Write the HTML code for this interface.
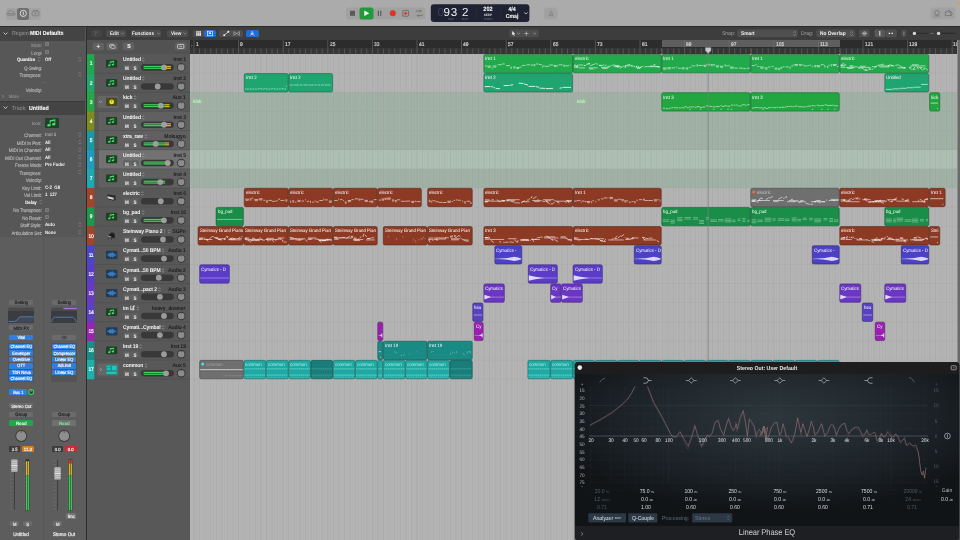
<!DOCTYPE html>
<html><head><meta charset="utf-8"><title>Logic Pro</title>
<style>
html,body{margin:0;padding:0}
body{width:960px;height:540px;overflow:hidden;position:relative;background:#595959;font-family:"Liberation Sans","Noto Sans CJK JP",sans-serif;}
div{position:absolute;box-sizing:border-box}
.t{white-space:nowrap;letter-spacing:0;text-rendering:geometricPrecision}
svg{position:absolute;left:0;top:0;overflow:visible}
svg text{font-family:"Liberation Sans","Noto Sans CJK JP",sans-serif;}
</style></head><body>
<div id="app" style="left:0;top:0;width:960px;height:540px;will-change:transform;overflow:hidden">
<div style="left:0.00px;top:0.00px;width:960.00px;height:26.30px;background:#ababab;"></div>
<div style="left:0.00px;top:26.00px;width:960.00px;height:0.80px;background:#2a2a2a;"></div>
<div style="left:5.50px;top:7.50px;width:35.50px;height:12.00px;background:#a1a1a1;border-radius:3px"></div>
<div style="left:17.30px;top:7.50px;width:12.00px;height:12.00px;background:#6f6f6f;border-radius:2.5px"></div>
<svg width="960" height="27" viewBox="0 0 960 27">
<g fill="none" stroke="#7b7b7b" stroke-width="0.8">
<path d="M7.6 15.2 h6.6 a1 1 0 0 0 .6 -1.6 a2 2 0 0 0 -2.2 -2 a2.4 2.4 0 0 0 -4.4 .8 a1.5 1.5 0 0 0 -.6 2.8 z"/>
<path d="M7.4 13.6 h7.4"/>
<rect x="32.2" y="11.2" width="6.6" height="4.6" rx="0.8"/>
<path d="M33.4 11.2 v-0.6 h4.2 v0.6"/>
<path d="M35.5 12.4 v2.2 M34.4 13.5 h2.2"/>
</g>
<circle cx="23.3" cy="13.4" r="3.1" fill="none" stroke="#f2f2f2" stroke-width="0.8"/>
<path d="M23.3 11.7 v3.4" stroke="#f2f2f2" stroke-width="0.8"/>
<!-- transport -->
<rect x="346.0" y="7.5" width="79.5" height="12" rx="3" fill="#a1a1a1"/>
<rect x="350" y="10.8" width="5" height="5" fill="#5a5a5a"/>
<rect x="359.5" y="7.5" width="14" height="12" rx="2.5" fill="#22993c"/>
<path d="M364.3 10.6 v5.4 l4.9 -2.7 z" fill="#fff"/>
<rect x="377.8" y="10.7" width="1.2" height="5.2" fill="#5a5a5a"/><rect x="380.2" y="10.7" width="1.2" height="5.2" fill="#5a5a5a"/>
<circle cx="392.8" cy="13.3" r="3" fill="#dc3228"/>
<rect x="402.8" y="10.4" width="5.8" height="5.8" rx="0.8" fill="none" stroke="#5a5a5a" stroke-width="0.7"/>
<circle cx="405.7" cy="13.3" r="1.4" fill="#dc3228"/>
<g fill="none" stroke="#666" stroke-width="0.8">
<path d="M416 12.2 a1.2 1.2 0 0 1 1.2 -1.2 h4 M420.2 9.8 l1.2 1.2 l-1.2 1.2"/>
<path d="M422.6 14.4 a1.2 1.2 0 0 1 -1.2 1.2 h-4 M418.4 16.8 l-1.2 -1.2 l1.2 -1.2"/>
</g>
<!-- LCD -->
<rect x="430.8" y="4.2" width="98.6" height="17.8" rx="3" fill="#1f2233"/>
<path d="M476.5 7 v12 M500.3 7 v12" stroke="#2c3044" stroke-width="0.5"/>
<path d="M524.3 12.4 l1.6 1.6 l1.6 -1.6" fill="none" stroke="#e8e8e8" stroke-width="0.8"/>
<!-- metronome btn -->
<rect x="544.2" y="7.5" width="13.3" height="12" rx="3" fill="#a1a1a1"/>
<path d="M549 15.8 l1.6 -4.6 h.9 l1.6 4.6 z M549.6 14.3 h3.2" fill="none" stroke="#7f7f7f" stroke-width="0.7"/>
<!-- right icons -->
<rect x="930.5" y="7.5" width="25" height="12" rx="3" fill="#a1a1a1"/>
<g fill="none" stroke="#6c6c6c" stroke-width="0.7">
<circle cx="937" cy="12.8" r="2.3"/><path d="M934.4 16 h5.2"/>
<path d="M945.4 12 h1.6 l.5 -1.3 h2.2 l.5 1.3 h.6 v3.6 h-5.4 z M948.6 12.8 l1.6 -1.8 l2.2 2.4 l-1.4 2.6"/>
</g>
<circle cx="957.3" cy="3.2" r="1.1" fill="#f39a1e"/>
</svg>
<div class="t" style="left:437.60px;transform-origin:0 50%;top:7px;font-size:11.6px;line-height:12px;color:#3d4256;font-weight:normal;transform:scaleX(1);">0</div>
<div class="t" style="left:443.40px;transform-origin:0 50%;top:7px;font-size:11.6px;line-height:12px;color:#f4f4f4;font-weight:normal;transform:scaleX(1);letter-spacing:0.9px">93</div>
<div class="t" style="left:462.00px;transform-origin:0 50%;top:7px;font-size:11.6px;line-height:12px;color:#f4f4f4;font-weight:normal;transform:scaleX(1);">2</div>
<div class="t" style="left:440.60px;width:20px;text-align:center;transform-origin:50% 50%;top:17px;font-size:2.89px;line-height:4px;color:#6f748a;font-weight:normal;transform:scaleX(0.9);">BAR</div>
<div class="t" style="left:455.40px;width:20px;text-align:center;transform-origin:50% 50%;top:17px;font-size:2.89px;line-height:4px;color:#6f748a;font-weight:normal;transform:scaleX(0.9);">BEAT</div>
<div class="t" style="left:473.20px;width:30px;text-align:center;transform-origin:50% 50%;top:6px;font-size:6.22px;line-height:7px;color:#f0f0f0;font-weight:bold;transform:scaleX(0.9);-webkit-text-stroke:0.12px #f0f0f0;">202</div>
<div class="t" style="left:473.20px;width:30px;text-align:center;transform-origin:50% 50%;top:13px;font-size:3.33px;line-height:4px;color:#c8cad4;font-weight:bold;transform:scaleX(0.9);-webkit-text-stroke:0.07px #c8cad4;">KEEP</div>
<div class="t" style="left:473.20px;width:30px;text-align:center;transform-origin:50% 50%;top:17px;font-size:2.89px;line-height:4px;color:#6f748a;font-weight:normal;transform:scaleX(0.9);">TEMPO</div>
<div class="t" style="left:496.60px;width:30px;text-align:center;transform-origin:50% 50%;top:7px;font-size:5.78px;line-height:6px;color:#f0f0f0;font-weight:bold;transform:scaleX(0.9);-webkit-text-stroke:0.12px #f0f0f0;">4/4</div>
<div class="t" style="left:496.60px;width:30px;text-align:center;transform-origin:50% 50%;top:14px;font-size:5.78px;line-height:6px;color:#f0f0f0;font-weight:bold;transform:scaleX(0.9);-webkit-text-stroke:0.12px #f0f0f0;">Cmaj</div>
<div style="left:0.00px;top:26.80px;width:85.60px;height:210.00px;background:#575757;"></div>
<div style="left:0.00px;top:236.50px;width:85.60px;height:304.00px;background:#5d5d5d;"></div>
<div style="left:85.50px;top:26.80px;width:1.30px;height:514.00px;background:#2c2c2c;"></div>
<div style="left:0.00px;top:26.80px;width:85.40px;height:13.90px;background:#444444;"></div>
<div class="t" style="left:11.60px;transform-origin:0 50%;top:31px;font-size:5.89px;line-height:6px;color:#9a9a9a;font-weight:normal;transform:scaleX(0.9);">Region:</div>
<div class="t" style="left:30.40px;transform-origin:0 50%;top:31px;font-size:5.89px;line-height:6px;color:#f2f2f2;font-weight:bold;transform:scaleX(0.9);-webkit-text-stroke:0.12px #f2f2f2;">MIDI Defaults</div>
<div class="t" style="right:918.20px;transform-origin:100% 50%;top:43px;font-size:5.0px;line-height:6px;color:#8a8a8a;font-weight:normal;transform:scaleX(0.9);-webkit-text-stroke:0.18px #8a8a8a;letter-spacing:-0.05px">Mute:</div>
<div style="left:44.60px;top:42.30px;width:4.00px;height:4.00px;background:#6a6a6a;border-radius:0.8px;border:0.4px solid #7c7c7c"></div>
<div class="t" style="right:918.20px;transform-origin:100% 50%;top:51px;font-size:5.0px;line-height:6px;color:#a8a8a8;font-weight:normal;transform:scaleX(0.9);-webkit-text-stroke:0.18px #a8a8a8;letter-spacing:-0.05px">Loop:</div>
<div style="left:44.60px;top:49.80px;width:4.00px;height:4.00px;background:#6a6a6a;border-radius:0.8px;border:0.4px solid #7c7c7c"></div>
<div class="t" style="right:924.80px;transform-origin:100% 50%;top:58px;font-size:4.78px;line-height:5px;color:#f0f0f0;font-weight:bold;transform:scaleX(0.9);-webkit-text-stroke:0.10px #f0f0f0;">Quantize</div>
<svg width="90" height="540"><path d="M37.8 58.699999999999996 l1.2 -1.3 l1.2 1.3 M37.8 60.1 l1.2 1.3 l1.2 -1.3" fill="none" stroke="#9c9c9c" stroke-width="0.55"/></svg>
<div class="t" style="right:918.20px;transform-origin:100% 50%;top:58px;font-size:5.0px;line-height:6px;color:#b4b4b4;font-weight:normal;transform:scaleX(0.9);-webkit-text-stroke:0.18px #b4b4b4;letter-spacing:-0.05px"></div>
<div class="t" style="left:44.80px;transform-origin:0 50%;top:58px;font-size:4.89px;line-height:5px;color:#f0f0f0;font-weight:bold;transform:scaleX(0.9);letter-spacing:-0.05px">Off</div>
<svg width="90" height="540"><path d="M78.6 58.699999999999996 l1.2 -1.3 l1.2 1.3 M78.6 60.1 l1.2 1.3 l1.2 -1.3" fill="none" stroke="#9c9c9c" stroke-width="0.55"/></svg>
<div class="t" style="right:918.20px;transform-origin:100% 50%;top:66px;font-size:5.0px;line-height:6px;color:#b4b4b4;font-weight:normal;transform:scaleX(0.9);-webkit-text-stroke:0.18px #b4b4b4;letter-spacing:-0.05px">Q-Swing:</div>
<div class="t" style="right:918.20px;transform-origin:100% 50%;top:73px;font-size:5.0px;line-height:6px;color:#b4b4b4;font-weight:normal;transform:scaleX(0.9);-webkit-text-stroke:0.18px #b4b4b4;letter-spacing:-0.05px">Transpose:</div>
<svg width="90" height="540"><path d="M78.6 73.7 l1.2 -1.3 l1.2 1.3 M78.6 75.10000000000001 l1.2 1.3 l1.2 -1.3" fill="none" stroke="#9c9c9c" stroke-width="0.55"/></svg>
<div class="t" style="left:33.60px;width:20px;text-align:center;transform-origin:50% 50%;top:80px;font-size:4.67px;line-height:5px;color:#8a8a8a;font-weight:normal;transform:scaleX(0.9);">-  -</div>
<div class="t" style="right:918.20px;transform-origin:100% 50%;top:88px;font-size:5.0px;line-height:6px;color:#b4b4b4;font-weight:normal;transform:scaleX(0.9);-webkit-text-stroke:0.18px #b4b4b4;letter-spacing:-0.05px">Velocity:</div>
<div class="t" style="left:8.60px;transform-origin:0 50%;top:95px;font-size:4.78px;line-height:5px;color:#a3a3a3;font-weight:normal;transform:scaleX(0.9);">More</div>
<div style="left:0.00px;top:101.00px;width:85.40px;height:0.60px;background:#3a3a3a;"></div>
<div style="left:0.00px;top:101.60px;width:85.40px;height:13.40px;background:#444444;"></div>
<svg width="90" height="120"><path d="M3.6 32.6 l1.9 1.9 l1.9 -1.9" fill="none" stroke="#e6e6e6" stroke-width="0.8"/><path d="M3.6 106.6 l1.9 1.9 l1.9 -1.9" fill="none" stroke="#e6e6e6" stroke-width="0.8"/><path d="M2.4 95 l1.3 1.4 l-1.3 1.4" fill="none" stroke="#b0b0b0" stroke-width="0.6"/></svg>
<div class="t" style="left:11.60px;transform-origin:0 50%;top:106px;font-size:5.89px;line-height:6px;color:#9a9a9a;font-weight:normal;transform:scaleX(0.9);">Track:</div>
<div class="t" style="left:28.60px;transform-origin:0 50%;top:106px;font-size:5.89px;line-height:6px;color:#f2f2f2;font-weight:bold;transform:scaleX(0.9);-webkit-text-stroke:0.12px #f2f2f2;">Untitled</div>
<div class="t" style="right:918.20px;transform-origin:100% 50%;top:122px;font-size:4.78px;line-height:5px;color:#b4b4b4;font-weight:normal;transform:scaleX(0.9);">Icon:</div>
<div style="left:45.00px;top:117.60px;width:13.60px;height:10.60px;background:#22412c;border-radius:1px"></div>
<svg width="90" height="140"><path d="M49.77 120.17 L55.19 119.23 L55.19 120.76 L49.77 121.70z" fill="#48e264"/><path d="M50.12 120.52 V125.13 M54.84 119.58 V124.18" stroke="#48e264" stroke-width="0.73"/><ellipse cx="48.94" cy="125.24" rx="1.59" ry="1.18" fill="#48e264"/><ellipse cx="53.66" cy="124.30" rx="1.59" ry="1.18" fill="#48e264"/></svg>
<div class="t" style="right:918.20px;transform-origin:100% 50%;top:133px;font-size:5.0px;line-height:6px;color:#b4b4b4;font-weight:normal;transform:scaleX(0.9);-webkit-text-stroke:0.18px #b4b4b4;letter-spacing:-0.05px">Channel:</div>
<div class="t" style="left:44.80px;transform-origin:0 50%;top:133px;font-size:4.89px;line-height:5px;color:#a8a8a8;font-weight:bold;transform:scaleX(0.9);letter-spacing:-0.05px">Inst 5</div>
<svg width="90" height="540"><path d="M78.6 133.9 l1.2 -1.3 l1.2 1.3 M78.6 135.29999999999998 l1.2 1.3 l1.2 -1.3" fill="none" stroke="#9c9c9c" stroke-width="0.55"/></svg>
<div class="t" style="right:918.20px;transform-origin:100% 50%;top:141px;font-size:5.0px;line-height:6px;color:#b4b4b4;font-weight:normal;transform:scaleX(0.9);-webkit-text-stroke:0.18px #b4b4b4;letter-spacing:-0.05px">MIDI In Port:</div>
<div class="t" style="left:44.80px;transform-origin:0 50%;top:141px;font-size:4.89px;line-height:5px;color:#f0f0f0;font-weight:bold;transform:scaleX(0.9);letter-spacing:-0.05px">All</div>
<svg width="90" height="540"><path d="M78.6 141.4 l1.2 -1.3 l1.2 1.3 M78.6 142.79999999999998 l1.2 1.3 l1.2 -1.3" fill="none" stroke="#9c9c9c" stroke-width="0.55"/></svg>
<div class="t" style="right:918.20px;transform-origin:100% 50%;top:148px;font-size:5.0px;line-height:6px;color:#b4b4b4;font-weight:normal;transform:scaleX(0.9);-webkit-text-stroke:0.18px #b4b4b4;letter-spacing:-0.05px">MIDI In Channel:</div>
<div class="t" style="left:44.80px;transform-origin:0 50%;top:148px;font-size:4.89px;line-height:5px;color:#f0f0f0;font-weight:bold;transform:scaleX(0.9);letter-spacing:-0.05px">All</div>
<svg width="90" height="540"><path d="M78.6 148.9 l1.2 -1.3 l1.2 1.3 M78.6 150.29999999999998 l1.2 1.3 l1.2 -1.3" fill="none" stroke="#9c9c9c" stroke-width="0.55"/></svg>
<div class="t" style="right:918.20px;transform-origin:100% 50%;top:156px;font-size:5.0px;line-height:6px;color:#b4b4b4;font-weight:normal;transform:scaleX(0.9);-webkit-text-stroke:0.18px #b4b4b4;letter-spacing:-0.05px">MIDI Out Channel:</div>
<div class="t" style="left:44.80px;transform-origin:0 50%;top:156px;font-size:4.89px;line-height:5px;color:#f0f0f0;font-weight:bold;transform:scaleX(0.9);letter-spacing:-0.05px">All</div>
<svg width="90" height="540"><path d="M78.6 156.4 l1.2 -1.3 l1.2 1.3 M78.6 157.79999999999998 l1.2 1.3 l1.2 -1.3" fill="none" stroke="#9c9c9c" stroke-width="0.55"/></svg>
<div class="t" style="right:918.20px;transform-origin:100% 50%;top:163px;font-size:5.0px;line-height:6px;color:#b4b4b4;font-weight:normal;transform:scaleX(0.9);-webkit-text-stroke:0.18px #b4b4b4;letter-spacing:-0.05px">Freeze Mode:</div>
<div class="t" style="left:44.80px;transform-origin:0 50%;top:163px;font-size:4.89px;line-height:5px;color:#f0f0f0;font-weight:bold;transform:scaleX(0.9);letter-spacing:-0.05px">Pre Fader</div>
<svg width="90" height="540"><path d="M78.6 163.9 l1.2 -1.3 l1.2 1.3 M78.6 165.29999999999998 l1.2 1.3 l1.2 -1.3" fill="none" stroke="#9c9c9c" stroke-width="0.55"/></svg>
<div class="t" style="right:918.20px;transform-origin:100% 50%;top:171px;font-size:5.0px;line-height:6px;color:#b4b4b4;font-weight:normal;transform:scaleX(0.9);-webkit-text-stroke:0.18px #b4b4b4;letter-spacing:-0.05px">Transpose:</div>
<svg width="90" height="540"><path d="M78.6 171.4 l1.2 -1.3 l1.2 1.3 M78.6 172.79999999999998 l1.2 1.3 l1.2 -1.3" fill="none" stroke="#9c9c9c" stroke-width="0.55"/></svg>
<div class="t" style="right:918.20px;transform-origin:100% 50%;top:178px;font-size:5.0px;line-height:6px;color:#b4b4b4;font-weight:normal;transform:scaleX(0.9);-webkit-text-stroke:0.18px #b4b4b4;letter-spacing:-0.05px">Velocity:</div>
<div class="t" style="right:918.20px;transform-origin:100% 50%;top:186px;font-size:5.0px;line-height:6px;color:#b4b4b4;font-weight:normal;transform:scaleX(0.9);-webkit-text-stroke:0.18px #b4b4b4;letter-spacing:-0.05px">Key Limit:</div>
<div class="t" style="left:44.80px;transform-origin:0 50%;top:186px;font-size:4.89px;line-height:5px;color:#f0f0f0;font-weight:bold;transform:scaleX(0.9);letter-spacing:-0.05px">C-2&nbsp;&nbsp;G8</div>
<div class="t" style="right:918.20px;transform-origin:100% 50%;top:193px;font-size:5.0px;line-height:6px;color:#b4b4b4;font-weight:normal;transform:scaleX(0.9);-webkit-text-stroke:0.18px #b4b4b4;letter-spacing:-0.05px">Vel Limit:</div>
<div class="t" style="left:44.80px;transform-origin:0 50%;top:193px;font-size:4.89px;line-height:5px;color:#f0f0f0;font-weight:bold;transform:scaleX(0.9);letter-spacing:-0.05px">1&nbsp;&nbsp;127</div>
<div class="t" style="right:923.40px;transform-origin:100% 50%;top:201px;font-size:4.78px;line-height:5px;color:#f0f0f0;font-weight:bold;transform:scaleX(0.9);-webkit-text-stroke:0.10px #f0f0f0;">Delay</div>
<svg width="90" height="540"><path d="M39.4 201.4 l1.2 -1.3 l1.2 1.3 M39.4 202.79999999999998 l1.2 1.3 l1.2 -1.3" fill="none" stroke="#9c9c9c" stroke-width="0.55"/></svg>
<div class="t" style="right:918.20px;transform-origin:100% 50%;top:208px;font-size:5.0px;line-height:6px;color:#b4b4b4;font-weight:normal;transform:scaleX(0.9);-webkit-text-stroke:0.18px #b4b4b4;letter-spacing:-0.05px">No Transpose:</div>
<div style="left:44.60px;top:207.50px;width:4.00px;height:4.00px;background:#6a6a6a;border-radius:0.8px;border:0.4px solid #7c7c7c"></div>
<div class="t" style="right:918.20px;transform-origin:100% 50%;top:216px;font-size:5.0px;line-height:6px;color:#b4b4b4;font-weight:normal;transform:scaleX(0.9);-webkit-text-stroke:0.18px #b4b4b4;letter-spacing:-0.05px">No Reset:</div>
<div style="left:44.60px;top:215.00px;width:4.00px;height:4.00px;background:#6a6a6a;border-radius:0.8px;border:0.4px solid #7c7c7c"></div>
<div class="t" style="right:918.20px;transform-origin:100% 50%;top:223px;font-size:5.0px;line-height:6px;color:#b4b4b4;font-weight:normal;transform:scaleX(0.9);-webkit-text-stroke:0.18px #b4b4b4;letter-spacing:-0.05px">Staff Style:</div>
<div class="t" style="left:44.80px;transform-origin:0 50%;top:223px;font-size:4.89px;line-height:5px;color:#f0f0f0;font-weight:bold;transform:scaleX(0.9);letter-spacing:-0.05px">Auto</div>
<svg width="90" height="540"><path d="M78.6 223.9 l1.2 -1.3 l1.2 1.3 M78.6 225.29999999999998 l1.2 1.3 l1.2 -1.3" fill="none" stroke="#9c9c9c" stroke-width="0.55"/></svg>
<div class="t" style="right:918.20px;transform-origin:100% 50%;top:231px;font-size:5.0px;line-height:6px;color:#b4b4b4;font-weight:normal;transform:scaleX(0.9);-webkit-text-stroke:0.18px #b4b4b4;letter-spacing:-0.05px">Articulation Set:</div>
<div class="t" style="left:44.80px;transform-origin:0 50%;top:231px;font-size:4.89px;line-height:5px;color:#f0f0f0;font-weight:bold;transform:scaleX(0.9);letter-spacing:-0.05px">None</div>
<svg width="90" height="540"><path d="M78.6 231.4 l1.2 -1.3 l1.2 1.3 M78.6 232.79999999999998 l1.2 1.3 l1.2 -1.3" fill="none" stroke="#9c9c9c" stroke-width="0.55"/></svg>
<div style="left:42.80px;top:236.50px;width:0.60px;height:304.00px;background:#565656;"></div>
<div style="left:8.90px;top:299.50px;width:24.60px;height:5.40px;background:#6b6b6b;border-radius:1.2px"></div>
<div class="t" style="left:3.90px;width:34.6px;text-align:center;transform-origin:50% 50%;top:301px;font-size:4.78px;line-height:5px;color:#1c1c1c;font-weight:normal;transform:scaleX(0.9);-webkit-text-stroke:0.17px #1c1c1c;">Setting</div>
<div style="left:8.40px;top:311.00px;width:25.60px;height:11.60px;background:#3a3c40;"></div>
<div style="left:51.90px;top:299.50px;width:24.60px;height:5.40px;background:#6b6b6b;border-radius:1.2px"></div>
<div class="t" style="left:46.90px;width:34.6px;text-align:center;transform-origin:50% 50%;top:301px;font-size:4.78px;line-height:5px;color:#1c1c1c;font-weight:normal;transform:scaleX(0.9);-webkit-text-stroke:0.17px #1c1c1c;">Setting</div>
<div style="left:51.40px;top:311.00px;width:25.60px;height:11.60px;background:#3a3c40;"></div>
<svg width="90" height="540">
<rect x="8.4" y="307.6" width="25.6" height="3.4" fill="#4a4a4a"/>
<rect x="51.4" y="307.6" width="25.6" height="3.4" fill="#4a4a4a"/>
<rect x="63.4" y="307.9" width="13.4" height="1.3" fill="#b070e0"/>
<path d="M8.6 321.4 h6 c3 0 3 -4.6 6 -4.6 h13.2" fill="none" stroke="#5f86c0" stroke-width="0.8"/>
<path d="M8.6 321.4 h6 c3 0 3 -4.6 6 -4.6 h13.2 v5.6 h-25.2z" fill="#5f86c0" opacity="0.18"/>
<path d="M51.6 322 c1.2 -4.2 1.8 -4.8 4 -4.8 h16 c2.6 0 3.2 1.2 4.8 5" fill="none" stroke="#5f86c0" stroke-width="0.8"/>
</svg>
<div style="left:8.90px;top:325.10px;width:24.60px;height:5.00px;background:#6b6b6b;border-radius:1.2px"></div>
<div class="t" style="left:3.90px;width:34.6px;text-align:center;transform-origin:50% 50%;top:326px;font-size:4.67px;line-height:5px;color:#1c1c1c;font-weight:normal;transform:scaleX(0.9);-webkit-text-stroke:0.16px #1c1c1c;">MIDI FX</div>
<div style="left:8.90px;top:334.80px;width:24.60px;height:5.40px;background:#2f7fe0;border-radius:1.2px"></div>
<div class="t" style="left:3.90px;width:34.6px;text-align:center;transform-origin:50% 50%;top:335px;font-size:4.44px;line-height:5px;color:#fff;font-weight:normal;transform:scaleX(0.9);-webkit-text-stroke:0.16px #fff;">Vital</div>
<div style="left:51.90px;top:334.80px;width:24.60px;height:5.40px;background:#6b6b6b;border-radius:1.2px"></div>
<svg width="90" height="540"><circle cx="63.2" cy="337.5" r="1.4" fill="none" stroke="#2b2b2b" stroke-width="0.5"/><circle cx="65.2" cy="337.5" r="1.4" fill="none" stroke="#2b2b2b" stroke-width="0.5"/></svg>
<div style="left:8.40px;top:342.60px;width:25.60px;height:39.40px;background:#545454;border-radius:1px"></div>
<div style="left:51.40px;top:342.60px;width:25.60px;height:39.40px;background:#545454;border-radius:1px"></div>
<div style="left:8.90px;top:343.85px;width:24.60px;height:5.50px;background:#2f7fe0;border-radius:1.2px"></div>
<div class="t" style="left:3.90px;width:34.6px;text-align:center;transform-origin:50% 50%;top:344px;font-size:4.44px;line-height:5px;color:#fff;font-weight:normal;transform:scaleX(0.9);-webkit-text-stroke:0.16px #fff;">Channel EQ</div>
<div style="left:8.90px;top:350.27px;width:24.60px;height:5.50px;background:#2f7fe0;border-radius:1.2px"></div>
<div class="t" style="left:3.90px;width:34.6px;text-align:center;transform-origin:50% 50%;top:351px;font-size:4.44px;line-height:5px;color:#fff;font-weight:normal;transform:scaleX(0.9);-webkit-text-stroke:0.16px #fff;">Enveloper</div>
<div style="left:8.90px;top:356.69px;width:24.60px;height:5.50px;background:#2f7fe0;border-radius:1.2px"></div>
<div class="t" style="left:3.90px;width:34.6px;text-align:center;transform-origin:50% 50%;top:357px;font-size:4.44px;line-height:5px;color:#fff;font-weight:normal;transform:scaleX(0.9);-webkit-text-stroke:0.16px #fff;">Overdrive</div>
<div style="left:8.90px;top:363.11px;width:24.60px;height:5.50px;background:#2f7fe0;border-radius:1.2px"></div>
<div class="t" style="left:3.90px;width:34.6px;text-align:center;transform-origin:50% 50%;top:363px;font-size:4.44px;line-height:5px;color:#fff;font-weight:normal;transform:scaleX(0.9);-webkit-text-stroke:0.16px #fff;">OTT</div>
<div style="left:8.90px;top:369.53px;width:24.60px;height:5.50px;background:#2f7fe0;border-radius:1.2px"></div>
<div class="t" style="left:3.90px;width:34.6px;text-align:center;transform-origin:50% 50%;top:370px;font-size:4.44px;line-height:5px;color:#fff;font-weight:normal;transform:scaleX(0.9);-webkit-text-stroke:0.16px #fff;">TDR Nova</div>
<div style="left:8.90px;top:375.95px;width:24.60px;height:5.50px;background:#2f7fe0;border-radius:1.2px"></div>
<div class="t" style="left:3.90px;width:34.6px;text-align:center;transform-origin:50% 50%;top:376px;font-size:4.44px;line-height:5px;color:#fff;font-weight:normal;transform:scaleX(0.9);-webkit-text-stroke:0.16px #fff;">Channel EQ</div>
<div style="left:51.90px;top:343.85px;width:24.60px;height:5.50px;background:#2f7fe0;border-radius:1.2px"></div>
<div class="t" style="left:46.90px;width:34.6px;text-align:center;transform-origin:50% 50%;top:344px;font-size:4.44px;line-height:5px;color:#fff;font-weight:normal;transform:scaleX(0.9);-webkit-text-stroke:0.16px #fff;">Channel EQ</div>
<div style="left:51.90px;top:350.27px;width:24.60px;height:5.50px;background:#2f7fe0;border-radius:1.2px"></div>
<div class="t" style="left:46.90px;width:34.6px;text-align:center;transform-origin:50% 50%;top:351px;font-size:4.44px;line-height:5px;color:#fff;font-weight:normal;transform:scaleX(0.9);-webkit-text-stroke:0.16px #fff;">Compressor</div>
<div style="left:51.90px;top:356.69px;width:24.60px;height:5.50px;background:#2f7fe0;border-radius:1.2px"></div>
<div class="t" style="left:46.90px;width:34.6px;text-align:center;transform-origin:50% 50%;top:357px;font-size:4.44px;line-height:5px;color:#fff;font-weight:normal;transform:scaleX(0.9);-webkit-text-stroke:0.16px #fff;">Linear EQ</div>
<div style="left:51.90px;top:363.11px;width:24.60px;height:5.50px;background:#2f7fe0;border-radius:1.2px"></div>
<div class="t" style="left:46.90px;width:34.6px;text-align:center;transform-origin:50% 50%;top:363px;font-size:4.44px;line-height:5px;color:#fff;font-weight:normal;transform:scaleX(0.9);-webkit-text-stroke:0.16px #fff;">AdLimit</div>
<div style="left:51.90px;top:369.53px;width:24.60px;height:5.50px;background:#2f7fe0;border-radius:1.2px"></div>
<div class="t" style="left:46.90px;width:34.6px;text-align:center;transform-origin:50% 50%;top:370px;font-size:4.44px;line-height:5px;color:#fff;font-weight:normal;transform:scaleX(0.9);-webkit-text-stroke:0.16px #fff;">Linear EQ</div>
<div style="left:8.90px;top:389.20px;width:18.60px;height:5.60px;background:#2f7fe0;border-radius:1.2px"></div>
<div class="t" style="left:3.90px;width:28.6px;text-align:center;transform-origin:50% 50%;top:390px;font-size:4.44px;line-height:5px;color:#fff;font-weight:normal;transform:scaleX(0.9);-webkit-text-stroke:0.16px #fff;">Bus 1</div>
<svg width="90" height="540"><circle cx="31.2" cy="392.0" r="2.5" fill="#3a3a3a" stroke="#3fd070" stroke-width="1.1"/><path d="M31.2 392 v-2.2" stroke="#ddd" stroke-width="0.5"/></svg>
<div style="left:8.90px;top:402.70px;width:24.60px;height:5.40px;background:#6b6b6b;border-radius:1.2px"></div>
<div class="t" style="left:3.90px;width:34.6px;text-align:center;transform-origin:50% 50%;top:404px;font-size:4.67px;line-height:5px;color:#f0f0f0;font-weight:normal;transform:scaleX(0.9);-webkit-text-stroke:0.16px #f0f0f0;">Stereo Out</div>
<div style="left:8.90px;top:411.90px;width:24.60px;height:5.40px;background:#6b6b6b;border-radius:1.2px"></div>
<div class="t" style="left:3.90px;width:34.6px;text-align:center;transform-origin:50% 50%;top:413px;font-size:4.78px;line-height:5px;color:#1c1c1c;font-weight:normal;transform:scaleX(0.9);-webkit-text-stroke:0.17px #1c1c1c;">Group</div>
<div style="left:51.90px;top:411.90px;width:24.60px;height:5.40px;background:#6b6b6b;border-radius:1.2px"></div>
<div class="t" style="left:46.90px;width:34.6px;text-align:center;transform-origin:50% 50%;top:413px;font-size:4.78px;line-height:5px;color:#1c1c1c;font-weight:normal;transform:scaleX(0.9);-webkit-text-stroke:0.17px #1c1c1c;">Group</div>
<div style="left:8.90px;top:420.20px;width:24.60px;height:5.60px;background:#27a44a;border-radius:1.2px"></div>
<div class="t" style="left:3.90px;width:34.6px;text-align:center;transform-origin:50% 50%;top:422px;font-size:4.89px;line-height:5px;color:#f4fff4;font-weight:bold;transform:scaleX(0.9);">Read</div>
<div style="left:51.90px;top:420.20px;width:24.60px;height:5.60px;background:#707070;border-radius:1.2px"></div>
<div class="t" style="left:46.90px;width:34.6px;text-align:center;transform-origin:50% 50%;top:422px;font-size:4.89px;line-height:5px;color:#7ff09a;font-weight:bold;transform:scaleX(0.9);">Read</div>
<svg width="90" height="540">
<circle cx="21.2" cy="436.0" r="5.9" fill="#3a3a3a"/><circle cx="21.2" cy="436.0" r="5.0" fill="#8e8e8e"/><path d="M21.2 431.2 v1.6" stroke="#2a2a2a" stroke-width="0.6"/>
<circle cx="64.2" cy="436.0" r="5.9" fill="#3a3a3a"/><circle cx="64.2" cy="436.0" r="5.0" fill="#8e8e8e"/><path d="M64.2 431.2 v1.6" stroke="#2a2a2a" stroke-width="0.6"/>
</svg>
<div style="left:8.80px;top:445.60px;width:11.60px;height:6.00px;background:#3b3b3b;border-radius:1.2px"></div>
<div class="t" style="left:3.80px;width:21.6px;text-align:center;transform-origin:50% 50%;top:447px;font-size:4.67px;line-height:5px;color:#e8e8e8;font-weight:normal;transform:scaleX(0.9);-webkit-text-stroke:0.16px #e8e8e8;">3.5</div>
<div style="left:22.00px;top:445.60px;width:11.60px;height:6.00px;background:#d97a1e;border-radius:1.2px"></div>
<div class="t" style="left:17.00px;width:21.6px;text-align:center;transform-origin:50% 50%;top:447px;font-size:4.67px;line-height:5px;color:#fff;font-weight:normal;transform:scaleX(0.9);-webkit-text-stroke:0.16px #fff;">11.3</div>
<div style="left:51.80px;top:445.60px;width:11.60px;height:6.00px;background:#3b3b3b;border-radius:1.2px"></div>
<div class="t" style="left:46.80px;width:21.6px;text-align:center;transform-origin:50% 50%;top:447px;font-size:4.67px;line-height:5px;color:#e8e8e8;font-weight:normal;transform:scaleX(0.9);-webkit-text-stroke:0.16px #e8e8e8;">0.0</div>
<div style="left:65.00px;top:445.60px;width:11.60px;height:6.00px;background:#d0282e;border-radius:1.2px"></div>
<div class="t" style="left:60.00px;width:21.6px;text-align:center;transform-origin:50% 50%;top:447px;font-size:4.67px;line-height:5px;color:#fff;font-weight:normal;transform:scaleX(0.9);-webkit-text-stroke:0.16px #fff;">0.0</div>
<svg width="90" height="540"><rect x="13.9" y="460" width="1" height="50" fill="#3e3e3e"/><path d="M10.2 461.0 h2.2" stroke="#8a8a8a" stroke-width="0.35"/><path d="M24.2 460.0 h1.4" stroke="#8a8a8a" stroke-width="0.35"/><path d="M10.2 464.7 h2.2" stroke="#8a8a8a" stroke-width="0.35"/><path d="M24.2 463.7 h1.4" stroke="#8a8a8a" stroke-width="0.35"/><path d="M10.2 468.4 h2.2" stroke="#8a8a8a" stroke-width="0.35"/><path d="M24.2 467.4 h1.4" stroke="#8a8a8a" stroke-width="0.35"/><path d="M10.2 472.1 h2.2" stroke="#8a8a8a" stroke-width="0.35"/><path d="M24.2 471.1 h1.4" stroke="#8a8a8a" stroke-width="0.35"/><path d="M10.2 475.8 h2.2" stroke="#8a8a8a" stroke-width="0.35"/><path d="M24.2 474.8 h1.4" stroke="#8a8a8a" stroke-width="0.35"/><path d="M10.2 479.5 h2.2" stroke="#8a8a8a" stroke-width="0.35"/><path d="M24.2 478.5 h1.4" stroke="#8a8a8a" stroke-width="0.35"/><path d="M10.2 483.2 h2.2" stroke="#8a8a8a" stroke-width="0.35"/><path d="M24.2 482.2 h1.4" stroke="#8a8a8a" stroke-width="0.35"/><path d="M10.2 486.9 h2.2" stroke="#8a8a8a" stroke-width="0.35"/><path d="M24.2 485.9 h1.4" stroke="#8a8a8a" stroke-width="0.35"/><path d="M10.2 490.6 h2.2" stroke="#8a8a8a" stroke-width="0.35"/><path d="M24.2 489.6 h1.4" stroke="#8a8a8a" stroke-width="0.35"/><path d="M10.2 494.3 h2.2" stroke="#8a8a8a" stroke-width="0.35"/><path d="M24.2 493.3 h1.4" stroke="#8a8a8a" stroke-width="0.35"/><path d="M10.2 498.0 h2.2" stroke="#8a8a8a" stroke-width="0.35"/><path d="M24.2 497.0 h1.4" stroke="#8a8a8a" stroke-width="0.35"/><path d="M10.2 501.7 h2.2" stroke="#8a8a8a" stroke-width="0.35"/><path d="M24.2 500.7 h1.4" stroke="#8a8a8a" stroke-width="0.35"/><path d="M10.2 505.4 h2.2" stroke="#8a8a8a" stroke-width="0.35"/><path d="M24.2 504.4 h1.4" stroke="#8a8a8a" stroke-width="0.35"/><path d="M10.2 509.1 h2.2" stroke="#8a8a8a" stroke-width="0.35"/><path d="M24.2 508.1 h1.4" stroke="#8a8a8a" stroke-width="0.35"/><rect x="11.3" y="459.4" width="6.2" height="12.4" rx="0.8" fill="#c9c9c9"/><path d="M11.3 460.59999999999997 h6.2" stroke="#8d8d8d" stroke-width="0.5"/><path d="M11.3 462.59999999999997 h6.2" stroke="#8d8d8d" stroke-width="0.5"/><path d="M11.3 464.59999999999997 h6.2" stroke="#8d8d8d" stroke-width="0.5"/><path d="M11.3 466.59999999999997 h6.2" stroke="#8d8d8d" stroke-width="0.5"/><path d="M11.3 468.59999999999997 h6.2" stroke="#8d8d8d" stroke-width="0.5"/><path d="M11.3 470.59999999999997 h6.2" stroke="#8d8d8d" stroke-width="0.5"/><path d="M11.3 465.59999999999997 h6.2" stroke="#f4f4f4" stroke-width="0.7"/><rect x="25.5" y="459.4" width="3.8" height="51.4" fill="#2e2e2e"/><rect x="25.849999999999998" y="461.2" width="1.3" height="14.2" fill="#d9b92a"/><rect x="25.849999999999998" y="475.4" width="1.3" height="35" fill="#3fc95a"/><rect x="27.65" y="461.2" width="1.3" height="14.2" fill="#d9b92a"/><rect x="27.65" y="475.4" width="1.3" height="35" fill="#3fc95a"/></svg>
<svg width="90" height="540"><rect x="57.1" y="460" width="1" height="50" fill="#3e3e3e"/><path d="M53.4 461.0 h2.2" stroke="#8a8a8a" stroke-width="0.35"/><path d="M67.2 460.0 h1.4" stroke="#8a8a8a" stroke-width="0.35"/><path d="M53.4 464.7 h2.2" stroke="#8a8a8a" stroke-width="0.35"/><path d="M67.2 463.7 h1.4" stroke="#8a8a8a" stroke-width="0.35"/><path d="M53.4 468.4 h2.2" stroke="#8a8a8a" stroke-width="0.35"/><path d="M67.2 467.4 h1.4" stroke="#8a8a8a" stroke-width="0.35"/><path d="M53.4 472.1 h2.2" stroke="#8a8a8a" stroke-width="0.35"/><path d="M67.2 471.1 h1.4" stroke="#8a8a8a" stroke-width="0.35"/><path d="M53.4 475.8 h2.2" stroke="#8a8a8a" stroke-width="0.35"/><path d="M67.2 474.8 h1.4" stroke="#8a8a8a" stroke-width="0.35"/><path d="M53.4 479.5 h2.2" stroke="#8a8a8a" stroke-width="0.35"/><path d="M67.2 478.5 h1.4" stroke="#8a8a8a" stroke-width="0.35"/><path d="M53.4 483.2 h2.2" stroke="#8a8a8a" stroke-width="0.35"/><path d="M67.2 482.2 h1.4" stroke="#8a8a8a" stroke-width="0.35"/><path d="M53.4 486.9 h2.2" stroke="#8a8a8a" stroke-width="0.35"/><path d="M67.2 485.9 h1.4" stroke="#8a8a8a" stroke-width="0.35"/><path d="M53.4 490.6 h2.2" stroke="#8a8a8a" stroke-width="0.35"/><path d="M67.2 489.6 h1.4" stroke="#8a8a8a" stroke-width="0.35"/><path d="M53.4 494.3 h2.2" stroke="#8a8a8a" stroke-width="0.35"/><path d="M67.2 493.3 h1.4" stroke="#8a8a8a" stroke-width="0.35"/><path d="M53.4 498.0 h2.2" stroke="#8a8a8a" stroke-width="0.35"/><path d="M67.2 497.0 h1.4" stroke="#8a8a8a" stroke-width="0.35"/><path d="M53.4 501.7 h2.2" stroke="#8a8a8a" stroke-width="0.35"/><path d="M67.2 500.7 h1.4" stroke="#8a8a8a" stroke-width="0.35"/><path d="M53.4 505.4 h2.2" stroke="#8a8a8a" stroke-width="0.35"/><path d="M67.2 504.4 h1.4" stroke="#8a8a8a" stroke-width="0.35"/><path d="M53.4 509.1 h2.2" stroke="#8a8a8a" stroke-width="0.35"/><path d="M67.2 508.1 h1.4" stroke="#8a8a8a" stroke-width="0.35"/><rect x="54.5" y="467.2" width="6.2" height="12.4" rx="0.8" fill="#c9c9c9"/><path d="M54.5 468.4 h6.2" stroke="#8d8d8d" stroke-width="0.5"/><path d="M54.5 470.4 h6.2" stroke="#8d8d8d" stroke-width="0.5"/><path d="M54.5 472.4 h6.2" stroke="#8d8d8d" stroke-width="0.5"/><path d="M54.5 474.4 h6.2" stroke="#8d8d8d" stroke-width="0.5"/><path d="M54.5 476.4 h6.2" stroke="#8d8d8d" stroke-width="0.5"/><path d="M54.5 478.4 h6.2" stroke="#8d8d8d" stroke-width="0.5"/><path d="M54.5 473.4 h6.2" stroke="#f4f4f4" stroke-width="0.7"/><rect x="68.5" y="459.4" width="3.8" height="51.4" fill="#2e2e2e"/><rect x="68.85000000000001" y="459.8" width="1.3" height="3.4" fill="#e03a30"/><rect x="68.85000000000001" y="463.4" width="1.3" height="12" fill="#d9b92a"/><rect x="68.85000000000001" y="475.4" width="1.3" height="35" fill="#3fc95a"/><rect x="70.65" y="459.8" width="1.3" height="3.4" fill="#e03a30"/><rect x="70.65" y="463.4" width="1.3" height="12" fill="#d9b92a"/><rect x="70.65" y="475.4" width="1.3" height="35" fill="#3fc95a"/></svg>
<div style="left:65.80px;top:513.10px;width:10.40px;height:5.80px;background:#747474;border-radius:1.2px"></div>
<div class="t" style="left:60.80px;width:20.4px;text-align:center;transform-origin:50% 50%;top:514px;font-size:4.56px;line-height:5px;color:#f4f4f4;font-weight:normal;transform:scaleX(0.9);-webkit-text-stroke:0.16px #f4f4f4;">Bnc</div>
<div style="left:9.50px;top:521.00px;width:9.40px;height:5.20px;background:#6b6b6b;border-radius:1.2px"></div>
<div class="t" style="left:4.50px;width:19.4px;text-align:center;transform-origin:50% 50%;top:522px;font-size:4.67px;line-height:5px;color:#f0f0f0;font-weight:normal;transform:scaleX(0.9);-webkit-text-stroke:0.16px #f0f0f0;">M</div>
<div style="left:23.10px;top:521.00px;width:9.40px;height:5.20px;background:#6b6b6b;border-radius:1.2px"></div>
<div class="t" style="left:18.10px;width:19.4px;text-align:center;transform-origin:50% 50%;top:522px;font-size:4.67px;line-height:5px;color:#f0f0f0;font-weight:normal;transform:scaleX(0.9);-webkit-text-stroke:0.16px #f0f0f0;">S</div>
<div style="left:52.70px;top:521.00px;width:9.40px;height:5.20px;background:#6b6b6b;border-radius:1.2px"></div>
<div class="t" style="left:47.70px;width:19.4px;text-align:center;transform-origin:50% 50%;top:522px;font-size:4.67px;line-height:5px;color:#f0f0f0;font-weight:normal;transform:scaleX(0.9);-webkit-text-stroke:0.16px #f0f0f0;">M</div>
<div class="t" style="left:1.20px;width:40px;text-align:center;transform-origin:50% 50%;top:532px;font-size:5.11px;line-height:6px;color:#f0f0f0;font-weight:normal;transform:scaleX(0.9);-webkit-text-stroke:0.18px #f0f0f0;">Untitled</div>
<div class="t" style="left:44.20px;width:40px;text-align:center;transform-origin:50% 50%;top:532px;font-size:5.11px;line-height:6px;color:#f0f0f0;font-weight:normal;transform:scaleX(0.9);-webkit-text-stroke:0.18px #f0f0f0;">Stereo Out</div>
<div style="left:87.00px;top:26.80px;width:873.00px;height:13.40px;background:#3d3d3d;"></div>
<div style="left:87.00px;top:40.00px;width:103.40px;height:14.20px;background:#525252;"></div>
<div style="left:87.00px;top:54.00px;width:103.40px;height:486.00px;background:#585858;"></div>
<div style="left:91.40px;top:29.60px;width:11.00px;height:7.60px;background:#454545;border-radius:1.6px"></div>
<div style="left:106.40px;top:29.60px;width:19.20px;height:7.60px;background:#4d4d4d;border-radius:1.6px"></div>
<div style="left:131.20px;top:29.60px;width:30.20px;height:7.60px;background:#4d4d4d;border-radius:1.6px"></div>
<div style="left:167.00px;top:29.60px;width:21.20px;height:7.60px;background:#4d4d4d;border-radius:1.6px"></div>
<div style="left:193.00px;top:29.60px;width:11.00px;height:7.60px;background:#4d4d4d;border-radius:1.6px"></div>
<div style="left:204.20px;top:29.60px;width:11.40px;height:7.60px;background:#1f6fd2;border-radius:1.6px"></div>
<div style="left:219.40px;top:29.60px;width:23.20px;height:7.60px;background:#4d4d4d;border-radius:1.6px"></div>
<div style="left:245.60px;top:29.60px;width:13.20px;height:7.60px;background:#1f6fd2;border-radius:1.6px"></div>
<div class="t" style="left:109.60px;transform-origin:0 50%;top:31px;font-size:5.11px;line-height:6px;color:#f0f0f0;font-weight:bold;transform:scaleX(0.9);">Edit</div>
<div class="t" style="left:132.20px;transform-origin:0 50%;top:31px;font-size:5.11px;line-height:6px;color:#f0f0f0;font-weight:bold;transform:scaleX(0.9);">Functions</div>
<div class="t" style="left:170.80px;transform-origin:0 50%;top:31px;font-size:5.11px;line-height:6px;color:#f0f0f0;font-weight:bold;transform:scaleX(0.9);">View</div>
<svg width="960" height="60"><path d="M121.0 32.8 l1.4 1.4 l1.4 -1.4" fill="none" stroke="#a8a8a8" stroke-width="0.65"/><path d="M157.2 32.8 l1.4 1.4 l1.4 -1.4" fill="none" stroke="#a8a8a8" stroke-width="0.65"/><path d="M183.4 32.8 l1.4 1.4 l1.4 -1.4" fill="none" stroke="#a8a8a8" stroke-width="0.65"/><path d="M95.6 35.6 v-2.2 a1.4 1.4 0 0 1 1.4 -1.4 M95.6 31.4 l-1.3 1.3 M95.6 31.4 l1.3 1.3" fill="none" stroke="#6a6a6a" stroke-width="0.7"/><rect x="196.2" y="31.2" width="4.8" height="4.6" fill="#e8e8e8"/><path d="M197.8 31.2 v4.6 M199.4 31.2 v4.6 M196.2 32.7 h4.8" stroke="#4d4d4d" stroke-width="0.35"/><rect x="207.4" y="31.2" width="5" height="4.6" fill="none" stroke="#e8f0ff" stroke-width="0.7"/><rect x="208.8" y="32.4" width="2.2" height="1.6" fill="#e8f0ff"/><path d="M224.2 35.4 L228.4 31.6" stroke="#f0f0f0" stroke-width="0.7"/><circle cx="224.2" cy="35.3" r="1" fill="#f0f0f0"/><circle cx="228.4" cy="31.8" r="1" fill="#f0f0f0"/><path d="M233.8 31.6 v3.8 l5.6 -3.8 v3.8 z" fill="none" stroke="#bdbdbd" stroke-width="0.6"/><path d="M250.6 33.4 h3.2 M252.2 31 v2.4 M250.2 35.6 l1 -1.2 h2 l1 1.2" fill="none" stroke="#e8f0ff" stroke-width="0.7"/><rect x="509.4" y="29.6" width="29.4" height="7.6" rx="1.6" fill="#4d4d4d"/><path d="M512.2 31 v4.2 l1 -0.9 l0.8 1.6 l0.7 -0.3 l-0.8 -1.5 h1.3 z" fill="#f0f0f0"/><path d="M517.2 32.8 l1.4 1.4 l1.4 -1.4" fill="none" stroke="#a8a8a8" stroke-width="0.65"/><path d="M526.4 31.4 v4.2 M524.3 33.5 h4.2" stroke="#bdbdbd" stroke-width="0.7"/><path d="M533.2 32.8 l1.4 1.4 l1.4 -1.4" fill="none" stroke="#a8a8a8" stroke-width="0.65"/><rect x="737.2" y="29.6" width="60.6" height="7.6" rx="1.6" fill="#4f4f4f"/><rect x="816.4" y="29.6" width="38.8" height="7.6" rx="1.6" fill="#4f4f4f"/><path d="M793.5 32.7 l1.1 -1.2 l1.1 1.2 M793.5 34.3 l1.1 1.2 l1.1 -1.2" fill="none" stroke="#b5b5b5" stroke-width="0.55"/><path d="M850.5 32.7 l1.1 -1.2 l1.1 1.2 M850.5 34.3 l1.1 1.2 l1.1 -1.2" fill="none" stroke="#b5b5b5" stroke-width="0.55"/><rect x="859.2" y="29.6" width="10.6" height="7.6" rx="1.6" fill="#4f4f4f"/><path d="M861.8 33.4 h5.4 M863 32 v2.8 M864 31 v4.8 M865 31 v4.8 M866 32 v2.8" stroke="#c9c9c9" stroke-width="0.55"/><rect x="874.4" y="29.6" width="10.8" height="7.6" rx="1.6" fill="#585858"/><rect x="885.4" y="29.6" width="11.4" height="7.6" rx="1.6" fill="#4f4f4f"/><path d="M879.8 31 v4.8" stroke="#e0e0e0" stroke-width="1.1"/><path d="M888.6 33.4 h1.6 M891.4 33.4 h1.6" stroke="#e0e0e0" stroke-width="1.3"/><rect x="901.2" y="29.6" width="5.4" height="7.6" rx="1.6" fill="#4a4a4a"/><path d="M903.9 31.6 v3.8" stroke="#9a9a9a" stroke-width="0.8"/><path d="M910 33.4 h17" stroke="#2d2d2d" stroke-width="1.2" stroke-linecap="round"/><circle cx="914.4" cy="33.4" r="1.7" fill="#d9d9d9"/><path d="M930.6 33.4 h1.0 M932.4 33.4 h1.0" stroke="#9a9a9a" stroke-width="0.9"/><path d="M938 33.4 h17" stroke="#2d2d2d" stroke-width="1.2" stroke-linecap="round"/><circle cx="938.6" cy="33.4" r="1.7" fill="#d9d9d9"/><rect x="92.6" y="42.6" width="11.4" height="7.6" rx="1.6" fill="#616161"/><path d="M98.3 44.6 v3.6 M96.5 46.4 h3.6" stroke="#f0f0f0" stroke-width="0.7"/><rect x="106.4" y="42.6" width="11.4" height="7.6" rx="1.6" fill="#616161"/><rect x="109.6" y="44.4" width="4" height="3" rx="0.6" fill="none" stroke="#e8e8e8" stroke-width="0.6"/><rect x="111" y="45.4" width="4" height="3" rx="0.6" fill="#616161" stroke="#e8e8e8" stroke-width="0.6"/><rect x="122.8" y="42.6" width="11.4" height="7.6" rx="1.6" fill="#616161"/><rect x="175.0" y="42.6" width="11.4" height="7.6" rx="1.6" fill="#616161"/><rect x="177.6" y="44.4" width="6.2" height="4" rx="0.8" fill="none" stroke="#e8e8e8" stroke-width="0.7"/><path d="M179.4 46.4 h2.6" stroke="#e8e8e8" stroke-width="0.6"/></svg>
<div class="t" style="left:123.50px;width:10px;text-align:center;transform-origin:50% 50%;top:44px;font-size:5.78px;line-height:6px;color:#f4f4f4;font-weight:bold;transform:scaleX(0.9);-webkit-text-stroke:0.12px #f4f4f4;">S</div>
<div class="t" style="left:721.90px;transform-origin:0 50%;top:31px;font-size:5.56px;line-height:6px;color:#a4a4a4;font-weight:normal;transform:scaleX(0.9);">Snap:</div>
<div class="t" style="left:740.60px;transform-origin:0 50%;top:31px;font-size:5.33px;line-height:6px;color:#f0f0f0;font-weight:bold;transform:scaleX(0.9);">Smart</div>
<div class="t" style="left:801.40px;transform-origin:0 50%;top:31px;font-size:5.56px;line-height:6px;color:#a4a4a4;font-weight:normal;transform:scaleX(0.9);">Drag:</div>
<div class="t" style="left:819.80px;transform-origin:0 50%;top:31px;font-size:5.33px;line-height:6px;color:#f0f0f0;font-weight:bold;transform:scaleX(0.9);">No Overlap</div>
<div style="left:98.60px;top:111.46px;width:91.80px;height:76.48px;background:#606060;"></div>
<div style="left:98.60px;top:149.70px;width:91.80px;height:19.12px;background:#727272;"></div>
<svg width="200" height="540"><rect x="87" y="54.10" width="7.3" height="19.22" fill="#1fa84c"/><path d="M94.3 73.22 H190.4" stroke="#4a4a4a" stroke-width="0.5"/><rect x="106.0" y="59.76" width="11.2" height="7.8" rx="0.8" fill="#1f3f28"/><path d="M109.88 61.56 L114.02 60.84 L114.02 62.01 L109.88 62.73z" fill="#48e264"/><path d="M110.15 61.83 V65.34 M113.75 61.11 V64.62" stroke="#48e264" stroke-width="0.56"/><ellipse cx="109.25" cy="65.43" rx="1.22" ry="0.90" fill="#48e264"/><ellipse cx="112.85" cy="64.71" rx="1.22" ry="0.90" fill="#48e264"/><rect x="123.3" y="64.70" width="7.3" height="5.6" rx="1" fill="#616161"/><rect x="131.1" y="64.70" width="7.3" height="5.6" rx="1" fill="#616161"/><rect x="141.0" y="64.10" width="32.8" height="6.6" rx="3.3" fill="#383838"/><rect x="143.6" y="65.90" width="21.40" height="1.2" fill="#3ed05a"/><rect x="165.00" y="65.90" width="5.92" height="1.2" fill="#e0b624"/><rect x="143.6" y="67.70" width="21.40" height="1.2" fill="#3ed05a"/><rect x="165.00" y="67.70" width="5.92" height="1.2" fill="#e0b624"/><circle cx="163.98" cy="67.40" r="2.9" fill="#a2a2a2" opacity="0.93"/><circle cx="181.2" cy="67.40" r="4.2" fill="#333"/><circle cx="181.2" cy="67.40" r="3.3" fill="#8c8c8c"/><path d="M181.2 64.10 v1.2" stroke="#2a2a2a" stroke-width="0.5"/><rect x="87" y="73.22" width="7.3" height="19.22" fill="#1fa86c"/><path d="M94.3 92.34 H190.4" stroke="#4a4a4a" stroke-width="0.5"/><rect x="106.0" y="78.88" width="11.2" height="7.8" rx="0.8" fill="#1f3f28"/><path d="M109.88 80.68 L114.02 79.96 L114.02 81.13 L109.88 81.85z" fill="#48e264"/><path d="M110.15 80.95 V84.46 M113.75 80.23 V83.74" stroke="#48e264" stroke-width="0.56"/><ellipse cx="109.25" cy="84.55" rx="1.22" ry="0.90" fill="#48e264"/><ellipse cx="112.85" cy="83.83" rx="1.22" ry="0.90" fill="#48e264"/><rect x="123.3" y="83.82" width="7.3" height="5.6" rx="1" fill="#616161"/><rect x="131.1" y="83.82" width="7.3" height="5.6" rx="1" fill="#616161"/><rect x="141.0" y="83.22" width="32.8" height="6.6" rx="3.3" fill="#383838"/><circle cx="157.68" cy="86.52" r="2.9" fill="#a2a2a2" opacity="0.93"/><circle cx="181.2" cy="86.52" r="4.2" fill="#333"/><circle cx="181.2" cy="86.52" r="3.3" fill="#8c8c8c"/><path d="M181.2 83.22 v1.2" stroke="#2a2a2a" stroke-width="0.5"/><rect x="87" y="92.34" width="7.3" height="19.22" fill="#23a843"/><path d="M94.3 111.46 H190.4" stroke="#4a4a4a" stroke-width="0.5"/><rect x="97.4" y="95.90" width="21.2" height="12" rx="1.6" fill="#666666"/><rect x="106.0" y="97.70" width="11.4" height="8.4" rx="0.8" fill="#4a4a1e"/><circle cx="111.7" cy="101.90" r="2.4" fill="#f2e21c"/><path d="M111.7 101.90 v-1.6" stroke="#222" stroke-width="0.5"/><path d="M99.39999999999999 101.30000000000001 l1.2 1.2 l1.2 -1.2" fill="none" stroke="#d0d0d0" stroke-width="0.6"/><rect x="123.3" y="102.94" width="7.3" height="5.6" rx="1" fill="#616161"/><rect x="131.1" y="102.94" width="7.3" height="5.6" rx="1" fill="#616161"/><rect x="141.0" y="102.34" width="32.8" height="6.6" rx="3.3" fill="#383838"/><rect x="143.6" y="104.14" width="21.40" height="1.2" fill="#3ed05a"/><rect x="165.00" y="104.14" width="4.54" height="1.2" fill="#e0b624"/><rect x="143.6" y="105.94" width="21.40" height="1.2" fill="#3ed05a"/><rect x="165.00" y="105.94" width="4.54" height="1.2" fill="#e0b624"/><circle cx="160.76" cy="105.64" r="2.9" fill="#a2a2a2" opacity="0.93"/><circle cx="181.2" cy="105.64" r="4.2" fill="#333"/><circle cx="181.2" cy="105.64" r="3.3" fill="#8c8c8c"/><path d="M181.2 102.34 v1.2" stroke="#2a2a2a" stroke-width="0.5"/><rect x="87" y="111.46" width="7.3" height="19.22" fill="#7f8c1f"/><path d="M94.3 130.58 H190.4" stroke="#4a4a4a" stroke-width="0.5"/><rect x="106.0" y="117.12" width="11.2" height="7.8" rx="0.8" fill="#1f3f28"/><path d="M109.88 118.92 L114.02 118.20 L114.02 119.37 L109.88 120.09z" fill="#48e264"/><path d="M110.15 119.19 V122.70 M113.75 118.47 V121.98" stroke="#48e264" stroke-width="0.56"/><ellipse cx="109.25" cy="122.79" rx="1.22" ry="0.90" fill="#48e264"/><ellipse cx="112.85" cy="122.07" rx="1.22" ry="0.90" fill="#48e264"/><rect x="123.3" y="122.06" width="7.3" height="5.6" rx="1" fill="#616161"/><rect x="131.1" y="122.06" width="7.3" height="5.6" rx="1" fill="#616161"/><rect x="141.0" y="121.46" width="32.8" height="6.6" rx="3.3" fill="#383838"/><rect x="143.6" y="123.26" width="21.40" height="1.2" fill="#3ed05a"/><rect x="165.00" y="123.26" width="5.92" height="1.2" fill="#e0b624"/><rect x="143.6" y="125.06" width="21.40" height="1.2" fill="#3ed05a"/><rect x="165.00" y="125.06" width="5.92" height="1.2" fill="#e0b624"/><circle cx="163.98" cy="124.76" r="2.9" fill="#a2a2a2" opacity="0.93"/><circle cx="181.2" cy="124.76" r="4.2" fill="#333"/><circle cx="181.2" cy="124.76" r="3.3" fill="#8c8c8c"/><path d="M181.2 121.46 v1.2" stroke="#2a2a2a" stroke-width="0.5"/><rect x="87" y="130.58" width="7.3" height="19.22" fill="#1c98a2"/><path d="M94.3 149.70 H190.4" stroke="#4a4a4a" stroke-width="0.5"/><rect x="106.0" y="136.24" width="11.2" height="7.8" rx="0.8" fill="#1f3f28"/><path d="M109.88 138.04 L114.02 137.32 L114.02 138.49 L109.88 139.21z" fill="#48e264"/><path d="M110.15 138.31 V141.82 M113.75 137.59 V141.10" stroke="#48e264" stroke-width="0.56"/><ellipse cx="109.25" cy="141.91" rx="1.22" ry="0.90" fill="#48e264"/><ellipse cx="112.85" cy="141.19" rx="1.22" ry="0.90" fill="#48e264"/><rect x="123.3" y="141.18" width="7.3" height="5.6" rx="1" fill="#616161"/><rect x="131.1" y="141.18" width="7.3" height="5.6" rx="1" fill="#616161"/><rect x="141.0" y="140.58" width="32.8" height="6.6" rx="3.3" fill="#383838"/><rect x="143.6" y="142.38" width="21.40" height="1.2" fill="#3ed05a"/><rect x="165.00" y="142.38" width="3.99" height="1.2" fill="#e0b624"/><rect x="143.6" y="144.18" width="21.40" height="1.2" fill="#3ed05a"/><rect x="165.00" y="144.18" width="3.99" height="1.2" fill="#e0b624"/><circle cx="155.72" cy="143.88" r="2.9" fill="#a2a2a2" opacity="0.93"/><circle cx="181.2" cy="143.88" r="4.2" fill="#333"/><circle cx="181.2" cy="143.88" r="3.3" fill="#8c8c8c"/><path d="M181.2 140.58 v1.2" stroke="#2a2a2a" stroke-width="0.5"/><rect x="87" y="149.70" width="7.3" height="19.22" fill="#1d9cc0"/><path d="M94.3 168.82 H190.4" stroke="#4a4a4a" stroke-width="0.5"/><rect x="106.0" y="155.36" width="11.2" height="7.8" rx="0.8" fill="#1f3f28"/><path d="M109.88 157.16 L114.02 156.44 L114.02 157.61 L109.88 158.33z" fill="#48e264"/><path d="M110.15 157.43 V160.94 M113.75 156.71 V160.22" stroke="#48e264" stroke-width="0.56"/><ellipse cx="109.25" cy="161.03" rx="1.22" ry="0.90" fill="#48e264"/><ellipse cx="112.85" cy="160.31" rx="1.22" ry="0.90" fill="#48e264"/><rect x="123.3" y="160.30" width="7.3" height="5.6" rx="1" fill="#616161"/><rect x="131.1" y="160.30" width="7.3" height="5.6" rx="1" fill="#616161"/><rect x="141.0" y="159.70" width="32.8" height="6.6" rx="3.3" fill="#383838"/><rect x="143.6" y="161.50" width="21.40" height="1.2" fill="#3ed05a"/><rect x="165.00" y="161.50" width="5.10" height="1.2" fill="#e0b624"/><rect x="143.6" y="163.30" width="21.40" height="1.2" fill="#3ed05a"/><rect x="165.00" y="163.30" width="5.10" height="1.2" fill="#e0b624"/><circle cx="167.76" cy="163.00" r="2.9" fill="#a2a2a2" opacity="0.93"/><circle cx="181.2" cy="163.00" r="4.2" fill="#333"/><circle cx="181.2" cy="163.00" r="3.3" fill="#8c8c8c"/><path d="M181.2 159.70 v1.2" stroke="#2a2a2a" stroke-width="0.5"/><rect x="87" y="168.82" width="7.3" height="19.22" fill="#1aaab2"/><path d="M94.3 187.94 H190.4" stroke="#4a4a4a" stroke-width="0.5"/><rect x="106.0" y="174.48" width="11.2" height="7.8" rx="0.8" fill="#1f3f28"/><path d="M109.88 176.28 L114.02 175.56 L114.02 176.73 L109.88 177.45z" fill="#48e264"/><path d="M110.15 176.55 V180.06 M113.75 175.83 V179.34" stroke="#48e264" stroke-width="0.56"/><ellipse cx="109.25" cy="180.15" rx="1.22" ry="0.90" fill="#48e264"/><ellipse cx="112.85" cy="179.43" rx="1.22" ry="0.90" fill="#48e264"/><rect x="123.3" y="179.42" width="7.3" height="5.6" rx="1" fill="#616161"/><rect x="131.1" y="179.42" width="7.3" height="5.6" rx="1" fill="#616161"/><rect x="141.0" y="178.82" width="32.8" height="6.6" rx="3.3" fill="#383838"/><rect x="143.6" y="180.62" width="21.40" height="1.2" fill="#3ed05a"/><rect x="165.00" y="180.62" width="0.13" height="1.2" fill="#e0b624"/><rect x="143.6" y="182.42" width="21.40" height="1.2" fill="#3ed05a"/><rect x="165.00" y="182.42" width="0.13" height="1.2" fill="#e0b624"/><circle cx="160.20" cy="182.12" r="2.9" fill="#a2a2a2" opacity="0.93"/><circle cx="181.2" cy="182.12" r="4.2" fill="#333"/><circle cx="181.2" cy="182.12" r="3.3" fill="#8c8c8c"/><path d="M181.2 178.82 v1.2" stroke="#2a2a2a" stroke-width="0.5"/><rect x="87" y="187.94" width="7.3" height="19.22" fill="#a1442a"/><path d="M94.3 207.06 H190.4" stroke="#4a4a4a" stroke-width="0.5"/><path d="M107.4 194.30 l8.2 1.2 v4.6 l-2.2 0.6 l-6 -1.6z" fill="#2c2c2c"/><path d="M107.6 196.30 l6 1.4 v2 l-6 -1.4z" fill="#d8d8d8"/><rect x="123.3" y="198.54" width="7.3" height="5.6" rx="1" fill="#616161"/><rect x="131.1" y="198.54" width="7.3" height="5.6" rx="1" fill="#616161"/><rect x="141.0" y="197.94" width="32.8" height="6.6" rx="3.3" fill="#383838"/><circle cx="160.76" cy="201.24" r="2.9" fill="#a2a2a2" opacity="0.93"/><circle cx="181.2" cy="201.24" r="4.2" fill="#333"/><circle cx="181.2" cy="201.24" r="3.3" fill="#8c8c8c"/><path d="M181.2 197.94 v1.2" stroke="#2a2a2a" stroke-width="0.5"/><rect x="87" y="207.06" width="7.3" height="19.22" fill="#1c9a4c"/><path d="M94.3 226.18 H190.4" stroke="#4a4a4a" stroke-width="0.5"/><rect x="106.0" y="212.72" width="11.2" height="7.8" rx="0.8" fill="#1f3f28"/><path d="M109.88 214.52 L114.02 213.80 L114.02 214.97 L109.88 215.69z" fill="#48e264"/><path d="M110.15 214.79 V218.30 M113.75 214.07 V217.58" stroke="#48e264" stroke-width="0.56"/><ellipse cx="109.25" cy="218.39" rx="1.22" ry="0.90" fill="#48e264"/><ellipse cx="112.85" cy="217.67" rx="1.22" ry="0.90" fill="#48e264"/><rect x="123.3" y="217.66" width="7.3" height="5.6" rx="1" fill="#616161"/><rect x="131.1" y="217.66" width="7.3" height="5.6" rx="1" fill="#616161"/><rect x="141.0" y="217.06" width="32.8" height="6.6" rx="3.3" fill="#383838"/><rect x="143.6" y="218.86" width="20.42" height="1.2" fill="#3ed05a"/><rect x="143.6" y="220.66" width="20.42" height="1.2" fill="#3ed05a"/><circle cx="163.98" cy="220.36" r="2.9" fill="#a2a2a2" opacity="0.93"/><circle cx="181.2" cy="220.36" r="4.2" fill="#333"/><circle cx="181.2" cy="220.36" r="3.3" fill="#8c8c8c"/><path d="M181.2 217.06 v1.2" stroke="#2a2a2a" stroke-width="0.5"/><rect x="87" y="226.18" width="7.3" height="19.22" fill="#a1442a"/><path d="M94.3 245.30 H190.4" stroke="#4a4a4a" stroke-width="0.5"/><path d="M108.0 235.34 l4 -2.8 l2.4 0.6 l0.4 4 l-3.2 1 z" fill="#1c1c1c"/><path d="M111.2 231.74 l2.4 2 l-1.4 0.6z" fill="#2a2a2a"/><path d="M108.4 236.74 v2.6 M111.6 237.54 v2.4 M114.6 236.74 v2.2" stroke="#1c1c1c" stroke-width="0.5"/><path d="M107.8 235.94 l3.6 1" stroke="#ddd" stroke-width="0.6"/><rect x="123.3" y="236.78" width="7.3" height="5.6" rx="1" fill="#616161"/><rect x="131.1" y="236.78" width="7.3" height="5.6" rx="1" fill="#616161"/><rect x="141.0" y="236.18" width="32.8" height="6.6" rx="3.3" fill="#383838"/><circle cx="163.00" cy="239.48" r="2.9" fill="#a2a2a2" opacity="0.93"/><circle cx="181.2" cy="239.48" r="4.2" fill="#333"/><circle cx="181.2" cy="239.48" r="3.3" fill="#8c8c8c"/><path d="M181.2 236.18 v1.2" stroke="#2a2a2a" stroke-width="0.5"/><rect x="87" y="245.30" width="7.3" height="19.22" fill="#4b45cc"/><path d="M94.3 264.42 H190.4" stroke="#4a4a4a" stroke-width="0.5"/><rect x="106.0" y="250.66" width="11.4" height="8.4" rx="0.8" fill="#243a55"/><path d="M107.60 254.46 v0.80" stroke="#3d97e8" stroke-width="0.8"/><path d="M108.62 253.96 v1.80" stroke="#3d97e8" stroke-width="0.8"/><path d="M109.64 253.26 v3.20" stroke="#3d97e8" stroke-width="0.8"/><path d="M110.66 252.46 v4.80" stroke="#3d97e8" stroke-width="0.8"/><path d="M111.68 253.06 v3.60" stroke="#3d97e8" stroke-width="0.8"/><path d="M112.70 252.26 v5.20" stroke="#3d97e8" stroke-width="0.8"/><path d="M113.72 253.16 v3.40" stroke="#3d97e8" stroke-width="0.8"/><path d="M114.74 253.86 v2.00" stroke="#3d97e8" stroke-width="0.8"/><path d="M115.76 254.36 v1.00" stroke="#3d97e8" stroke-width="0.8"/><rect x="123.3" y="255.90" width="7.3" height="5.6" rx="1" fill="#616161"/><rect x="131.1" y="255.90" width="7.3" height="5.6" rx="1" fill="#616161"/><rect x="141.0" y="255.30" width="32.8" height="6.6" rx="3.3" fill="#383838"/><circle cx="163.98" cy="258.60" r="2.9" fill="#a2a2a2" opacity="0.93"/><circle cx="181.2" cy="258.60" r="4.2" fill="#333"/><circle cx="181.2" cy="258.60" r="3.3" fill="#8c8c8c"/><path d="M181.2 255.30 v1.2" stroke="#2a2a2a" stroke-width="0.5"/><rect x="87" y="264.42" width="7.3" height="19.22" fill="#5a3ccb"/><path d="M94.3 283.54 H190.4" stroke="#4a4a4a" stroke-width="0.5"/><rect x="106.0" y="269.78" width="11.4" height="8.4" rx="0.8" fill="#243a55"/><path d="M107.60 273.58 v0.80" stroke="#3d97e8" stroke-width="0.8"/><path d="M108.62 273.08 v1.80" stroke="#3d97e8" stroke-width="0.8"/><path d="M109.64 272.38 v3.20" stroke="#3d97e8" stroke-width="0.8"/><path d="M110.66 271.58 v4.80" stroke="#3d97e8" stroke-width="0.8"/><path d="M111.68 272.18 v3.60" stroke="#3d97e8" stroke-width="0.8"/><path d="M112.70 271.38 v5.20" stroke="#3d97e8" stroke-width="0.8"/><path d="M113.72 272.28 v3.40" stroke="#3d97e8" stroke-width="0.8"/><path d="M114.74 272.98 v2.00" stroke="#3d97e8" stroke-width="0.8"/><path d="M115.76 273.48 v1.00" stroke="#3d97e8" stroke-width="0.8"/><rect x="123.3" y="275.02" width="7.3" height="5.6" rx="1" fill="#616161"/><rect x="131.1" y="275.02" width="7.3" height="5.6" rx="1" fill="#616161"/><rect x="141.0" y="274.42" width="32.8" height="6.6" rx="3.3" fill="#383838"/><circle cx="158.80" cy="277.72" r="2.9" fill="#a2a2a2" opacity="0.93"/><circle cx="181.2" cy="277.72" r="4.2" fill="#333"/><circle cx="181.2" cy="277.72" r="3.3" fill="#8c8c8c"/><path d="M181.2 274.42 v1.2" stroke="#2a2a2a" stroke-width="0.5"/><rect x="87" y="283.54" width="7.3" height="19.22" fill="#6a37c6"/><path d="M94.3 302.66 H190.4" stroke="#4a4a4a" stroke-width="0.5"/><rect x="106.0" y="288.90" width="11.4" height="8.4" rx="0.8" fill="#243a55"/><path d="M107.60 292.70 v0.80" stroke="#3d97e8" stroke-width="0.8"/><path d="M108.62 292.20 v1.80" stroke="#3d97e8" stroke-width="0.8"/><path d="M109.64 291.50 v3.20" stroke="#3d97e8" stroke-width="0.8"/><path d="M110.66 290.70 v4.80" stroke="#3d97e8" stroke-width="0.8"/><path d="M111.68 291.30 v3.60" stroke="#3d97e8" stroke-width="0.8"/><path d="M112.70 290.50 v5.20" stroke="#3d97e8" stroke-width="0.8"/><path d="M113.72 291.40 v3.40" stroke="#3d97e8" stroke-width="0.8"/><path d="M114.74 292.10 v2.00" stroke="#3d97e8" stroke-width="0.8"/><path d="M115.76 292.60 v1.00" stroke="#3d97e8" stroke-width="0.8"/><rect x="123.3" y="294.14" width="7.3" height="5.6" rx="1" fill="#616161"/><rect x="131.1" y="294.14" width="7.3" height="5.6" rx="1" fill="#616161"/><rect x="141.0" y="293.54" width="32.8" height="6.6" rx="3.3" fill="#383838"/><circle cx="159.92" cy="296.84" r="2.9" fill="#a2a2a2" opacity="0.93"/><circle cx="181.2" cy="296.84" r="4.2" fill="#333"/><circle cx="181.2" cy="296.84" r="3.3" fill="#8c8c8c"/><path d="M181.2 293.54 v1.2" stroke="#2a2a2a" stroke-width="0.5"/><rect x="87" y="302.66" width="7.3" height="19.22" fill="#5b40c4"/><path d="M94.3 321.78 H190.4" stroke="#4a4a4a" stroke-width="0.5"/><rect x="106.0" y="308.32" width="11.2" height="7.8" rx="0.8" fill="#1f3f28"/><path d="M109.88 310.12 L114.02 309.40 L114.02 310.57 L109.88 311.29z" fill="#48e264"/><path d="M110.15 310.39 V313.90 M113.75 309.67 V313.18" stroke="#48e264" stroke-width="0.56"/><ellipse cx="109.25" cy="313.99" rx="1.22" ry="0.90" fill="#48e264"/><ellipse cx="112.85" cy="313.27" rx="1.22" ry="0.90" fill="#48e264"/><rect x="123.3" y="313.26" width="7.3" height="5.6" rx="1" fill="#616161"/><rect x="131.1" y="313.26" width="7.3" height="5.6" rx="1" fill="#616161"/><rect x="141.0" y="312.66" width="32.8" height="6.6" rx="3.3" fill="#383838"/><circle cx="163.98" cy="315.96" r="2.9" fill="#a2a2a2" opacity="0.93"/><circle cx="181.2" cy="315.96" r="4.2" fill="#333"/><circle cx="181.2" cy="315.96" r="3.3" fill="#8c8c8c"/><path d="M181.2 312.66 v1.2" stroke="#2a2a2a" stroke-width="0.5"/><rect x="87" y="321.78" width="7.3" height="19.22" fill="#9a22b4"/><path d="M94.3 340.90 H190.4" stroke="#4a4a4a" stroke-width="0.5"/><rect x="106.0" y="327.14" width="11.4" height="8.4" rx="0.8" fill="#243a55"/><path d="M107.60 330.94 v0.80" stroke="#3d97e8" stroke-width="0.8"/><path d="M108.62 330.44 v1.80" stroke="#3d97e8" stroke-width="0.8"/><path d="M109.64 329.74 v3.20" stroke="#3d97e8" stroke-width="0.8"/><path d="M110.66 328.94 v4.80" stroke="#3d97e8" stroke-width="0.8"/><path d="M111.68 329.54 v3.60" stroke="#3d97e8" stroke-width="0.8"/><path d="M112.70 328.74 v5.20" stroke="#3d97e8" stroke-width="0.8"/><path d="M113.72 329.64 v3.40" stroke="#3d97e8" stroke-width="0.8"/><path d="M114.74 330.34 v2.00" stroke="#3d97e8" stroke-width="0.8"/><path d="M115.76 330.84 v1.00" stroke="#3d97e8" stroke-width="0.8"/><rect x="123.3" y="332.38" width="7.3" height="5.6" rx="1" fill="#616161"/><rect x="131.1" y="332.38" width="7.3" height="5.6" rx="1" fill="#616161"/><rect x="141.0" y="331.78" width="32.8" height="6.6" rx="3.3" fill="#383838"/><circle cx="159.92" cy="335.08" r="2.9" fill="#a2a2a2" opacity="0.93"/><circle cx="181.2" cy="335.08" r="4.2" fill="#333"/><circle cx="181.2" cy="335.08" r="3.3" fill="#8c8c8c"/><path d="M181.2 331.78 v1.2" stroke="#2a2a2a" stroke-width="0.5"/><rect x="87" y="340.90" width="7.3" height="19.22" fill="#1b8c86"/><path d="M94.3 360.02 H190.4" stroke="#4a4a4a" stroke-width="0.5"/><rect x="106.0" y="346.56" width="11.2" height="7.8" rx="0.8" fill="#1f3f28"/><path d="M109.88 348.36 L114.02 347.64 L114.02 348.81 L109.88 349.53z" fill="#48e264"/><path d="M110.15 348.63 V352.14 M113.75 347.91 V351.42" stroke="#48e264" stroke-width="0.56"/><ellipse cx="109.25" cy="352.23" rx="1.22" ry="0.90" fill="#48e264"/><ellipse cx="112.85" cy="351.51" rx="1.22" ry="0.90" fill="#48e264"/><rect x="123.3" y="351.50" width="7.3" height="5.6" rx="1" fill="#616161"/><rect x="131.1" y="351.50" width="7.3" height="5.6" rx="1" fill="#616161"/><rect x="141.0" y="350.90" width="32.8" height="6.6" rx="3.3" fill="#383838"/><circle cx="163.98" cy="354.20" r="2.9" fill="#a2a2a2" opacity="0.93"/><circle cx="181.2" cy="354.20" r="4.2" fill="#333"/><circle cx="181.2" cy="354.20" r="3.3" fill="#8c8c8c"/><path d="M181.2 350.90 v1.2" stroke="#2a2a2a" stroke-width="0.5"/><rect x="87" y="360.02" width="7.3" height="19.22" fill="#1bb2ab"/><path d="M94.3 379.14 H190.4" stroke="#4a4a4a" stroke-width="0.5"/><rect x="97.4" y="363.58" width="21.2" height="12" rx="1.6" fill="#666666"/><rect x="106.0" y="364.78" width="11.4" height="9.6" rx="0.6" fill="#1a8f8a"/><rect x="106.8" y="365.78" width="3.8" height="1.6" fill="#22c4bb"/><rect x="106.8" y="368.18" width="3.8" height="1.8" fill="#22c4bb"/><rect x="112.0" y="365.78" width="4.6" height="4.4" fill="#22c4bb"/><rect x="106.6" y="371.78" width="10.2" height="2.2" fill="#22c4bb"/><path d="M100.2 368.28 l1.3 1.3 l-1.3 1.3" fill="none" stroke="#d0d0d0" stroke-width="0.6"/><rect x="123.3" y="370.62" width="7.3" height="5.6" rx="1" fill="#616161"/><rect x="131.1" y="370.62" width="7.3" height="5.6" rx="1" fill="#616161"/><rect x="141.0" y="370.02" width="32.8" height="6.6" rx="3.3" fill="#383838"/><rect x="143.6" y="371.82" width="21.40" height="1.2" fill="#3ed05a"/><rect x="165.00" y="371.82" width="1.23" height="1.2" fill="#e0b624"/><rect x="143.6" y="373.62" width="21.40" height="1.2" fill="#3ed05a"/><rect x="165.00" y="373.62" width="1.23" height="1.2" fill="#e0b624"/><circle cx="166.08" cy="373.32" r="2.9" fill="#a2a2a2" opacity="0.93"/><circle cx="181.2" cy="373.32" r="4.2" fill="#333"/><circle cx="181.2" cy="373.32" r="3.3" fill="#8c8c8c"/><path d="M181.2 370.02 v1.2" stroke="#2a2a2a" stroke-width="0.5"/></svg>
<div class="t" style="left:85.65px;width:10px;text-align:center;transform-origin:50% 50%;top:61px;font-size:5.44px;line-height:6px;color:#ffffff;font-weight:normal;transform:scaleX(0.9);-webkit-text-stroke:0.19px #ffffff;letter-spacing:-0.25px">1</div>
<div class="t" style="left:123.10px;transform-origin:0 50%;top:57px;font-size:5.56px;line-height:6px;color:#f4f4f4;font-weight:bold;transform:scaleX(0.9);letter-spacing:-0.1px">Untitled<svg style="position:static;display:inline-block;vertical-align:middle;margin-left:1.6px;margin-top:-0.6px" width="3" height="5" viewBox="0 0 3 5"><path d="M0.4 1.9 l1.1 -1.2 l1.1 1.2 M0.4 3.1 l1.1 1.2 l1.1 -1.2" fill="none" stroke="#a4a4a4" stroke-width="0.65"/></svg></div>
<div class="t" style="right:774.60px;transform-origin:100% 50%;top:57px;font-size:5.56px;line-height:6px;color:#202020;font-weight:bold;transform:scaleX(0.9);letter-spacing:-0.1px">Inst 1</div>
<div class="t" style="left:122.95px;width:8px;text-align:center;transform-origin:50% 50%;top:66px;font-size:5.0px;line-height:6px;color:#f4f4f4;font-weight:bold;transform:scaleX(0.9);">M</div>
<div class="t" style="left:130.75px;width:8px;text-align:center;transform-origin:50% 50%;top:66px;font-size:5.0px;line-height:6px;color:#f4f4f4;font-weight:bold;transform:scaleX(0.9);">S</div>
<div class="t" style="left:85.65px;width:10px;text-align:center;transform-origin:50% 50%;top:81px;font-size:5.44px;line-height:6px;color:#ffffff;font-weight:normal;transform:scaleX(0.9);-webkit-text-stroke:0.19px #ffffff;letter-spacing:-0.25px">2</div>
<div class="t" style="left:123.10px;transform-origin:0 50%;top:76px;font-size:5.56px;line-height:6px;color:#f4f4f4;font-weight:bold;transform:scaleX(0.9);letter-spacing:-0.1px">Untitled<svg style="position:static;display:inline-block;vertical-align:middle;margin-left:1.6px;margin-top:-0.6px" width="3" height="5" viewBox="0 0 3 5"><path d="M0.4 1.9 l1.1 -1.2 l1.1 1.2 M0.4 3.1 l1.1 1.2 l1.1 -1.2" fill="none" stroke="#a4a4a4" stroke-width="0.65"/></svg></div>
<div class="t" style="right:774.60px;transform-origin:100% 50%;top:76px;font-size:5.56px;line-height:6px;color:#202020;font-weight:bold;transform:scaleX(0.9);letter-spacing:-0.1px">Inst 2</div>
<div class="t" style="left:122.95px;width:8px;text-align:center;transform-origin:50% 50%;top:85px;font-size:5.0px;line-height:6px;color:#f4f4f4;font-weight:bold;transform:scaleX(0.9);">M</div>
<div class="t" style="left:130.75px;width:8px;text-align:center;transform-origin:50% 50%;top:85px;font-size:5.0px;line-height:6px;color:#f4f4f4;font-weight:bold;transform:scaleX(0.9);">S</div>
<div class="t" style="left:85.65px;width:10px;text-align:center;transform-origin:50% 50%;top:100px;font-size:5.44px;line-height:6px;color:#ffffff;font-weight:normal;transform:scaleX(0.9);-webkit-text-stroke:0.19px #ffffff;letter-spacing:-0.25px">3</div>
<div class="t" style="left:123.10px;transform-origin:0 50%;top:95px;font-size:5.56px;line-height:6px;color:#f4f4f4;font-weight:bold;transform:scaleX(0.9);letter-spacing:-0.1px">kick<svg style="position:static;display:inline-block;vertical-align:middle;margin-left:1.6px;margin-top:-0.6px" width="3" height="5" viewBox="0 0 3 5"><path d="M0.4 1.9 l1.1 -1.2 l1.1 1.2 M0.4 3.1 l1.1 1.2 l1.1 -1.2" fill="none" stroke="#a4a4a4" stroke-width="0.65"/></svg></div>
<div class="t" style="right:774.60px;transform-origin:100% 50%;top:95px;font-size:5.56px;line-height:6px;color:#202020;font-weight:bold;transform:scaleX(0.9);letter-spacing:-0.1px">Aux 1</div>
<div class="t" style="left:122.95px;width:8px;text-align:center;transform-origin:50% 50%;top:104px;font-size:5.0px;line-height:6px;color:#f4f4f4;font-weight:bold;transform:scaleX(0.9);">M</div>
<div class="t" style="left:130.75px;width:8px;text-align:center;transform-origin:50% 50%;top:104px;font-size:5.0px;line-height:6px;color:#f4f4f4;font-weight:bold;transform:scaleX(0.9);">S</div>
<div class="t" style="left:85.65px;width:10px;text-align:center;transform-origin:50% 50%;top:119px;font-size:5.44px;line-height:6px;color:#ffffff;font-weight:normal;transform:scaleX(0.9);-webkit-text-stroke:0.19px #ffffff;letter-spacing:-0.25px">4</div>
<div class="t" style="left:123.10px;transform-origin:0 50%;top:115px;font-size:5.56px;line-height:6px;color:#f4f4f4;font-weight:bold;transform:scaleX(0.9);letter-spacing:-0.1px">Untitled<svg style="position:static;display:inline-block;vertical-align:middle;margin-left:1.6px;margin-top:-0.6px" width="3" height="5" viewBox="0 0 3 5"><path d="M0.4 1.9 l1.1 -1.2 l1.1 1.2 M0.4 3.1 l1.1 1.2 l1.1 -1.2" fill="none" stroke="#a4a4a4" stroke-width="0.65"/></svg></div>
<div class="t" style="right:774.60px;transform-origin:100% 50%;top:115px;font-size:5.56px;line-height:6px;color:#202020;font-weight:bold;transform:scaleX(0.9);letter-spacing:-0.1px">Inst 3</div>
<div class="t" style="left:122.95px;width:8px;text-align:center;transform-origin:50% 50%;top:124px;font-size:5.0px;line-height:6px;color:#f4f4f4;font-weight:bold;transform:scaleX(0.9);">M</div>
<div class="t" style="left:130.75px;width:8px;text-align:center;transform-origin:50% 50%;top:124px;font-size:5.0px;line-height:6px;color:#f4f4f4;font-weight:bold;transform:scaleX(0.9);">S</div>
<div class="t" style="left:85.65px;width:10px;text-align:center;transform-origin:50% 50%;top:138px;font-size:5.44px;line-height:6px;color:#ffffff;font-weight:normal;transform:scaleX(0.9);-webkit-text-stroke:0.19px #ffffff;letter-spacing:-0.25px">5</div>
<div class="t" style="left:123.10px;transform-origin:0 50%;top:134px;font-size:5.56px;line-height:6px;color:#f4f4f4;font-weight:bold;transform:scaleX(0.9);letter-spacing:-0.1px">xtra_raw<svg style="position:static;display:inline-block;vertical-align:middle;margin-left:1.6px;margin-top:-0.6px" width="3" height="5" viewBox="0 0 3 5"><path d="M0.4 1.9 l1.1 -1.2 l1.1 1.2 M0.4 3.1 l1.1 1.2 l1.1 -1.2" fill="none" stroke="#a4a4a4" stroke-width="0.65"/></svg></div>
<div class="t" style="right:774.60px;transform-origin:100% 50%;top:134px;font-size:5.56px;line-height:6px;color:#202020;font-weight:bold;transform:scaleX(0.9);letter-spacing:-0.1px">Mokugyo</div>
<div class="t" style="left:122.95px;width:8px;text-align:center;transform-origin:50% 50%;top:143px;font-size:5.0px;line-height:6px;color:#f4f4f4;font-weight:bold;transform:scaleX(0.9);">M</div>
<div class="t" style="left:130.75px;width:8px;text-align:center;transform-origin:50% 50%;top:143px;font-size:5.0px;line-height:6px;color:#f4f4f4;font-weight:bold;transform:scaleX(0.9);">S</div>
<div class="t" style="left:85.65px;width:10px;text-align:center;transform-origin:50% 50%;top:157px;font-size:5.44px;line-height:6px;color:#ffffff;font-weight:normal;transform:scaleX(0.9);-webkit-text-stroke:0.19px #ffffff;letter-spacing:-0.25px">6</div>
<div class="t" style="left:123.10px;transform-origin:0 50%;top:153px;font-size:5.56px;line-height:6px;color:#f4f4f4;font-weight:bold;transform:scaleX(0.9);letter-spacing:-0.1px">Untitled<svg style="position:static;display:inline-block;vertical-align:middle;margin-left:1.6px;margin-top:-0.6px" width="3" height="5" viewBox="0 0 3 5"><path d="M0.4 1.9 l1.1 -1.2 l1.1 1.2 M0.4 3.1 l1.1 1.2 l1.1 -1.2" fill="none" stroke="#a4a4a4" stroke-width="0.65"/></svg></div>
<div class="t" style="right:774.60px;transform-origin:100% 50%;top:153px;font-size:5.56px;line-height:6px;color:#202020;font-weight:bold;transform:scaleX(0.9);letter-spacing:-0.1px">Inst 5</div>
<div class="t" style="left:122.95px;width:8px;text-align:center;transform-origin:50% 50%;top:162px;font-size:5.0px;line-height:6px;color:#f4f4f4;font-weight:bold;transform:scaleX(0.9);">M</div>
<div class="t" style="left:130.75px;width:8px;text-align:center;transform-origin:50% 50%;top:162px;font-size:5.0px;line-height:6px;color:#f4f4f4;font-weight:bold;transform:scaleX(0.9);">S</div>
<div class="t" style="left:85.65px;width:10px;text-align:center;transform-origin:50% 50%;top:176px;font-size:5.44px;line-height:6px;color:#ffffff;font-weight:normal;transform:scaleX(0.9);-webkit-text-stroke:0.19px #ffffff;letter-spacing:-0.25px">7</div>
<div class="t" style="left:123.10px;transform-origin:0 50%;top:172px;font-size:5.56px;line-height:6px;color:#f4f4f4;font-weight:bold;transform:scaleX(0.9);letter-spacing:-0.1px">Untitled<svg style="position:static;display:inline-block;vertical-align:middle;margin-left:1.6px;margin-top:-0.6px" width="3" height="5" viewBox="0 0 3 5"><path d="M0.4 1.9 l1.1 -1.2 l1.1 1.2 M0.4 3.1 l1.1 1.2 l1.1 -1.2" fill="none" stroke="#a4a4a4" stroke-width="0.65"/></svg></div>
<div class="t" style="right:774.60px;transform-origin:100% 50%;top:172px;font-size:5.56px;line-height:6px;color:#202020;font-weight:bold;transform:scaleX(0.9);letter-spacing:-0.1px">Inst 4</div>
<div class="t" style="left:122.95px;width:8px;text-align:center;transform-origin:50% 50%;top:181px;font-size:5.0px;line-height:6px;color:#f4f4f4;font-weight:bold;transform:scaleX(0.9);">M</div>
<div class="t" style="left:130.75px;width:8px;text-align:center;transform-origin:50% 50%;top:181px;font-size:5.0px;line-height:6px;color:#f4f4f4;font-weight:bold;transform:scaleX(0.9);">S</div>
<div class="t" style="left:85.65px;width:10px;text-align:center;transform-origin:50% 50%;top:195px;font-size:5.44px;line-height:6px;color:#ffffff;font-weight:normal;transform:scaleX(0.9);-webkit-text-stroke:0.19px #ffffff;letter-spacing:-0.25px">8</div>
<div class="t" style="left:123.10px;transform-origin:0 50%;top:191px;font-size:5.56px;line-height:6px;color:#f4f4f4;font-weight:bold;transform:scaleX(0.9);letter-spacing:-0.1px">electric<svg style="position:static;display:inline-block;vertical-align:middle;margin-left:1.6px;margin-top:-0.6px" width="3" height="5" viewBox="0 0 3 5"><path d="M0.4 1.9 l1.1 -1.2 l1.1 1.2 M0.4 3.1 l1.1 1.2 l1.1 -1.2" fill="none" stroke="#a4a4a4" stroke-width="0.65"/></svg></div>
<div class="t" style="right:774.60px;transform-origin:100% 50%;top:191px;font-size:5.56px;line-height:6px;color:#202020;font-weight:bold;transform:scaleX(0.9);letter-spacing:-0.1px">Inst 6</div>
<div class="t" style="left:122.95px;width:8px;text-align:center;transform-origin:50% 50%;top:200px;font-size:5.0px;line-height:6px;color:#f4f4f4;font-weight:bold;transform:scaleX(0.9);">M</div>
<div class="t" style="left:130.75px;width:8px;text-align:center;transform-origin:50% 50%;top:200px;font-size:5.0px;line-height:6px;color:#f4f4f4;font-weight:bold;transform:scaleX(0.9);">S</div>
<div class="t" style="left:85.65px;width:10px;text-align:center;transform-origin:50% 50%;top:214px;font-size:5.44px;line-height:6px;color:#ffffff;font-weight:normal;transform:scaleX(0.9);-webkit-text-stroke:0.19px #ffffff;letter-spacing:-0.25px">9</div>
<div class="t" style="left:123.10px;transform-origin:0 50%;top:210px;font-size:5.56px;line-height:6px;color:#f4f4f4;font-weight:bold;transform:scaleX(0.9);letter-spacing:-0.1px">bg_pad<svg style="position:static;display:inline-block;vertical-align:middle;margin-left:1.6px;margin-top:-0.6px" width="3" height="5" viewBox="0 0 3 5"><path d="M0.4 1.9 l1.1 -1.2 l1.1 1.2 M0.4 3.1 l1.1 1.2 l1.1 -1.2" fill="none" stroke="#a4a4a4" stroke-width="0.65"/></svg></div>
<div class="t" style="right:774.60px;transform-origin:100% 50%;top:210px;font-size:5.56px;line-height:6px;color:#202020;font-weight:bold;transform:scaleX(0.9);letter-spacing:-0.1px">Inst 16</div>
<div class="t" style="left:122.95px;width:8px;text-align:center;transform-origin:50% 50%;top:219px;font-size:5.0px;line-height:6px;color:#f4f4f4;font-weight:bold;transform:scaleX(0.9);">M</div>
<div class="t" style="left:130.75px;width:8px;text-align:center;transform-origin:50% 50%;top:219px;font-size:5.0px;line-height:6px;color:#f4f4f4;font-weight:bold;transform:scaleX(0.9);">S</div>
<div class="t" style="left:85.65px;width:10px;text-align:center;transform-origin:50% 50%;top:234px;font-size:5.44px;line-height:6px;color:#ffffff;font-weight:normal;transform:scaleX(0.9);-webkit-text-stroke:0.19px #ffffff;letter-spacing:-0.25px">10</div>
<div class="t" style="left:123.10px;transform-origin:0 50%;top:229px;font-size:5.56px;line-height:6px;color:#f4f4f4;font-weight:bold;transform:scaleX(0.9);letter-spacing:-0.1px">Steinway Piano 2<span style="color:#999;font-weight:normal;margin-left:1.2px">|</span><svg style="position:static;display:inline-block;vertical-align:middle;margin-left:4px;margin-top:-0.6px" width="3" height="5" viewBox="0 0 3 5"><path d="M0.4 1.9 l1.1 -1.2 l1.1 1.2 M0.4 3.1 l1.1 1.2 l1.1 -1.2" fill="none" stroke="#a4a4a4" stroke-width="0.65"/></svg></div>
<div class="t" style="right:774.60px;transform-origin:100% 50%;top:229px;font-size:5.56px;line-height:6px;color:#202020;font-weight:bold;transform:scaleX(0.9);letter-spacing:-0.1px">SGPn</div>
<div class="t" style="left:122.95px;width:8px;text-align:center;transform-origin:50% 50%;top:238px;font-size:5.0px;line-height:6px;color:#f4f4f4;font-weight:bold;transform:scaleX(0.9);">M</div>
<div class="t" style="left:130.75px;width:8px;text-align:center;transform-origin:50% 50%;top:238px;font-size:5.0px;line-height:6px;color:#f4f4f4;font-weight:bold;transform:scaleX(0.9);">S</div>
<div class="t" style="left:85.65px;width:10px;text-align:center;transform-origin:50% 50%;top:253px;font-size:5.44px;line-height:6px;color:#ffffff;font-weight:normal;transform:scaleX(0.9);-webkit-text-stroke:0.19px #ffffff;letter-spacing:-0.25px">11</div>
<div class="t" style="left:123.10px;transform-origin:0 50%;top:248px;font-size:5.56px;line-height:6px;color:#f4f4f4;font-weight:bold;transform:scaleX(0.9);letter-spacing:-0.1px">Cymati...50 BPM<svg style="position:static;display:inline-block;vertical-align:middle;margin-left:1.6px;margin-top:-0.6px" width="3" height="5" viewBox="0 0 3 5"><path d="M0.4 1.9 l1.1 -1.2 l1.1 1.2 M0.4 3.1 l1.1 1.2 l1.1 -1.2" fill="none" stroke="#a4a4a4" stroke-width="0.65"/></svg></div>
<div class="t" style="right:774.60px;transform-origin:100% 50%;top:248px;font-size:5.56px;line-height:6px;color:#202020;font-weight:bold;transform:scaleX(0.9);letter-spacing:-0.1px">Audio 1</div>
<div class="t" style="left:122.95px;width:8px;text-align:center;transform-origin:50% 50%;top:257px;font-size:5.0px;line-height:6px;color:#f4f4f4;font-weight:bold;transform:scaleX(0.9);">M</div>
<div class="t" style="left:130.75px;width:8px;text-align:center;transform-origin:50% 50%;top:257px;font-size:5.0px;line-height:6px;color:#f4f4f4;font-weight:bold;transform:scaleX(0.9);">S</div>
<div class="t" style="left:85.65px;width:10px;text-align:center;transform-origin:50% 50%;top:272px;font-size:5.44px;line-height:6px;color:#ffffff;font-weight:normal;transform:scaleX(0.9);-webkit-text-stroke:0.19px #ffffff;letter-spacing:-0.25px">12</div>
<div class="t" style="left:123.10px;transform-origin:0 50%;top:268px;font-size:5.56px;line-height:6px;color:#f4f4f4;font-weight:bold;transform:scaleX(0.9);letter-spacing:-0.1px">Cymati...50 BPM<svg style="position:static;display:inline-block;vertical-align:middle;margin-left:1.6px;margin-top:-0.6px" width="3" height="5" viewBox="0 0 3 5"><path d="M0.4 1.9 l1.1 -1.2 l1.1 1.2 M0.4 3.1 l1.1 1.2 l1.1 -1.2" fill="none" stroke="#a4a4a4" stroke-width="0.65"/></svg></div>
<div class="t" style="right:774.60px;transform-origin:100% 50%;top:268px;font-size:5.56px;line-height:6px;color:#202020;font-weight:bold;transform:scaleX(0.9);letter-spacing:-0.1px">Audio 2</div>
<div class="t" style="left:122.95px;width:8px;text-align:center;transform-origin:50% 50%;top:277px;font-size:5.0px;line-height:6px;color:#f4f4f4;font-weight:bold;transform:scaleX(0.9);">M</div>
<div class="t" style="left:130.75px;width:8px;text-align:center;transform-origin:50% 50%;top:277px;font-size:5.0px;line-height:6px;color:#f4f4f4;font-weight:bold;transform:scaleX(0.9);">S</div>
<div class="t" style="left:85.65px;width:10px;text-align:center;transform-origin:50% 50%;top:291px;font-size:5.44px;line-height:6px;color:#ffffff;font-weight:normal;transform:scaleX(0.9);-webkit-text-stroke:0.19px #ffffff;letter-spacing:-0.25px">13</div>
<div class="t" style="left:123.10px;transform-origin:0 50%;top:287px;font-size:5.56px;line-height:6px;color:#f4f4f4;font-weight:bold;transform:scaleX(0.9);letter-spacing:-0.1px">Cymati...pact 2<svg style="position:static;display:inline-block;vertical-align:middle;margin-left:1.6px;margin-top:-0.6px" width="3" height="5" viewBox="0 0 3 5"><path d="M0.4 1.9 l1.1 -1.2 l1.1 1.2 M0.4 3.1 l1.1 1.2 l1.1 -1.2" fill="none" stroke="#a4a4a4" stroke-width="0.65"/></svg></div>
<div class="t" style="right:774.60px;transform-origin:100% 50%;top:287px;font-size:5.56px;line-height:6px;color:#202020;font-weight:bold;transform:scaleX(0.9);letter-spacing:-0.1px">Audio 3</div>
<div class="t" style="left:122.95px;width:8px;text-align:center;transform-origin:50% 50%;top:296px;font-size:5.0px;line-height:6px;color:#f4f4f4;font-weight:bold;transform:scaleX(0.9);">M</div>
<div class="t" style="left:130.75px;width:8px;text-align:center;transform-origin:50% 50%;top:296px;font-size:5.0px;line-height:6px;color:#f4f4f4;font-weight:bold;transform:scaleX(0.9);">S</div>
<div class="t" style="left:85.65px;width:10px;text-align:center;transform-origin:50% 50%;top:310px;font-size:5.44px;line-height:6px;color:#ffffff;font-weight:normal;transform:scaleX(0.9);-webkit-text-stroke:0.19px #ffffff;letter-spacing:-0.25px">14</div>
<div class="t" style="left:123.10px;transform-origin:0 50%;top:306px;font-size:5.56px;line-height:6px;color:#f4f4f4;font-weight:bold;transform:scaleX(0.9);letter-spacing:-0.1px">im &#12400;<svg style="position:static;display:inline-block;vertical-align:middle;margin-left:1.6px;margin-top:-0.6px" width="3" height="5" viewBox="0 0 3 5"><path d="M0.4 1.9 l1.1 -1.2 l1.1 1.2 M0.4 3.1 l1.1 1.2 l1.1 -1.2" fill="none" stroke="#a4a4a4" stroke-width="0.65"/></svg></div>
<div class="t" style="right:774.60px;transform-origin:100% 50%;top:306px;font-size:5.56px;line-height:6px;color:#202020;font-weight:bold;transform:scaleX(0.9);letter-spacing:-0.1px">heavy_downer</div>
<div class="t" style="left:122.95px;width:8px;text-align:center;transform-origin:50% 50%;top:315px;font-size:5.0px;line-height:6px;color:#f4f4f4;font-weight:bold;transform:scaleX(0.9);">M</div>
<div class="t" style="left:130.75px;width:8px;text-align:center;transform-origin:50% 50%;top:315px;font-size:5.0px;line-height:6px;color:#f4f4f4;font-weight:bold;transform:scaleX(0.9);">S</div>
<div class="t" style="left:85.65px;width:10px;text-align:center;transform-origin:50% 50%;top:329px;font-size:5.44px;line-height:6px;color:#ffffff;font-weight:normal;transform:scaleX(0.9);-webkit-text-stroke:0.19px #ffffff;letter-spacing:-0.25px">15</div>
<div class="t" style="left:123.10px;transform-origin:0 50%;top:325px;font-size:5.56px;line-height:6px;color:#f4f4f4;font-weight:bold;transform:scaleX(0.9);letter-spacing:-0.1px">Cymati...Cymbal<svg style="position:static;display:inline-block;vertical-align:middle;margin-left:1.6px;margin-top:-0.6px" width="3" height="5" viewBox="0 0 3 5"><path d="M0.4 1.9 l1.1 -1.2 l1.1 1.2 M0.4 3.1 l1.1 1.2 l1.1 -1.2" fill="none" stroke="#a4a4a4" stroke-width="0.65"/></svg></div>
<div class="t" style="right:774.60px;transform-origin:100% 50%;top:325px;font-size:5.56px;line-height:6px;color:#202020;font-weight:bold;transform:scaleX(0.9);letter-spacing:-0.1px">Audio 4</div>
<div class="t" style="left:122.95px;width:8px;text-align:center;transform-origin:50% 50%;top:334px;font-size:5.0px;line-height:6px;color:#f4f4f4;font-weight:bold;transform:scaleX(0.9);">M</div>
<div class="t" style="left:130.75px;width:8px;text-align:center;transform-origin:50% 50%;top:334px;font-size:5.0px;line-height:6px;color:#f4f4f4;font-weight:bold;transform:scaleX(0.9);">S</div>
<div class="t" style="left:85.65px;width:10px;text-align:center;transform-origin:50% 50%;top:348px;font-size:5.44px;line-height:6px;color:#ffffff;font-weight:normal;transform:scaleX(0.9);-webkit-text-stroke:0.19px #ffffff;letter-spacing:-0.25px">16</div>
<div class="t" style="left:123.10px;transform-origin:0 50%;top:344px;font-size:5.56px;line-height:6px;color:#f4f4f4;font-weight:bold;transform:scaleX(0.9);letter-spacing:-0.1px">Inst 19<svg style="position:static;display:inline-block;vertical-align:middle;margin-left:1.6px;margin-top:-0.6px" width="3" height="5" viewBox="0 0 3 5"><path d="M0.4 1.9 l1.1 -1.2 l1.1 1.2 M0.4 3.1 l1.1 1.2 l1.1 -1.2" fill="none" stroke="#a4a4a4" stroke-width="0.65"/></svg></div>
<div class="t" style="right:774.60px;transform-origin:100% 50%;top:344px;font-size:5.56px;line-height:6px;color:#202020;font-weight:bold;transform:scaleX(0.9);letter-spacing:-0.1px">Inst 19</div>
<div class="t" style="left:122.95px;width:8px;text-align:center;transform-origin:50% 50%;top:353px;font-size:5.0px;line-height:6px;color:#f4f4f4;font-weight:bold;transform:scaleX(0.9);">M</div>
<div class="t" style="left:130.75px;width:8px;text-align:center;transform-origin:50% 50%;top:353px;font-size:5.0px;line-height:6px;color:#f4f4f4;font-weight:bold;transform:scaleX(0.9);">S</div>
<div class="t" style="left:85.65px;width:10px;text-align:center;transform-origin:50% 50%;top:367px;font-size:5.44px;line-height:6px;color:#ffffff;font-weight:normal;transform:scaleX(0.9);-webkit-text-stroke:0.19px #ffffff;letter-spacing:-0.25px">17</div>
<div class="t" style="left:123.10px;transform-origin:0 50%;top:363px;font-size:5.56px;line-height:6px;color:#f4f4f4;font-weight:bold;transform:scaleX(0.9);letter-spacing:-0.1px">common<svg style="position:static;display:inline-block;vertical-align:middle;margin-left:1.6px;margin-top:-0.6px" width="3" height="5" viewBox="0 0 3 5"><path d="M0.4 1.9 l1.1 -1.2 l1.1 1.2 M0.4 3.1 l1.1 1.2 l1.1 -1.2" fill="none" stroke="#a4a4a4" stroke-width="0.65"/></svg></div>
<div class="t" style="right:774.60px;transform-origin:100% 50%;top:363px;font-size:5.56px;line-height:6px;color:#202020;font-weight:bold;transform:scaleX(0.9);letter-spacing:-0.1px">Aux 5</div>
<div class="t" style="left:122.95px;width:8px;text-align:center;transform-origin:50% 50%;top:372px;font-size:5.0px;line-height:6px;color:#f4f4f4;font-weight:bold;transform:scaleX(0.9);">M</div>
<div class="t" style="left:130.75px;width:8px;text-align:center;transform-origin:50% 50%;top:372px;font-size:5.0px;line-height:6px;color:#f4f4f4;font-weight:bold;transform:scaleX(0.9);">S</div>
<div style="left:190.40px;top:40.00px;width:769.60px;height:14.40px;background:#353535;"></div>
<div style="left:190.40px;top:40.00px;width:769.60px;height:7.50px;background:#2c2c2c;"></div>
<div style="left:190.40px;top:54.10px;width:769.60px;height:486.00px;background:#b4b4b4;"></div>
<div style="left:190.40px;top:92.34px;width:769.60px;height:95.60px;background:#a0b1a5;"></div>
<div style="left:190.40px;top:149.70px;width:769.60px;height:19.12px;background:#aec0b4;"></div>
<div style="left:661.50px;top:40.20px;width:178.00px;height:7.30px;background:#5e5e5e;"></div>
<svg width="960" height="540"><path d="M194.00 54.1 V540" stroke="#9a9a9a" stroke-width="0.5" opacity="0.75"/><path d="M196.79 54.1 V540" stroke="#a0a0a0" stroke-width="0.5" opacity="0.3"/><path d="M194.00 40.2 V54.1" stroke="#747474" stroke-width="0.55"/><path d="M199.57 54.1 V540" stroke="#9a9a9a" stroke-width="0.5" opacity="0.6"/><path d="M202.36 54.1 V540" stroke="#a0a0a0" stroke-width="0.5" opacity="0.3"/><path d="M199.57 48.4 V54.1" stroke="#6c6c6c" stroke-width="0.55"/><path d="M205.15 54.1 V540" stroke="#9a9a9a" stroke-width="0.5" opacity="0.6"/><path d="M207.94 54.1 V540" stroke="#a0a0a0" stroke-width="0.5" opacity="0.3"/><path d="M205.15 48.4 V54.1" stroke="#6c6c6c" stroke-width="0.55"/><path d="M210.72 54.1 V540" stroke="#9a9a9a" stroke-width="0.5" opacity="0.6"/><path d="M213.51 54.1 V540" stroke="#a0a0a0" stroke-width="0.5" opacity="0.3"/><path d="M210.72 48.4 V54.1" stroke="#6c6c6c" stroke-width="0.55"/><path d="M216.30 54.1 V540" stroke="#9a9a9a" stroke-width="0.5" opacity="0.6"/><path d="M219.09 54.1 V540" stroke="#a0a0a0" stroke-width="0.5" opacity="0.3"/><path d="M216.30 48.4 V54.1" stroke="#6c6c6c" stroke-width="0.55"/><path d="M221.88 54.1 V540" stroke="#9a9a9a" stroke-width="0.5" opacity="0.6"/><path d="M224.66 54.1 V540" stroke="#a0a0a0" stroke-width="0.5" opacity="0.3"/><path d="M221.88 48.4 V54.1" stroke="#6c6c6c" stroke-width="0.55"/><path d="M227.45 54.1 V540" stroke="#9a9a9a" stroke-width="0.5" opacity="0.6"/><path d="M230.24 54.1 V540" stroke="#a0a0a0" stroke-width="0.5" opacity="0.3"/><path d="M227.45 48.4 V54.1" stroke="#6c6c6c" stroke-width="0.55"/><path d="M233.03 54.1 V540" stroke="#9a9a9a" stroke-width="0.5" opacity="0.6"/><path d="M235.81 54.1 V540" stroke="#a0a0a0" stroke-width="0.5" opacity="0.3"/><path d="M233.03 48.4 V54.1" stroke="#6c6c6c" stroke-width="0.55"/><path d="M238.60 54.1 V540" stroke="#9a9a9a" stroke-width="0.5" opacity="0.75"/><path d="M241.39 54.1 V540" stroke="#a0a0a0" stroke-width="0.5" opacity="0.3"/><path d="M238.60 40.2 V54.1" stroke="#747474" stroke-width="0.55"/><path d="M244.18 54.1 V540" stroke="#9a9a9a" stroke-width="0.5" opacity="0.6"/><path d="M246.96 54.1 V540" stroke="#a0a0a0" stroke-width="0.5" opacity="0.3"/><path d="M244.18 48.4 V54.1" stroke="#6c6c6c" stroke-width="0.55"/><path d="M249.75 54.1 V540" stroke="#9a9a9a" stroke-width="0.5" opacity="0.6"/><path d="M252.54 54.1 V540" stroke="#a0a0a0" stroke-width="0.5" opacity="0.3"/><path d="M249.75 48.4 V54.1" stroke="#6c6c6c" stroke-width="0.55"/><path d="M255.32 54.1 V540" stroke="#9a9a9a" stroke-width="0.5" opacity="0.6"/><path d="M258.11 54.1 V540" stroke="#a0a0a0" stroke-width="0.5" opacity="0.3"/><path d="M255.32 48.4 V54.1" stroke="#6c6c6c" stroke-width="0.55"/><path d="M260.90 54.1 V540" stroke="#9a9a9a" stroke-width="0.5" opacity="0.6"/><path d="M263.69 54.1 V540" stroke="#a0a0a0" stroke-width="0.5" opacity="0.3"/><path d="M260.90 48.4 V54.1" stroke="#6c6c6c" stroke-width="0.55"/><path d="M266.48 54.1 V540" stroke="#9a9a9a" stroke-width="0.5" opacity="0.6"/><path d="M269.26 54.1 V540" stroke="#a0a0a0" stroke-width="0.5" opacity="0.3"/><path d="M266.48 48.4 V54.1" stroke="#6c6c6c" stroke-width="0.55"/><path d="M272.05 54.1 V540" stroke="#9a9a9a" stroke-width="0.5" opacity="0.6"/><path d="M274.84 54.1 V540" stroke="#a0a0a0" stroke-width="0.5" opacity="0.3"/><path d="M272.05 48.4 V54.1" stroke="#6c6c6c" stroke-width="0.55"/><path d="M277.62 54.1 V540" stroke="#9a9a9a" stroke-width="0.5" opacity="0.6"/><path d="M280.41 54.1 V540" stroke="#a0a0a0" stroke-width="0.5" opacity="0.3"/><path d="M277.62 48.4 V54.1" stroke="#6c6c6c" stroke-width="0.55"/><path d="M283.20 54.1 V540" stroke="#9a9a9a" stroke-width="0.5" opacity="0.75"/><path d="M285.99 54.1 V540" stroke="#a0a0a0" stroke-width="0.5" opacity="0.3"/><path d="M283.20 40.2 V54.1" stroke="#747474" stroke-width="0.55"/><path d="M288.77 54.1 V540" stroke="#9a9a9a" stroke-width="0.5" opacity="0.6"/><path d="M291.56 54.1 V540" stroke="#a0a0a0" stroke-width="0.5" opacity="0.3"/><path d="M288.77 48.4 V54.1" stroke="#6c6c6c" stroke-width="0.55"/><path d="M294.35 54.1 V540" stroke="#9a9a9a" stroke-width="0.5" opacity="0.6"/><path d="M297.14 54.1 V540" stroke="#a0a0a0" stroke-width="0.5" opacity="0.3"/><path d="M294.35 48.4 V54.1" stroke="#6c6c6c" stroke-width="0.55"/><path d="M299.93 54.1 V540" stroke="#9a9a9a" stroke-width="0.5" opacity="0.6"/><path d="M302.71 54.1 V540" stroke="#a0a0a0" stroke-width="0.5" opacity="0.3"/><path d="M299.93 48.4 V54.1" stroke="#6c6c6c" stroke-width="0.55"/><path d="M305.50 54.1 V540" stroke="#9a9a9a" stroke-width="0.5" opacity="0.6"/><path d="M308.29 54.1 V540" stroke="#a0a0a0" stroke-width="0.5" opacity="0.3"/><path d="M305.50 48.4 V54.1" stroke="#6c6c6c" stroke-width="0.55"/><path d="M311.07 54.1 V540" stroke="#9a9a9a" stroke-width="0.5" opacity="0.6"/><path d="M313.86 54.1 V540" stroke="#a0a0a0" stroke-width="0.5" opacity="0.3"/><path d="M311.07 48.4 V54.1" stroke="#6c6c6c" stroke-width="0.55"/><path d="M316.65 54.1 V540" stroke="#9a9a9a" stroke-width="0.5" opacity="0.6"/><path d="M319.44 54.1 V540" stroke="#a0a0a0" stroke-width="0.5" opacity="0.3"/><path d="M316.65 48.4 V54.1" stroke="#6c6c6c" stroke-width="0.55"/><path d="M322.23 54.1 V540" stroke="#9a9a9a" stroke-width="0.5" opacity="0.6"/><path d="M325.01 54.1 V540" stroke="#a0a0a0" stroke-width="0.5" opacity="0.3"/><path d="M322.23 48.4 V54.1" stroke="#6c6c6c" stroke-width="0.55"/><path d="M327.80 54.1 V540" stroke="#9a9a9a" stroke-width="0.5" opacity="0.75"/><path d="M330.59 54.1 V540" stroke="#a0a0a0" stroke-width="0.5" opacity="0.3"/><path d="M327.80 40.2 V54.1" stroke="#747474" stroke-width="0.55"/><path d="M333.38 54.1 V540" stroke="#9a9a9a" stroke-width="0.5" opacity="0.6"/><path d="M336.16 54.1 V540" stroke="#a0a0a0" stroke-width="0.5" opacity="0.3"/><path d="M333.38 48.4 V54.1" stroke="#6c6c6c" stroke-width="0.55"/><path d="M338.95 54.1 V540" stroke="#9a9a9a" stroke-width="0.5" opacity="0.6"/><path d="M341.74 54.1 V540" stroke="#a0a0a0" stroke-width="0.5" opacity="0.3"/><path d="M338.95 48.4 V54.1" stroke="#6c6c6c" stroke-width="0.55"/><path d="M344.52 54.1 V540" stroke="#9a9a9a" stroke-width="0.5" opacity="0.6"/><path d="M347.31 54.1 V540" stroke="#a0a0a0" stroke-width="0.5" opacity="0.3"/><path d="M344.52 48.4 V54.1" stroke="#6c6c6c" stroke-width="0.55"/><path d="M350.10 54.1 V540" stroke="#9a9a9a" stroke-width="0.5" opacity="0.6"/><path d="M352.89 54.1 V540" stroke="#a0a0a0" stroke-width="0.5" opacity="0.3"/><path d="M350.10 48.4 V54.1" stroke="#6c6c6c" stroke-width="0.55"/><path d="M355.68 54.1 V540" stroke="#9a9a9a" stroke-width="0.5" opacity="0.6"/><path d="M358.46 54.1 V540" stroke="#a0a0a0" stroke-width="0.5" opacity="0.3"/><path d="M355.68 48.4 V54.1" stroke="#6c6c6c" stroke-width="0.55"/><path d="M361.25 54.1 V540" stroke="#9a9a9a" stroke-width="0.5" opacity="0.6"/><path d="M364.04 54.1 V540" stroke="#a0a0a0" stroke-width="0.5" opacity="0.3"/><path d="M361.25 48.4 V54.1" stroke="#6c6c6c" stroke-width="0.55"/><path d="M366.83 54.1 V540" stroke="#9a9a9a" stroke-width="0.5" opacity="0.6"/><path d="M369.61 54.1 V540" stroke="#a0a0a0" stroke-width="0.5" opacity="0.3"/><path d="M366.83 48.4 V54.1" stroke="#6c6c6c" stroke-width="0.55"/><path d="M372.40 54.1 V540" stroke="#9a9a9a" stroke-width="0.5" opacity="0.75"/><path d="M375.19 54.1 V540" stroke="#a0a0a0" stroke-width="0.5" opacity="0.3"/><path d="M372.40 40.2 V54.1" stroke="#747474" stroke-width="0.55"/><path d="M377.98 54.1 V540" stroke="#9a9a9a" stroke-width="0.5" opacity="0.6"/><path d="M380.76 54.1 V540" stroke="#a0a0a0" stroke-width="0.5" opacity="0.3"/><path d="M377.98 48.4 V54.1" stroke="#6c6c6c" stroke-width="0.55"/><path d="M383.55 54.1 V540" stroke="#9a9a9a" stroke-width="0.5" opacity="0.6"/><path d="M386.34 54.1 V540" stroke="#a0a0a0" stroke-width="0.5" opacity="0.3"/><path d="M383.55 48.4 V54.1" stroke="#6c6c6c" stroke-width="0.55"/><path d="M389.12 54.1 V540" stroke="#9a9a9a" stroke-width="0.5" opacity="0.6"/><path d="M391.91 54.1 V540" stroke="#a0a0a0" stroke-width="0.5" opacity="0.3"/><path d="M389.12 48.4 V54.1" stroke="#6c6c6c" stroke-width="0.55"/><path d="M394.70 54.1 V540" stroke="#9a9a9a" stroke-width="0.5" opacity="0.6"/><path d="M397.49 54.1 V540" stroke="#a0a0a0" stroke-width="0.5" opacity="0.3"/><path d="M394.70 48.4 V54.1" stroke="#6c6c6c" stroke-width="0.55"/><path d="M400.27 54.1 V540" stroke="#9a9a9a" stroke-width="0.5" opacity="0.6"/><path d="M403.06 54.1 V540" stroke="#a0a0a0" stroke-width="0.5" opacity="0.3"/><path d="M400.27 48.4 V54.1" stroke="#6c6c6c" stroke-width="0.55"/><path d="M405.85 54.1 V540" stroke="#9a9a9a" stroke-width="0.5" opacity="0.6"/><path d="M408.64 54.1 V540" stroke="#a0a0a0" stroke-width="0.5" opacity="0.3"/><path d="M405.85 48.4 V54.1" stroke="#6c6c6c" stroke-width="0.55"/><path d="M411.43 54.1 V540" stroke="#9a9a9a" stroke-width="0.5" opacity="0.6"/><path d="M414.21 54.1 V540" stroke="#a0a0a0" stroke-width="0.5" opacity="0.3"/><path d="M411.43 48.4 V54.1" stroke="#6c6c6c" stroke-width="0.55"/><path d="M417.00 54.1 V540" stroke="#9a9a9a" stroke-width="0.5" opacity="0.75"/><path d="M419.79 54.1 V540" stroke="#a0a0a0" stroke-width="0.5" opacity="0.3"/><path d="M417.00 40.2 V54.1" stroke="#747474" stroke-width="0.55"/><path d="M422.58 54.1 V540" stroke="#9a9a9a" stroke-width="0.5" opacity="0.6"/><path d="M425.36 54.1 V540" stroke="#a0a0a0" stroke-width="0.5" opacity="0.3"/><path d="M422.58 48.4 V54.1" stroke="#6c6c6c" stroke-width="0.55"/><path d="M428.15 54.1 V540" stroke="#9a9a9a" stroke-width="0.5" opacity="0.6"/><path d="M430.94 54.1 V540" stroke="#a0a0a0" stroke-width="0.5" opacity="0.3"/><path d="M428.15 48.4 V54.1" stroke="#6c6c6c" stroke-width="0.55"/><path d="M433.73 54.1 V540" stroke="#9a9a9a" stroke-width="0.5" opacity="0.6"/><path d="M436.51 54.1 V540" stroke="#a0a0a0" stroke-width="0.5" opacity="0.3"/><path d="M433.73 48.4 V54.1" stroke="#6c6c6c" stroke-width="0.55"/><path d="M439.30 54.1 V540" stroke="#9a9a9a" stroke-width="0.5" opacity="0.6"/><path d="M442.09 54.1 V540" stroke="#a0a0a0" stroke-width="0.5" opacity="0.3"/><path d="M439.30 48.4 V54.1" stroke="#6c6c6c" stroke-width="0.55"/><path d="M444.88 54.1 V540" stroke="#9a9a9a" stroke-width="0.5" opacity="0.6"/><path d="M447.66 54.1 V540" stroke="#a0a0a0" stroke-width="0.5" opacity="0.3"/><path d="M444.88 48.4 V54.1" stroke="#6c6c6c" stroke-width="0.55"/><path d="M450.45 54.1 V540" stroke="#9a9a9a" stroke-width="0.5" opacity="0.6"/><path d="M453.24 54.1 V540" stroke="#a0a0a0" stroke-width="0.5" opacity="0.3"/><path d="M450.45 48.4 V54.1" stroke="#6c6c6c" stroke-width="0.55"/><path d="M456.03 54.1 V540" stroke="#9a9a9a" stroke-width="0.5" opacity="0.6"/><path d="M458.81 54.1 V540" stroke="#a0a0a0" stroke-width="0.5" opacity="0.3"/><path d="M456.03 48.4 V54.1" stroke="#6c6c6c" stroke-width="0.55"/><path d="M461.60 54.1 V540" stroke="#9a9a9a" stroke-width="0.5" opacity="0.75"/><path d="M464.39 54.1 V540" stroke="#a0a0a0" stroke-width="0.5" opacity="0.3"/><path d="M461.60 40.2 V54.1" stroke="#747474" stroke-width="0.55"/><path d="M467.18 54.1 V540" stroke="#9a9a9a" stroke-width="0.5" opacity="0.6"/><path d="M469.96 54.1 V540" stroke="#a0a0a0" stroke-width="0.5" opacity="0.3"/><path d="M467.18 48.4 V54.1" stroke="#6c6c6c" stroke-width="0.55"/><path d="M472.75 54.1 V540" stroke="#9a9a9a" stroke-width="0.5" opacity="0.6"/><path d="M475.54 54.1 V540" stroke="#a0a0a0" stroke-width="0.5" opacity="0.3"/><path d="M472.75 48.4 V54.1" stroke="#6c6c6c" stroke-width="0.55"/><path d="M478.32 54.1 V540" stroke="#9a9a9a" stroke-width="0.5" opacity="0.6"/><path d="M481.11 54.1 V540" stroke="#a0a0a0" stroke-width="0.5" opacity="0.3"/><path d="M478.32 48.4 V54.1" stroke="#6c6c6c" stroke-width="0.55"/><path d="M483.90 54.1 V540" stroke="#9a9a9a" stroke-width="0.5" opacity="0.6"/><path d="M486.69 54.1 V540" stroke="#a0a0a0" stroke-width="0.5" opacity="0.3"/><path d="M483.90 48.4 V54.1" stroke="#6c6c6c" stroke-width="0.55"/><path d="M489.48 54.1 V540" stroke="#9a9a9a" stroke-width="0.5" opacity="0.6"/><path d="M492.26 54.1 V540" stroke="#a0a0a0" stroke-width="0.5" opacity="0.3"/><path d="M489.48 48.4 V54.1" stroke="#6c6c6c" stroke-width="0.55"/><path d="M495.05 54.1 V540" stroke="#9a9a9a" stroke-width="0.5" opacity="0.6"/><path d="M497.84 54.1 V540" stroke="#a0a0a0" stroke-width="0.5" opacity="0.3"/><path d="M495.05 48.4 V54.1" stroke="#6c6c6c" stroke-width="0.55"/><path d="M500.62 54.1 V540" stroke="#9a9a9a" stroke-width="0.5" opacity="0.6"/><path d="M503.41 54.1 V540" stroke="#a0a0a0" stroke-width="0.5" opacity="0.3"/><path d="M500.62 48.4 V54.1" stroke="#6c6c6c" stroke-width="0.55"/><path d="M506.20 54.1 V540" stroke="#9a9a9a" stroke-width="0.5" opacity="0.75"/><path d="M508.99 54.1 V540" stroke="#a0a0a0" stroke-width="0.5" opacity="0.3"/><path d="M506.20 40.2 V54.1" stroke="#747474" stroke-width="0.55"/><path d="M511.78 54.1 V540" stroke="#9a9a9a" stroke-width="0.5" opacity="0.6"/><path d="M514.56 54.1 V540" stroke="#a0a0a0" stroke-width="0.5" opacity="0.3"/><path d="M511.78 48.4 V54.1" stroke="#6c6c6c" stroke-width="0.55"/><path d="M517.35 54.1 V540" stroke="#9a9a9a" stroke-width="0.5" opacity="0.6"/><path d="M520.14 54.1 V540" stroke="#a0a0a0" stroke-width="0.5" opacity="0.3"/><path d="M517.35 48.4 V54.1" stroke="#6c6c6c" stroke-width="0.55"/><path d="M522.92 54.1 V540" stroke="#9a9a9a" stroke-width="0.5" opacity="0.6"/><path d="M525.71 54.1 V540" stroke="#a0a0a0" stroke-width="0.5" opacity="0.3"/><path d="M522.92 48.4 V54.1" stroke="#6c6c6c" stroke-width="0.55"/><path d="M528.50 54.1 V540" stroke="#9a9a9a" stroke-width="0.5" opacity="0.6"/><path d="M531.29 54.1 V540" stroke="#a0a0a0" stroke-width="0.5" opacity="0.3"/><path d="M528.50 48.4 V54.1" stroke="#6c6c6c" stroke-width="0.55"/><path d="M534.08 54.1 V540" stroke="#9a9a9a" stroke-width="0.5" opacity="0.6"/><path d="M536.86 54.1 V540" stroke="#a0a0a0" stroke-width="0.5" opacity="0.3"/><path d="M534.08 48.4 V54.1" stroke="#6c6c6c" stroke-width="0.55"/><path d="M539.65 54.1 V540" stroke="#9a9a9a" stroke-width="0.5" opacity="0.6"/><path d="M542.44 54.1 V540" stroke="#a0a0a0" stroke-width="0.5" opacity="0.3"/><path d="M539.65 48.4 V54.1" stroke="#6c6c6c" stroke-width="0.55"/><path d="M545.23 54.1 V540" stroke="#9a9a9a" stroke-width="0.5" opacity="0.6"/><path d="M548.01 54.1 V540" stroke="#a0a0a0" stroke-width="0.5" opacity="0.3"/><path d="M545.23 48.4 V54.1" stroke="#6c6c6c" stroke-width="0.55"/><path d="M550.80 54.1 V540" stroke="#9a9a9a" stroke-width="0.5" opacity="0.75"/><path d="M553.59 54.1 V540" stroke="#a0a0a0" stroke-width="0.5" opacity="0.3"/><path d="M550.80 40.2 V54.1" stroke="#747474" stroke-width="0.55"/><path d="M556.38 54.1 V540" stroke="#9a9a9a" stroke-width="0.5" opacity="0.6"/><path d="M559.16 54.1 V540" stroke="#a0a0a0" stroke-width="0.5" opacity="0.3"/><path d="M556.38 48.4 V54.1" stroke="#6c6c6c" stroke-width="0.55"/><path d="M561.95 54.1 V540" stroke="#9a9a9a" stroke-width="0.5" opacity="0.6"/><path d="M564.74 54.1 V540" stroke="#a0a0a0" stroke-width="0.5" opacity="0.3"/><path d="M561.95 48.4 V54.1" stroke="#6c6c6c" stroke-width="0.55"/><path d="M567.53 54.1 V540" stroke="#9a9a9a" stroke-width="0.5" opacity="0.6"/><path d="M570.31 54.1 V540" stroke="#a0a0a0" stroke-width="0.5" opacity="0.3"/><path d="M567.53 48.4 V54.1" stroke="#6c6c6c" stroke-width="0.55"/><path d="M573.10 54.1 V540" stroke="#9a9a9a" stroke-width="0.5" opacity="0.6"/><path d="M575.89 54.1 V540" stroke="#a0a0a0" stroke-width="0.5" opacity="0.3"/><path d="M573.10 48.4 V54.1" stroke="#6c6c6c" stroke-width="0.55"/><path d="M578.67 54.1 V540" stroke="#9a9a9a" stroke-width="0.5" opacity="0.6"/><path d="M581.46 54.1 V540" stroke="#a0a0a0" stroke-width="0.5" opacity="0.3"/><path d="M578.67 48.4 V54.1" stroke="#6c6c6c" stroke-width="0.55"/><path d="M584.25 54.1 V540" stroke="#9a9a9a" stroke-width="0.5" opacity="0.6"/><path d="M587.04 54.1 V540" stroke="#a0a0a0" stroke-width="0.5" opacity="0.3"/><path d="M584.25 48.4 V54.1" stroke="#6c6c6c" stroke-width="0.55"/><path d="M589.83 54.1 V540" stroke="#9a9a9a" stroke-width="0.5" opacity="0.6"/><path d="M592.61 54.1 V540" stroke="#a0a0a0" stroke-width="0.5" opacity="0.3"/><path d="M589.83 48.4 V54.1" stroke="#6c6c6c" stroke-width="0.55"/><path d="M595.40 54.1 V540" stroke="#9a9a9a" stroke-width="0.5" opacity="0.75"/><path d="M598.19 54.1 V540" stroke="#a0a0a0" stroke-width="0.5" opacity="0.3"/><path d="M595.40 40.2 V54.1" stroke="#747474" stroke-width="0.55"/><path d="M600.98 54.1 V540" stroke="#9a9a9a" stroke-width="0.5" opacity="0.6"/><path d="M603.76 54.1 V540" stroke="#a0a0a0" stroke-width="0.5" opacity="0.3"/><path d="M600.98 48.4 V54.1" stroke="#6c6c6c" stroke-width="0.55"/><path d="M606.55 54.1 V540" stroke="#9a9a9a" stroke-width="0.5" opacity="0.6"/><path d="M609.34 54.1 V540" stroke="#a0a0a0" stroke-width="0.5" opacity="0.3"/><path d="M606.55 48.4 V54.1" stroke="#6c6c6c" stroke-width="0.55"/><path d="M612.12 54.1 V540" stroke="#9a9a9a" stroke-width="0.5" opacity="0.6"/><path d="M614.91 54.1 V540" stroke="#a0a0a0" stroke-width="0.5" opacity="0.3"/><path d="M612.12 48.4 V54.1" stroke="#6c6c6c" stroke-width="0.55"/><path d="M617.70 54.1 V540" stroke="#9a9a9a" stroke-width="0.5" opacity="0.6"/><path d="M620.49 54.1 V540" stroke="#a0a0a0" stroke-width="0.5" opacity="0.3"/><path d="M617.70 48.4 V54.1" stroke="#6c6c6c" stroke-width="0.55"/><path d="M623.28 54.1 V540" stroke="#9a9a9a" stroke-width="0.5" opacity="0.6"/><path d="M626.06 54.1 V540" stroke="#a0a0a0" stroke-width="0.5" opacity="0.3"/><path d="M623.28 48.4 V54.1" stroke="#6c6c6c" stroke-width="0.55"/><path d="M628.85 54.1 V540" stroke="#9a9a9a" stroke-width="0.5" opacity="0.6"/><path d="M631.64 54.1 V540" stroke="#a0a0a0" stroke-width="0.5" opacity="0.3"/><path d="M628.85 48.4 V54.1" stroke="#6c6c6c" stroke-width="0.55"/><path d="M634.42 54.1 V540" stroke="#9a9a9a" stroke-width="0.5" opacity="0.6"/><path d="M637.21 54.1 V540" stroke="#a0a0a0" stroke-width="0.5" opacity="0.3"/><path d="M634.42 48.4 V54.1" stroke="#6c6c6c" stroke-width="0.55"/><path d="M640.00 54.1 V540" stroke="#9a9a9a" stroke-width="0.5" opacity="0.75"/><path d="M642.79 54.1 V540" stroke="#a0a0a0" stroke-width="0.5" opacity="0.3"/><path d="M640.00 40.2 V54.1" stroke="#747474" stroke-width="0.55"/><path d="M645.58 54.1 V540" stroke="#9a9a9a" stroke-width="0.5" opacity="0.6"/><path d="M648.36 54.1 V540" stroke="#a0a0a0" stroke-width="0.5" opacity="0.3"/><path d="M645.58 48.4 V54.1" stroke="#6c6c6c" stroke-width="0.55"/><path d="M651.15 54.1 V540" stroke="#9a9a9a" stroke-width="0.5" opacity="0.6"/><path d="M653.94 54.1 V540" stroke="#a0a0a0" stroke-width="0.5" opacity="0.3"/><path d="M651.15 48.4 V54.1" stroke="#6c6c6c" stroke-width="0.55"/><path d="M656.73 54.1 V540" stroke="#9a9a9a" stroke-width="0.5" opacity="0.6"/><path d="M659.51 54.1 V540" stroke="#a0a0a0" stroke-width="0.5" opacity="0.3"/><path d="M656.73 48.4 V54.1" stroke="#6c6c6c" stroke-width="0.55"/><path d="M662.30 54.1 V540" stroke="#9a9a9a" stroke-width="0.5" opacity="0.6"/><path d="M665.09 54.1 V540" stroke="#a0a0a0" stroke-width="0.5" opacity="0.3"/><path d="M662.30 48.4 V54.1" stroke="#6c6c6c" stroke-width="0.55"/><path d="M667.88 54.1 V540" stroke="#9a9a9a" stroke-width="0.5" opacity="0.6"/><path d="M670.66 54.1 V540" stroke="#a0a0a0" stroke-width="0.5" opacity="0.3"/><path d="M667.88 48.4 V54.1" stroke="#6c6c6c" stroke-width="0.55"/><path d="M673.45 54.1 V540" stroke="#9a9a9a" stroke-width="0.5" opacity="0.6"/><path d="M676.24 54.1 V540" stroke="#a0a0a0" stroke-width="0.5" opacity="0.3"/><path d="M673.45 48.4 V54.1" stroke="#6c6c6c" stroke-width="0.55"/><path d="M679.03 54.1 V540" stroke="#9a9a9a" stroke-width="0.5" opacity="0.6"/><path d="M681.81 54.1 V540" stroke="#a0a0a0" stroke-width="0.5" opacity="0.3"/><path d="M679.03 48.4 V54.1" stroke="#6c6c6c" stroke-width="0.55"/><path d="M684.60 54.1 V540" stroke="#9a9a9a" stroke-width="0.5" opacity="0.75"/><path d="M687.39 54.1 V540" stroke="#a0a0a0" stroke-width="0.5" opacity="0.3"/><path d="M684.60 40.2 V54.1" stroke="#747474" stroke-width="0.55"/><path d="M690.17 54.1 V540" stroke="#9a9a9a" stroke-width="0.5" opacity="0.6"/><path d="M692.96 54.1 V540" stroke="#a0a0a0" stroke-width="0.5" opacity="0.3"/><path d="M690.17 48.4 V54.1" stroke="#6c6c6c" stroke-width="0.55"/><path d="M695.75 54.1 V540" stroke="#9a9a9a" stroke-width="0.5" opacity="0.6"/><path d="M698.54 54.1 V540" stroke="#a0a0a0" stroke-width="0.5" opacity="0.3"/><path d="M695.75 48.4 V54.1" stroke="#6c6c6c" stroke-width="0.55"/><path d="M701.33 54.1 V540" stroke="#9a9a9a" stroke-width="0.5" opacity="0.6"/><path d="M704.11 54.1 V540" stroke="#a0a0a0" stroke-width="0.5" opacity="0.3"/><path d="M701.33 48.4 V54.1" stroke="#6c6c6c" stroke-width="0.55"/><path d="M706.90 54.1 V540" stroke="#9a9a9a" stroke-width="0.5" opacity="0.6"/><path d="M709.69 54.1 V540" stroke="#a0a0a0" stroke-width="0.5" opacity="0.3"/><path d="M706.90 48.4 V54.1" stroke="#6c6c6c" stroke-width="0.55"/><path d="M712.48 54.1 V540" stroke="#9a9a9a" stroke-width="0.5" opacity="0.6"/><path d="M715.26 54.1 V540" stroke="#a0a0a0" stroke-width="0.5" opacity="0.3"/><path d="M712.48 48.4 V54.1" stroke="#6c6c6c" stroke-width="0.55"/><path d="M718.05 54.1 V540" stroke="#9a9a9a" stroke-width="0.5" opacity="0.6"/><path d="M720.84 54.1 V540" stroke="#a0a0a0" stroke-width="0.5" opacity="0.3"/><path d="M718.05 48.4 V54.1" stroke="#6c6c6c" stroke-width="0.55"/><path d="M723.62 54.1 V540" stroke="#9a9a9a" stroke-width="0.5" opacity="0.6"/><path d="M726.41 54.1 V540" stroke="#a0a0a0" stroke-width="0.5" opacity="0.3"/><path d="M723.62 48.4 V54.1" stroke="#6c6c6c" stroke-width="0.55"/><path d="M729.20 54.1 V540" stroke="#9a9a9a" stroke-width="0.5" opacity="0.75"/><path d="M731.99 54.1 V540" stroke="#a0a0a0" stroke-width="0.5" opacity="0.3"/><path d="M729.20 40.2 V54.1" stroke="#747474" stroke-width="0.55"/><path d="M734.77 54.1 V540" stroke="#9a9a9a" stroke-width="0.5" opacity="0.6"/><path d="M737.56 54.1 V540" stroke="#a0a0a0" stroke-width="0.5" opacity="0.3"/><path d="M734.77 48.4 V54.1" stroke="#6c6c6c" stroke-width="0.55"/><path d="M740.35 54.1 V540" stroke="#9a9a9a" stroke-width="0.5" opacity="0.6"/><path d="M743.14 54.1 V540" stroke="#a0a0a0" stroke-width="0.5" opacity="0.3"/><path d="M740.35 48.4 V54.1" stroke="#6c6c6c" stroke-width="0.55"/><path d="M745.93 54.1 V540" stroke="#9a9a9a" stroke-width="0.5" opacity="0.6"/><path d="M748.71 54.1 V540" stroke="#a0a0a0" stroke-width="0.5" opacity="0.3"/><path d="M745.93 48.4 V54.1" stroke="#6c6c6c" stroke-width="0.55"/><path d="M751.50 54.1 V540" stroke="#9a9a9a" stroke-width="0.5" opacity="0.6"/><path d="M754.29 54.1 V540" stroke="#a0a0a0" stroke-width="0.5" opacity="0.3"/><path d="M751.50 48.4 V54.1" stroke="#6c6c6c" stroke-width="0.55"/><path d="M757.08 54.1 V540" stroke="#9a9a9a" stroke-width="0.5" opacity="0.6"/><path d="M759.86 54.1 V540" stroke="#a0a0a0" stroke-width="0.5" opacity="0.3"/><path d="M757.08 48.4 V54.1" stroke="#6c6c6c" stroke-width="0.55"/><path d="M762.65 54.1 V540" stroke="#9a9a9a" stroke-width="0.5" opacity="0.6"/><path d="M765.44 54.1 V540" stroke="#a0a0a0" stroke-width="0.5" opacity="0.3"/><path d="M762.65 48.4 V54.1" stroke="#6c6c6c" stroke-width="0.55"/><path d="M768.23 54.1 V540" stroke="#9a9a9a" stroke-width="0.5" opacity="0.6"/><path d="M771.01 54.1 V540" stroke="#a0a0a0" stroke-width="0.5" opacity="0.3"/><path d="M768.23 48.4 V54.1" stroke="#6c6c6c" stroke-width="0.55"/><path d="M773.80 54.1 V540" stroke="#9a9a9a" stroke-width="0.5" opacity="0.75"/><path d="M776.59 54.1 V540" stroke="#a0a0a0" stroke-width="0.5" opacity="0.3"/><path d="M773.80 40.2 V54.1" stroke="#747474" stroke-width="0.55"/><path d="M779.38 54.1 V540" stroke="#9a9a9a" stroke-width="0.5" opacity="0.6"/><path d="M782.16 54.1 V540" stroke="#a0a0a0" stroke-width="0.5" opacity="0.3"/><path d="M779.38 48.4 V54.1" stroke="#6c6c6c" stroke-width="0.55"/><path d="M784.95 54.1 V540" stroke="#9a9a9a" stroke-width="0.5" opacity="0.6"/><path d="M787.74 54.1 V540" stroke="#a0a0a0" stroke-width="0.5" opacity="0.3"/><path d="M784.95 48.4 V54.1" stroke="#6c6c6c" stroke-width="0.55"/><path d="M790.52 54.1 V540" stroke="#9a9a9a" stroke-width="0.5" opacity="0.6"/><path d="M793.31 54.1 V540" stroke="#a0a0a0" stroke-width="0.5" opacity="0.3"/><path d="M790.52 48.4 V54.1" stroke="#6c6c6c" stroke-width="0.55"/><path d="M796.10 54.1 V540" stroke="#9a9a9a" stroke-width="0.5" opacity="0.6"/><path d="M798.89 54.1 V540" stroke="#a0a0a0" stroke-width="0.5" opacity="0.3"/><path d="M796.10 48.4 V54.1" stroke="#6c6c6c" stroke-width="0.55"/><path d="M801.68 54.1 V540" stroke="#9a9a9a" stroke-width="0.5" opacity="0.6"/><path d="M804.46 54.1 V540" stroke="#a0a0a0" stroke-width="0.5" opacity="0.3"/><path d="M801.68 48.4 V54.1" stroke="#6c6c6c" stroke-width="0.55"/><path d="M807.25 54.1 V540" stroke="#9a9a9a" stroke-width="0.5" opacity="0.6"/><path d="M810.04 54.1 V540" stroke="#a0a0a0" stroke-width="0.5" opacity="0.3"/><path d="M807.25 48.4 V54.1" stroke="#6c6c6c" stroke-width="0.55"/><path d="M812.83 54.1 V540" stroke="#9a9a9a" stroke-width="0.5" opacity="0.6"/><path d="M815.61 54.1 V540" stroke="#a0a0a0" stroke-width="0.5" opacity="0.3"/><path d="M812.83 48.4 V54.1" stroke="#6c6c6c" stroke-width="0.55"/><path d="M818.40 54.1 V540" stroke="#9a9a9a" stroke-width="0.5" opacity="0.75"/><path d="M821.19 54.1 V540" stroke="#a0a0a0" stroke-width="0.5" opacity="0.3"/><path d="M818.40 40.2 V54.1" stroke="#747474" stroke-width="0.55"/><path d="M823.98 54.1 V540" stroke="#9a9a9a" stroke-width="0.5" opacity="0.6"/><path d="M826.76 54.1 V540" stroke="#a0a0a0" stroke-width="0.5" opacity="0.3"/><path d="M823.98 48.4 V54.1" stroke="#6c6c6c" stroke-width="0.55"/><path d="M829.55 54.1 V540" stroke="#9a9a9a" stroke-width="0.5" opacity="0.6"/><path d="M832.34 54.1 V540" stroke="#a0a0a0" stroke-width="0.5" opacity="0.3"/><path d="M829.55 48.4 V54.1" stroke="#6c6c6c" stroke-width="0.55"/><path d="M835.12 54.1 V540" stroke="#9a9a9a" stroke-width="0.5" opacity="0.6"/><path d="M837.91 54.1 V540" stroke="#a0a0a0" stroke-width="0.5" opacity="0.3"/><path d="M835.12 48.4 V54.1" stroke="#6c6c6c" stroke-width="0.55"/><path d="M840.70 54.1 V540" stroke="#9a9a9a" stroke-width="0.5" opacity="0.6"/><path d="M843.49 54.1 V540" stroke="#a0a0a0" stroke-width="0.5" opacity="0.3"/><path d="M840.70 48.4 V54.1" stroke="#6c6c6c" stroke-width="0.55"/><path d="M846.27 54.1 V540" stroke="#9a9a9a" stroke-width="0.5" opacity="0.6"/><path d="M849.06 54.1 V540" stroke="#a0a0a0" stroke-width="0.5" opacity="0.3"/><path d="M846.27 48.4 V54.1" stroke="#6c6c6c" stroke-width="0.55"/><path d="M851.85 54.1 V540" stroke="#9a9a9a" stroke-width="0.5" opacity="0.6"/><path d="M854.64 54.1 V540" stroke="#a0a0a0" stroke-width="0.5" opacity="0.3"/><path d="M851.85 48.4 V54.1" stroke="#6c6c6c" stroke-width="0.55"/><path d="M857.43 54.1 V540" stroke="#9a9a9a" stroke-width="0.5" opacity="0.6"/><path d="M860.21 54.1 V540" stroke="#a0a0a0" stroke-width="0.5" opacity="0.3"/><path d="M857.43 48.4 V54.1" stroke="#6c6c6c" stroke-width="0.55"/><path d="M863.00 54.1 V540" stroke="#9a9a9a" stroke-width="0.5" opacity="0.75"/><path d="M865.79 54.1 V540" stroke="#a0a0a0" stroke-width="0.5" opacity="0.3"/><path d="M863.00 40.2 V54.1" stroke="#747474" stroke-width="0.55"/><path d="M868.58 54.1 V540" stroke="#9a9a9a" stroke-width="0.5" opacity="0.6"/><path d="M871.36 54.1 V540" stroke="#a0a0a0" stroke-width="0.5" opacity="0.3"/><path d="M868.58 48.4 V54.1" stroke="#6c6c6c" stroke-width="0.55"/><path d="M874.15 54.1 V540" stroke="#9a9a9a" stroke-width="0.5" opacity="0.6"/><path d="M876.94 54.1 V540" stroke="#a0a0a0" stroke-width="0.5" opacity="0.3"/><path d="M874.15 48.4 V54.1" stroke="#6c6c6c" stroke-width="0.55"/><path d="M879.73 54.1 V540" stroke="#9a9a9a" stroke-width="0.5" opacity="0.6"/><path d="M882.51 54.1 V540" stroke="#a0a0a0" stroke-width="0.5" opacity="0.3"/><path d="M879.73 48.4 V54.1" stroke="#6c6c6c" stroke-width="0.55"/><path d="M885.30 54.1 V540" stroke="#9a9a9a" stroke-width="0.5" opacity="0.6"/><path d="M888.09 54.1 V540" stroke="#a0a0a0" stroke-width="0.5" opacity="0.3"/><path d="M885.30 48.4 V54.1" stroke="#6c6c6c" stroke-width="0.55"/><path d="M890.88 54.1 V540" stroke="#9a9a9a" stroke-width="0.5" opacity="0.6"/><path d="M893.66 54.1 V540" stroke="#a0a0a0" stroke-width="0.5" opacity="0.3"/><path d="M890.88 48.4 V54.1" stroke="#6c6c6c" stroke-width="0.55"/><path d="M896.45 54.1 V540" stroke="#9a9a9a" stroke-width="0.5" opacity="0.6"/><path d="M899.24 54.1 V540" stroke="#a0a0a0" stroke-width="0.5" opacity="0.3"/><path d="M896.45 48.4 V54.1" stroke="#6c6c6c" stroke-width="0.55"/><path d="M902.02 54.1 V540" stroke="#9a9a9a" stroke-width="0.5" opacity="0.6"/><path d="M904.81 54.1 V540" stroke="#a0a0a0" stroke-width="0.5" opacity="0.3"/><path d="M902.02 48.4 V54.1" stroke="#6c6c6c" stroke-width="0.55"/><path d="M907.60 54.1 V540" stroke="#9a9a9a" stroke-width="0.5" opacity="0.75"/><path d="M910.39 54.1 V540" stroke="#a0a0a0" stroke-width="0.5" opacity="0.3"/><path d="M907.60 40.2 V54.1" stroke="#747474" stroke-width="0.55"/><path d="M913.18 54.1 V540" stroke="#9a9a9a" stroke-width="0.5" opacity="0.6"/><path d="M915.96 54.1 V540" stroke="#a0a0a0" stroke-width="0.5" opacity="0.3"/><path d="M913.18 48.4 V54.1" stroke="#6c6c6c" stroke-width="0.55"/><path d="M918.75 54.1 V540" stroke="#9a9a9a" stroke-width="0.5" opacity="0.6"/><path d="M921.54 54.1 V540" stroke="#a0a0a0" stroke-width="0.5" opacity="0.3"/><path d="M918.75 48.4 V54.1" stroke="#6c6c6c" stroke-width="0.55"/><path d="M924.33 54.1 V540" stroke="#9a9a9a" stroke-width="0.5" opacity="0.6"/><path d="M927.11 54.1 V540" stroke="#a0a0a0" stroke-width="0.5" opacity="0.3"/><path d="M924.33 48.4 V54.1" stroke="#6c6c6c" stroke-width="0.55"/><path d="M929.90 54.1 V540" stroke="#9a9a9a" stroke-width="0.5" opacity="0.6"/><path d="M932.69 54.1 V540" stroke="#a0a0a0" stroke-width="0.5" opacity="0.3"/><path d="M929.90 48.4 V54.1" stroke="#6c6c6c" stroke-width="0.55"/><path d="M935.48 54.1 V540" stroke="#9a9a9a" stroke-width="0.5" opacity="0.6"/><path d="M938.26 54.1 V540" stroke="#a0a0a0" stroke-width="0.5" opacity="0.3"/><path d="M935.48 48.4 V54.1" stroke="#6c6c6c" stroke-width="0.55"/><path d="M941.05 54.1 V540" stroke="#9a9a9a" stroke-width="0.5" opacity="0.6"/><path d="M943.84 54.1 V540" stroke="#a0a0a0" stroke-width="0.5" opacity="0.3"/><path d="M941.05 48.4 V54.1" stroke="#6c6c6c" stroke-width="0.55"/><path d="M946.62 54.1 V540" stroke="#9a9a9a" stroke-width="0.5" opacity="0.6"/><path d="M949.41 54.1 V540" stroke="#a0a0a0" stroke-width="0.5" opacity="0.3"/><path d="M946.62 48.4 V54.1" stroke="#6c6c6c" stroke-width="0.55"/><path d="M952.20 54.1 V540" stroke="#9a9a9a" stroke-width="0.5" opacity="0.75"/><path d="M954.99 54.1 V540" stroke="#a0a0a0" stroke-width="0.5" opacity="0.3"/><path d="M952.20 40.2 V54.1" stroke="#747474" stroke-width="0.55"/><path d="M190.4 73.22 H957" stroke="#a2a2a2" stroke-width="0.5" opacity="0.6"/><path d="M190.4 92.34 H957" stroke="#a2a2a2" stroke-width="0.5" opacity="0.6"/><path d="M190.4 111.46 H957" stroke="#a2a2a2" stroke-width="0.5" opacity="0.6"/><path d="M190.4 130.58 H957" stroke="#a2a2a2" stroke-width="0.5" opacity="0.6"/><path d="M190.4 149.70 H957" stroke="#a2a2a2" stroke-width="0.5" opacity="0.6"/><path d="M190.4 168.82 H957" stroke="#a2a2a2" stroke-width="0.5" opacity="0.6"/><path d="M190.4 187.94 H957" stroke="#a2a2a2" stroke-width="0.5" opacity="0.6"/><path d="M190.4 207.06 H957" stroke="#a2a2a2" stroke-width="0.5" opacity="0.6"/><path d="M190.4 226.18 H957" stroke="#a2a2a2" stroke-width="0.5" opacity="0.6"/><path d="M190.4 245.30 H957" stroke="#a2a2a2" stroke-width="0.5" opacity="0.6"/><path d="M190.4 264.42 H957" stroke="#a2a2a2" stroke-width="0.5" opacity="0.6"/><path d="M190.4 283.54 H957" stroke="#a2a2a2" stroke-width="0.5" opacity="0.6"/><path d="M190.4 302.66 H957" stroke="#a2a2a2" stroke-width="0.5" opacity="0.6"/><path d="M190.4 321.78 H957" stroke="#a2a2a2" stroke-width="0.5" opacity="0.6"/><path d="M190.4 340.90 H957" stroke="#a2a2a2" stroke-width="0.5" opacity="0.6"/><path d="M190.4 360.02 H957" stroke="#a2a2a2" stroke-width="0.5" opacity="0.6"/><path d="M190.4 379.14 H957" stroke="#a2a2a2" stroke-width="0.5" opacity="0.6"/><path d="M661.5 48.4 V54.1 M750.5 48.4 V54.1 M839.5 48.4 V54.1" stroke="#b06a6a" stroke-width="0.5" stroke-dasharray="1 0.6"/><path d="M191.2 44.2 v3 l1.6 -1.5z" fill="#5a5a5a"/></svg>
<div class="t" style="left:195.70px;transform-origin:0 50%;top:42px;font-size:5.44px;line-height:6px;color:#d6d6d6;font-weight:normal;transform:scaleX(0.9);-webkit-text-stroke:0.19px #d6d6d6;">1</div>
<div class="t" style="left:240.30px;transform-origin:0 50%;top:42px;font-size:5.44px;line-height:6px;color:#d6d6d6;font-weight:normal;transform:scaleX(0.9);-webkit-text-stroke:0.19px #d6d6d6;">9</div>
<div class="t" style="left:284.90px;transform-origin:0 50%;top:42px;font-size:5.44px;line-height:6px;color:#d6d6d6;font-weight:normal;transform:scaleX(0.9);-webkit-text-stroke:0.19px #d6d6d6;">17</div>
<div class="t" style="left:329.50px;transform-origin:0 50%;top:42px;font-size:5.44px;line-height:6px;color:#d6d6d6;font-weight:normal;transform:scaleX(0.9);-webkit-text-stroke:0.19px #d6d6d6;">25</div>
<div class="t" style="left:374.10px;transform-origin:0 50%;top:42px;font-size:5.44px;line-height:6px;color:#d6d6d6;font-weight:normal;transform:scaleX(0.9);-webkit-text-stroke:0.19px #d6d6d6;">33</div>
<div class="t" style="left:418.70px;transform-origin:0 50%;top:42px;font-size:5.44px;line-height:6px;color:#d6d6d6;font-weight:normal;transform:scaleX(0.9);-webkit-text-stroke:0.19px #d6d6d6;">41</div>
<div class="t" style="left:463.30px;transform-origin:0 50%;top:42px;font-size:5.44px;line-height:6px;color:#d6d6d6;font-weight:normal;transform:scaleX(0.9);-webkit-text-stroke:0.19px #d6d6d6;">49</div>
<div class="t" style="left:507.90px;transform-origin:0 50%;top:42px;font-size:5.44px;line-height:6px;color:#d6d6d6;font-weight:normal;transform:scaleX(0.9);-webkit-text-stroke:0.19px #d6d6d6;">57</div>
<div class="t" style="left:552.50px;transform-origin:0 50%;top:42px;font-size:5.44px;line-height:6px;color:#d6d6d6;font-weight:normal;transform:scaleX(0.9);-webkit-text-stroke:0.19px #d6d6d6;">65</div>
<div class="t" style="left:597.10px;transform-origin:0 50%;top:42px;font-size:5.44px;line-height:6px;color:#d6d6d6;font-weight:normal;transform:scaleX(0.9);-webkit-text-stroke:0.19px #d6d6d6;">73</div>
<div class="t" style="left:641.70px;transform-origin:0 50%;top:42px;font-size:5.44px;line-height:6px;color:#d6d6d6;font-weight:normal;transform:scaleX(0.9);-webkit-text-stroke:0.19px #d6d6d6;">81</div>
<div class="t" style="left:686.30px;transform-origin:0 50%;top:42px;font-size:5.44px;line-height:6px;color:#d6d6d6;font-weight:normal;transform:scaleX(0.9);-webkit-text-stroke:0.19px #d6d6d6;">89</div>
<div class="t" style="left:730.90px;transform-origin:0 50%;top:42px;font-size:5.44px;line-height:6px;color:#d6d6d6;font-weight:normal;transform:scaleX(0.9);-webkit-text-stroke:0.19px #d6d6d6;">97</div>
<div class="t" style="left:775.50px;transform-origin:0 50%;top:42px;font-size:5.44px;line-height:6px;color:#d6d6d6;font-weight:normal;transform:scaleX(0.9);-webkit-text-stroke:0.19px #d6d6d6;">105</div>
<div class="t" style="left:820.10px;transform-origin:0 50%;top:42px;font-size:5.44px;line-height:6px;color:#d6d6d6;font-weight:normal;transform:scaleX(0.9);-webkit-text-stroke:0.19px #d6d6d6;">113</div>
<div class="t" style="left:864.70px;transform-origin:0 50%;top:42px;font-size:5.44px;line-height:6px;color:#d6d6d6;font-weight:normal;transform:scaleX(0.9);-webkit-text-stroke:0.19px #d6d6d6;">121</div>
<div class="t" style="left:909.30px;transform-origin:0 50%;top:42px;font-size:5.44px;line-height:6px;color:#d6d6d6;font-weight:normal;transform:scaleX(0.9);-webkit-text-stroke:0.19px #d6d6d6;">129</div>
<div class="t" style="left:953.20px;transform-origin:0 50%;top:42px;font-size:5.44px;line-height:6px;color:#d6d6d6;font-weight:normal;transform:scaleX(0.9);-webkit-text-stroke:0.19px #d6d6d6;">10</div>
<div style="left:956.60px;top:40.20px;width:1.80px;height:500.00px;background:#8c8c8c;"></div>
<div style="left:958.40px;top:40.20px;width:1.60px;height:500.00px;background:#6a6a6a;"></div>
<svg width="960" height="540"><rect x="483.85" y="54.45" width="88.70" height="18.42" rx="1.6" fill="#21a94b" stroke="#125c29" stroke-width="0.5"/><path d="M484.80 65.92 h2.29 M487.37 66.17 h3.79 M487.67 67.27 h3.03 M491.67 67.82 h0.91 M491.97 68.92 h0.73 M492.83 65.93 h3.80 M493.13 67.03 h3.04 M497.73 64.68 h4.08 M502.08 63.96 h2.83 M506.05 65.63 h3.91 M510.26 67.20 h1.61 M510.56 68.30 h1.29 M513.06 66.90 h2.55 M513.36 68.00 h2.04 M516.21 67.52 h3.32 M516.51 68.62 h2.65 M519.69 67.08 h1.98 M522.03 65.46 h3.44 M526.64 64.76 h3.60 M530.80 65.17 h2.77 M533.78 64.57 h1.61 M534.08 65.67 h1.29 M536.02 64.02 h2.62 M539.15 64.57 h2.65 M542.04 66.05 h1.00 M542.34 67.15 h0.80 M543.06 66.00 h1.62 M545.08 66.32 h4.14 M549.24 65.03 h4.09 M553.79 65.47 h2.92 M554.09 66.57 h2.34 M557.26 65.32 h0.81 M557.56 66.42 h0.65 M558.70 64.82 h3.90 M563.32 65.23 h1.68 M563.62 66.33 h1.35 M565.19 65.80 h4.05 M569.72 65.00 h0.94 " stroke="#ffffff" stroke-width="0.72" fill="none" opacity="0.78"/><rect x="573.05" y="54.45" width="88.20" height="18.42" rx="1.6" fill="#21a94b" stroke="#125c29" stroke-width="0.5"/><path d="M574.00 65.96 h4.5 M574.00 67.26 h4.5 M579.00 67.86 h5.94 M588.64 67.86 h8.97 M589.05 68.96 h4.49 M601.12 67.36 h8.17 M602.12 68.46 h5.45 M613.65 66.66 h7.79 M614.68 65.56 h4.83 M624.70 65.86 h7.56 M635.74 67.36 h5.54 M637.08 68.46 h3.24 M645.58 66.66 h12.08 M574.00 65.41 L575.84 65.06 M576.48 66.80 h1.69 M576.48 66.80 L578.17 64.41 M579.03 64.97 h4.03 M583.75 65.53 h1.78 M583.75 65.53 L585.54 65.36 M586.24 64.39 h1.06 M587.40 63.93 h2.72 M587.40 63.93 L590.12 63.44 M590.23 65.78 L594.24 64.18 M594.28 64.12 h0.90 M595.57 63.53 L597.98 64.27 M599.04 65.28 h2.75 M599.04 65.28 L601.78 65.98 M602.01 65.93 L604.27 64.39 M604.65 66.14 L606.69 65.01 M607.46 66.55 L611.43 65.87 M611.76 65.17 L613.26 65.71 M613.42 65.15 L614.44 63.83 M614.47 65.58 L615.68 65.42 M616.47 66.55 h2.20 M616.47 66.55 L618.67 67.41 M619.73 68.31 L623.86 66.18 M624.73 67.35 h1.23 M624.73 67.35 L625.97 65.00 M626.91 65.10 L630.35 64.43 M631.28 65.62 L635.13 66.72 M635.97 66.06 h0.97 M635.97 66.06 L636.93 67.09 M637.79 67.13 h1.11 M637.79 67.13 L638.91 66.61 M639.95 67.52 L643.32 66.11 M644.25 67.34 L645.60 66.47 M649.62 66.09 h3.76 M653.62 64.79 h1.94 M653.62 64.79 L655.56 66.58 M656.57 66.52 h3.29 M656.57 66.52 L659.86 67.70 " stroke="#ffffff" stroke-width="0.72" fill="none" opacity="0.78"/><rect x="661.75" y="54.45" width="88.50" height="18.42" rx="1.6" fill="#21a94b" stroke="#125c29" stroke-width="0.5"/><path d="M662.70 67.99 h4.15 M663.00 69.09 h3.32 M667.36 67.76 h3.67 M667.66 68.86 h2.93 M671.47 67.88 h3.64 M675.80 67.12 h1.46 M677.82 68.24 h3.65 M681.85 67.80 h2.74 M682.15 68.90 h2.19 M685.62 67.94 h2.73 M685.92 69.04 h2.18 M689.45 67.49 h1.59 M691.42 65.88 h3.96 M696.36 64.90 h1.85 M696.66 66.00 h1.48 M698.63 65.53 h4.14 M703.40 65.26 h3.03 M703.70 66.36 h2.43 M706.53 64.53 h0.94 M707.62 64.24 h2.19 M707.92 65.34 h1.75 M710.65 64.58 h2.25 M710.95 65.68 h1.80 M713.35 64.53 h1.34 M713.65 65.63 h1.07 M715.64 65.83 h3.50 M715.94 66.93 h2.80 M719.85 66.18 h3.50 M720.15 67.28 h2.80 M724.41 64.92 h1.41 M724.71 66.02 h1.13 M726.11 65.73 h2.28 M728.56 65.24 h0.94 M728.86 66.34 h0.75 M729.98 67.14 h4.04 M730.28 68.24 h3.23 M734.41 68.08 h3.47 M738.91 68.09 h3.89 M743.16 68.64 h2.74 M746.72 68.18 h2.78 " stroke="#ffffff" stroke-width="0.72" fill="none" opacity="0.78"/><rect x="750.75" y="54.45" width="88.50" height="18.42" rx="1.6" fill="#21a94b" stroke="#125c29" stroke-width="0.5"/><path d="M751.70 65.64 h2.99 M755.14 64.81 h1.49 M757.29 66.54 h1.92 M759.93 67.03 h4.00 M760.23 68.13 h3.20 M764.54 67.87 h3.21 M764.84 68.97 h2.57 M768.12 66.98 h2.52 M771.70 66.56 h1.85 M774.60 68.08 h2.83 M774.90 69.18 h2.26 M777.91 68.59 h2.13 M778.21 69.69 h1.71 M780.31 67.33 h1.63 M780.61 68.43 h1.30 M782.41 66.90 h2.03 M785.34 66.87 h3.34 M789.25 67.26 h1.44 M789.55 68.36 h1.15 M791.23 65.87 h2.07 M793.35 64.84 h1.55 M794.98 64.53 h3.04 M795.28 65.63 h2.43 M798.92 64.40 h2.45 M799.22 65.50 h1.96 M801.65 65.04 h2.20 M803.90 65.89 h2.69 M806.74 65.88 h1.07 M808.01 65.56 h1.35 M809.75 65.17 h1.47 M811.68 66.72 h1.56 M814.08 65.65 h2.31 M814.38 66.75 h1.85 M816.63 65.66 h3.84 M816.93 66.76 h3.07 M821.00 64.63 h2.66 M823.85 65.82 h1.73 M824.15 66.92 h1.38 M826.75 66.56 h1.52 M827.05 67.66 h1.22 M828.29 65.22 h1.49 M830.55 64.85 h1.54 M830.85 65.95 h1.23 M832.68 64.49 h4.15 M832.98 65.59 h3.32 M836.99 66.50 h1.51 " stroke="#ffffff" stroke-width="0.72" fill="none" opacity="0.78"/><rect x="839.75" y="54.45" width="89.00" height="18.42" rx="1.6" fill="#21a94b" stroke="#125c29" stroke-width="0.5"/><path d="M840.70 65.96 h4.5 M840.70 67.26 h4.5 M845.70 67.36 h9.01 M847.26 68.46 h5.20 M858.55 67.36 h11.91 M859.74 66.26 h6.01 M871.80 66.66 h5.12 M878.43 65.86 h15.13 M879.63 66.96 h9.36 M897.35 67.86 h8.51 M910.32 65.86 h15.08 M911.96 64.76 h6.58 M840.70 65.28 h3.16 M840.70 65.28 L843.86 63.17 M844.02 64.14 L846.28 65.12 M849.78 65.83 h3.88 M849.78 65.83 L853.66 68.16 M854.07 66.84 h2.57 M856.78 66.61 L860.43 68.99 M860.78 67.68 L864.08 69.39 M864.45 69.92 h3.14 M864.45 69.92 L867.60 70.47 M868.58 68.87 h2.22 M868.58 68.87 L870.79 69.69 M871.58 69.22 h1.55 M873.97 68.41 L876.99 65.71 M877.37 65.16 h2.47 M880.39 64.60 L883.91 64.15 M888.04 65.97 h1.70 M888.04 65.97 L889.74 64.48 M890.56 64.67 L894.33 66.20 M895.31 65.36 L898.96 64.82 M899.10 65.55 L903.04 67.50 M903.25 67.76 h2.15 M903.25 67.76 L905.41 68.14 M908.96 67.30 h2.68 M908.96 67.30 L911.64 69.79 M912.76 69.33 h2.84 M912.76 69.33 L915.59 66.65 M916.71 67.30 h1.92 M916.71 67.30 L918.63 69.19 M919.31 67.49 h3.31 M919.31 67.49 L922.63 70.14 M923.25 69.14 h1.94 M923.25 69.14 L925.19 67.22 M925.73 67.98 L927.80 70.35 " stroke="#ffffff" stroke-width="0.72" fill="none" opacity="0.78"/><rect x="244.25" y="73.57" width="44.00" height="18.42" rx="1.6" fill="#1fa670" stroke="#115b3d" stroke-width="0.5"/><path d="M245.20 88.99 h0.9 M246.80 88.99 h0.9 M248.40 88.99 h0.9 M250.00 88.99 h0.9 M251.60 88.99 h0.9 M253.20 88.99 h0.9 M254.80 88.99 h0.9 M256.40 88.99 h0.9 M258.00 88.99 h0.9 M259.60 88.49 h0.9 M261.20 88.99 h0.9 M262.80 88.99 h0.9 M264.40 88.49 h0.9 M266.00 88.99 h0.9 M267.60 88.99 h0.9 M269.20 88.99 h0.9 M270.80 88.99 h0.9 M272.40 88.49 h0.9 M274.00 88.99 h0.9 M275.60 88.99 h0.9 M277.20 88.99 h0.9 M278.80 88.99 h0.9 M280.40 88.99 h0.9 M282.00 88.49 h0.9 M283.60 88.99 h0.9 M285.20 88.99 h0.9 M285.90 86.19 h0.8" stroke="#ffffff" stroke-width="0.6" fill="none"/><rect x="288.75" y="73.57" width="43.80" height="18.42" rx="1.6" fill="#1fa670" stroke="#115b3d" stroke-width="0.5"/><path d="M289.70 84.98 h3.61 M294.11 84.98 h5.08 M299.99 84.98 h2.89 M303.68 84.98 h4.64 M309.12 84.98 h4.20 M314.13 84.98 h2.68 M317.61 84.98 h2.91 M321.32 84.98 h2.67 M324.79 84.98 h5.64 " stroke="#ffffff" stroke-width="0.6" fill="none" stroke-dasharray="1.1 0.35"/><rect x="483.85" y="73.57" width="88.70" height="18.42" rx="1.6" fill="#1fa670" stroke="#115b3d" stroke-width="0.5"/><path d="M484.60 86.58 L490.00 86.58 M490.60 86.58 L493.00 86.88 M493.60 87.18 L495.00 87.88 M495.60 88.58 L500.00 88.68 M503.60 85.58 L509.00 85.48 M509.60 85.38 L513.00 84.68 M518.60 83.18 L523.00 83.48 M523.60 83.78 L528.00 85.08 M528.60 86.38 L535.00 86.43 M535.60 86.48 L539.00 87.33 M539.60 88.18 L545.00 88.38 M545.60 88.58 L553.00 88.38 M559.60 88.18 L562.00 87.78 M562.60 87.38 L571.00 87.38 " stroke="#ffffff" stroke-width="0.8" fill="none"/><rect x="884.75" y="73.57" width="44.00" height="18.42" rx="1.6" fill="#1fa670" stroke="#115b3d" stroke-width="0.5"/><path d="M885.70 89.39 H892.45 M892.75 88.84 H899.50 M899.80 88.29 H906.55 M906.85 87.74 H913.60 M913.90 87.19 H920.65 M920.95 84.44 H927.70 " stroke="#ffffff" stroke-width="0.6" fill="none"/><rect x="661.75" y="92.69" width="88.50" height="18.42" rx="1.6" fill="#22a640" stroke="#125b23" stroke-width="0.5"/><path d="M662.70 108.20 h2.35 M665.76 108.71 h2.35 M668.83 108.24 h1.80 M671.27 107.68 h1.79 M673.84 107.68 h1.86 M675.72 107.88 h2.68 M679.13 107.95 h1.63 M681.28 107.63 h0.92 M682.46 107.74 h1.80 M684.38 106.75 h2.38 M687.00 107.77 h1.33 M688.52 107.34 h0.84 M689.38 106.86 h1.29 M689.38 109.31 h1.4 M690.91 107.02 h1.45 M692.59 106.82 h1.48 M694.81 107.34 h1.84 M696.66 106.68 h2.95 M699.82 107.42 h2.77 M699.82 109.31 h1.4 M702.91 107.06 h2.16 M705.87 105.92 h2.89 M709.18 106.27 h1.80 M711.12 106.40 h1.33 M713.00 106.94 h2.69 M713.00 109.31 h1.4 M715.80 106.43 h0.96 M716.84 106.38 h2.83 M720.45 105.64 h1.22 M720.45 109.31 h1.4 M721.95 106.41 h2.42 M724.54 105.76 h2.21 M727.28 106.24 h2.88 M727.28 109.31 h1.4 M730.90 105.12 h2.28 M730.90 109.31 h1.4 M733.79 105.21 h1.17 M735.50 105.03 h1.83 M737.77 105.86 h1.05 M739.47 105.92 h2.39 M741.93 104.74 h2.99 M745.12 105.21 h1.52 M747.29 104.70 h2.21 " stroke="#ffffff" stroke-width="0.7" fill="none" opacity="0.8"/><rect x="750.75" y="92.69" width="88.50" height="18.42" rx="1.6" fill="#22a640" stroke="#125b23" stroke-width="0.5"/><path d="M751.70 108.07 h2.99 M754.80 107.47 h2.98 M758.37 107.78 h1.53 M760.03 107.84 h1.98 M762.40 108.00 h1.46 M762.40 109.31 h1.4 M763.90 107.57 h1.29 M765.25 108.37 h2.59 M767.92 107.68 h1.84 M769.98 107.42 h1.64 M772.41 107.32 h1.13 M773.65 107.73 h2.80 M776.81 107.19 h1.54 M779.14 107.46 h2.41 M781.93 107.16 h2.70 M785.07 107.33 h1.05 M786.34 106.50 h2.25 M788.82 106.42 h1.16 M790.67 106.39 h1.41 M792.56 106.63 h1.88 M794.87 106.12 h2.64 M798.30 106.75 h2.79 M801.21 106.65 h1.64 M803.15 107.01 h2.34 M806.22 106.44 h1.16 M807.61 106.22 h1.09 M808.71 106.14 h2.38 M811.71 105.67 h2.70 M811.71 109.31 h1.4 M814.88 105.99 h0.89 M816.57 105.27 h1.08 M817.73 105.28 h1.06 M818.90 105.79 h1.79 M821.10 105.53 h2.68 M821.10 109.31 h1.4 M824.48 104.95 h2.78 M827.30 105.67 h1.73 M827.30 109.31 h1.4 M829.14 105.41 h2.94 M832.24 105.22 h1.50 M834.16 105.87 h1.87 M834.16 109.31 h1.4 M836.13 105.79 h2.02 " stroke="#ffffff" stroke-width="0.7" fill="none" opacity="0.8"/><rect x="929.65" y="92.69" width="10.10" height="18.42" rx="1.6" fill="#22a640" stroke="#125b23" stroke-width="0.5"/><path d="M930.60 103.10 H938.00 M937.00 108.71 h1" stroke="#ffffff" stroke-width="0.6" fill="none"/><rect x="244.25" y="188.29" width="44.00" height="18.42" rx="1.6" fill="#8d3a24" stroke="#4d1f13" stroke-width="0.5"/><path d="M245.20 199.19 h3.91 M245.50 200.29 h3.12 M249.64 198.94 h1.93 M249.94 200.04 h1.54 M251.60 198.17 h1.72 M254.33 199.56 h4.12 M254.63 200.66 h3.29 M258.88 198.80 h3.85 M259.18 199.90 h3.08 M263.36 200.31 h1.78 M265.80 200.92 h2.43 M266.10 202.02 h1.94 M268.64 200.40 h3.47 M272.20 201.39 h2.81 M275.28 201.07 h0.82 M276.18 200.78 h1.62 M278.10 199.24 h1.94 M280.38 200.45 h4.05 M285.20 199.94 h2.30 M285.50 201.04 h1.84 " stroke="#ffffff" stroke-width="0.72" fill="none" opacity="0.78"/><rect x="288.75" y="188.29" width="44.00" height="18.42" rx="1.6" fill="#8d3a24" stroke="#4d1f13" stroke-width="0.5"/><path d="M289.70 201.11 h1.29 M290.00 202.21 h1.03 M291.96 200.91 h2.29 M292.26 202.01 h1.83 M295.07 202.12 h1.42 M297.46 200.40 h3.07 M297.76 201.50 h2.46 M301.54 201.00 h2.39 M304.94 199.76 h0.96 M306.76 201.34 h2.41 M309.82 201.25 h1.18 M310.12 202.35 h0.95 M312.08 202.15 h2.04 M314.60 200.96 h0.94 M315.80 201.87 h3.04 M319.41 200.47 h3.53 M323.00 199.00 h0.93 M324.37 199.88 h3.37 M328.74 201.11 h3.26 M329.04 202.21 h2.61 " stroke="#ffffff" stroke-width="0.72" fill="none" opacity="0.78"/><rect x="333.25" y="188.29" width="44.00" height="18.42" rx="1.6" fill="#8d3a24" stroke="#4d1f13" stroke-width="0.5"/><path d="M334.20 200.54 h3.51 M338.12 199.21 h1.02 M340.03 199.60 h2.50 M342.95 200.61 h0.94 M344.61 202.06 h2.07 M344.91 203.16 h1.66 M347.65 200.53 h3.58 M347.95 201.63 h2.86 M351.48 199.60 h2.28 M354.58 198.90 h3.42 M358.43 199.02 h1.93 M358.73 200.12 h1.54 M360.43 199.30 h3.06 M364.54 200.36 h3.46 M364.84 201.46 h2.77 M368.81 201.66 h1.42 M370.30 201.18 h3.12 M370.60 202.28 h2.49 M373.86 199.62 h2.64 " stroke="#ffffff" stroke-width="0.72" fill="none" opacity="0.78"/><rect x="377.75" y="188.29" width="43.60" height="18.42" rx="1.6" fill="#8d3a24" stroke="#4d1f13" stroke-width="0.5"/><path d="M378.70 200.09 h2.39 M381.52 199.01 h2.73 M381.82 200.11 h2.18 M384.40 198.33 h2.29 M384.70 199.43 h1.83 M386.88 198.06 h4.18 M387.18 199.16 h3.34 M391.88 199.98 h2.21 M392.18 201.08 h1.77 M394.73 200.58 h2.12 M395.03 201.68 h1.69 M396.92 199.79 h3.29 M401.07 201.31 h3.74 M405.08 201.21 h1.54 M406.71 201.06 h3.49 M411.27 201.44 h2.96 M411.57 202.54 h2.36 M414.66 201.28 h1.73 M416.89 201.58 h3.71 " stroke="#ffffff" stroke-width="0.72" fill="none" opacity="0.78"/><rect x="427.65" y="188.29" width="44.60" height="18.42" rx="1.6" fill="#8d3a24" stroke="#4d1f13" stroke-width="0.5"/><path d="M428.60 200.23 h1.47 M428.90 201.33 h1.18 M430.25 201.12 h1.53 M430.55 202.22 h1.22 M432.26 200.82 h3.31 M435.71 201.74 h2.93 M438.74 202.36 h3.45 M442.63 202.50 h3.83 M447.24 201.21 h3.83 M447.54 202.31 h3.06 M451.78 201.47 h1.21 M453.57 200.36 h1.48 M455.88 199.90 h1.45 M457.66 200.26 h3.13 M461.88 201.14 h1.31 M464.03 201.90 h1.91 M464.33 203.00 h1.52 M466.60 201.26 h3.42 M470.14 202.42 h1.36 M470.44 203.52 h1.09 " stroke="#ffffff" stroke-width="0.72" fill="none" opacity="0.78"/><rect x="483.85" y="188.29" width="88.70" height="18.42" rx="1.6" fill="#8d3a24" stroke="#4d1f13" stroke-width="0.5"/><path d="M484.80 199.80 h4.5 M484.80 201.10 h4.5 M489.80 201.20 h14.85 M506.29 199.70 h13.29 M506.79 200.80 h8.45 M521.72 201.70 h7.63 M532.20 200.50 h9.11 M534.15 201.60 h5.77 M543.11 199.70 h10.82 M544.87 200.80 h5.93 M556.69 201.20 h8.16 M565.76 200.50 h6.04 M567.67 201.60 h3.81 M484.80 201.82 h3.30 M484.80 201.82 L488.10 201.46 M488.54 200.42 h1.58 M491.25 199.85 L494.00 199.80 M496.77 199.78 L500.22 201.87 M500.45 201.17 L501.61 201.04 M501.84 200.54 h3.54 M501.84 200.54 L505.38 200.91 M506.21 200.87 L509.84 199.83 M510.85 201.07 L514.25 202.35 M514.61 202.95 h2.25 M516.94 202.71 L519.98 203.16 M521.12 202.81 L525.06 200.54 M525.99 201.41 L526.86 202.05 M527.01 200.01 L528.50 200.23 M528.57 199.94 L529.88 198.22 M531.06 197.74 h1.12 M531.06 197.74 L532.18 196.13 M533.04 198.67 L536.49 196.57 M537.38 198.73 L538.47 199.85 M541.59 201.02 L545.04 201.49 M546.01 201.37 h1.79 M546.01 201.37 L547.81 203.06 M548.42 202.27 L549.59 204.25 M550.66 203.85 L553.23 203.77 M553.54 203.37 L554.42 201.84 M554.44 200.44 L557.33 201.59 M557.44 201.84 h1.72 M557.44 201.84 L559.16 203.71 M565.26 201.26 h1.13 M565.26 201.26 L566.38 203.05 M567.18 201.04 h2.13 M567.18 201.04 L569.31 203.00 " stroke="#ffffff" stroke-width="0.72" fill="none" opacity="0.78"/><rect x="573.05" y="188.29" width="88.20" height="18.42" rx="1.6" fill="#8d3a24" stroke="#4d1f13" stroke-width="0.5"/><path d="M574.00 201.10 h2.48 M576.54 200.64 h4.04 M581.03 202.01 h0.82 M582.00 201.06 h2.27 M584.61 201.58 h1.62 M586.66 201.54 h3.61 M586.96 202.64 h2.89 M590.97 201.85 h1.06 M591.27 202.95 h0.85 M592.40 200.80 h1.60 M595.19 201.70 h1.19 M597.52 199.88 h2.37 M601.02 198.87 h2.40 M603.72 197.94 h3.80 M608.65 197.91 h0.81 M609.75 197.48 h3.23 M610.05 198.58 h2.58 M613.79 199.90 h4.20 M614.09 201.00 h3.36 M618.05 199.22 h2.81 M621.29 199.61 h2.49 M621.59 200.71 h1.99 M624.14 200.85 h2.48 M624.44 201.95 h1.99 M626.77 200.88 h1.38 M628.98 202.23 h2.12 M631.67 201.57 h1.71 M633.97 201.72 h1.65 M634.27 202.82 h1.32 M636.38 200.25 h1.44 M638.99 199.66 h3.16 M642.98 199.18 h1.99 M643.28 200.28 h1.59 M645.02 200.54 h3.64 M648.77 200.49 h4.07 M653.71 199.81 h3.63 M654.01 200.91 h2.90 M657.49 199.78 h1.23 M659.50 200.07 h1.00 M659.80 201.17 h0.80 " stroke="#ffffff" stroke-width="0.72" fill="none" opacity="0.78"/><rect x="750.75" y="188.29" width="88.50" height="18.42" rx="1.6" fill="#6f6f6f" stroke="#3d3d3d" stroke-width="0.5"/><path d="M751.70 199.80 h4.5 M751.70 201.10 h4.5 M756.70 200.50 h13.30 M773.01 200.50 h10.62 M773.52 201.60 h5.04 M786.98 201.70 h8.08 M788.89 200.60 h4.73 M798.63 201.70 h7.20 M800.31 200.60 h3.19 M810.79 201.70 h14.44 M828.68 200.50 h9.82 M830.50 199.40 h8.28 M751.70 201.02 h3.58 M751.70 201.02 L755.28 200.92 M756.41 201.86 h2.26 M758.69 200.39 h2.01 M758.69 200.39 L760.70 197.64 M760.70 198.38 h2.10 M765.74 199.88 L768.83 197.57 M769.38 198.08 L772.92 196.53 M778.33 199.28 L782.22 197.03 M783.16 198.18 L784.64 197.96 M785.59 197.43 h1.14 M785.59 197.43 L786.73 196.00 M790.82 199.40 h2.13 M793.54 201.09 h3.04 M793.54 201.09 L796.58 200.87 M797.20 200.42 h1.17 M797.20 200.42 L798.37 202.22 M798.76 202.62 L801.47 201.70 M805.49 203.06 L809.66 204.31 M810.41 204.31 L813.07 204.31 M814.08 201.86 h2.16 M814.08 201.86 L816.24 200.74 M816.59 200.46 h4.17 M816.59 200.46 L820.76 203.11 M821.46 201.75 h3.72 M826.03 200.00 L827.07 200.36 M832.91 199.96 L834.68 201.02 " stroke="#ffffff" stroke-width="0.72" fill="none" opacity="0.78"/><circle cx="753.70" cy="191.89" r="1.5" fill="#f0703a"/><rect x="839.75" y="188.29" width="89.00" height="18.42" rx="1.6" fill="#8d3a24" stroke="#4d1f13" stroke-width="0.5"/><path d="M840.70 199.80 h4.5 M840.70 201.10 h4.5 M845.70 201.70 h13.96 M862.31 199.70 h8.33 M872.78 201.70 h12.05 M874.49 200.60 h10.74 M887.42 199.70 h8.45 M896.59 201.20 h12.86 M912.37 201.70 h13.40 M843.04 200.04 h3.69 M843.04 200.04 L846.73 201.51 M847.47 200.78 h3.32 M847.47 200.78 L850.80 198.88 M851.12 198.12 L852.86 199.87 M853.20 199.48 L855.40 197.43 M855.69 198.84 h2.63 M855.69 198.84 L858.33 197.13 M858.51 198.83 h1.83 M864.06 198.93 h3.35 M864.06 198.93 L867.41 201.36 M868.24 202.03 h3.37 M868.24 202.03 L871.61 201.76 M871.66 201.63 h2.55 M871.66 201.63 L874.21 202.29 M874.93 201.77 h2.78 M874.93 201.77 L877.71 200.45 M878.31 201.92 h1.31 M878.31 201.92 L879.61 200.33 M879.78 200.28 h1.19 M879.78 200.28 L880.97 202.37 M881.12 202.28 L883.71 203.39 M884.90 202.08 L886.94 200.67 M887.69 199.36 L889.85 201.43 M890.63 201.61 h2.20 M890.63 201.61 L892.83 200.66 M893.54 199.89 h3.50 M893.54 199.89 L897.04 197.74 M901.55 198.97 L904.07 199.36 M905.12 200.82 h3.56 M905.12 200.82 L908.68 199.13 M917.84 200.32 h1.33 M919.83 199.22 L923.69 201.50 M923.85 202.34 h0.82 M923.85 202.34 L924.67 199.88 M924.73 199.58 h3.27 M924.73 199.58 L928.00 198.48 " stroke="#ffffff" stroke-width="0.72" fill="none" opacity="0.78"/><rect x="929.25" y="188.29" width="15.90" height="18.42" rx="1.6" fill="#8d3a24" stroke="#4d1f13" stroke-width="0.5"/><path d="M930.20 198.70 H943.40 M942.40 204.31 h1" stroke="#ffffff" stroke-width="0.6" fill="none"/><rect x="216.05" y="207.41" width="27.30" height="18.42" rx="1.6" fill="#1a8d48" stroke="#0e4d27" stroke-width="0.5"/><path d="M217.00 219.42 H242.60" stroke="#ffffff" stroke-width="0.5" fill="none" opacity="0.85"/><rect x="661.75" y="207.41" width="88.50" height="18.42" rx="1.6" fill="#1a8d48" stroke="#0e4d27" stroke-width="0.5"/><path d="M662.70 219.85 h6.58 M662.70 221.35 h6.58 M670.42 220.09 h4.39 M670.42 221.59 h4.39 M670.42 223.09 h4.39 M677.08 217.71 h5.50 M677.08 219.21 h5.50 M677.08 220.71 h5.50 M684.39 217.54 h6.58 M684.39 219.04 h6.58 M693.17 217.70 h4.97 M693.17 219.20 h4.97 M699.11 220.44 h4.85 M699.11 221.94 h4.85 M699.11 223.44 h4.85 M705.85 217.65 h3.33 M705.85 219.15 h3.33 M710.31 219.91 h6.69 M710.31 221.41 h6.69 M717.98 219.52 h5.58 M717.98 221.02 h5.58 M724.63 218.89 h6.70 M724.63 220.39 h6.70 M724.63 221.89 h6.70 M732.24 220.07 h3.33 M732.24 221.57 h3.33 M737.54 218.97 h3.12 M737.54 220.47 h3.12 M742.30 218.43 h3.14 M742.30 219.93 h3.14 M742.30 221.43 h3.14 M747.28 220.25 h2.22 M747.28 221.75 h2.22 " stroke="#ffffff" stroke-width="0.42" fill="none" opacity="0.8"/><rect x="750.75" y="207.41" width="88.50" height="18.42" rx="1.6" fill="#1a8d48" stroke="#0e4d27" stroke-width="0.5"/><path d="M751.70 219.71 h4.54 M751.70 221.21 h4.54 M751.70 222.71 h4.54 M757.28 220.07 h5.45 M757.28 221.57 h5.45 M764.51 218.21 h6.69 M764.51 219.71 h6.69 M764.51 221.21 h6.69 M772.36 218.78 h3.26 M772.36 220.28 h3.26 M777.94 218.79 h6.44 M777.94 220.29 h6.44 M785.14 219.00 h4.23 M785.14 220.50 h4.23 M791.69 217.91 h4.94 M791.69 219.41 h4.94 M791.69 220.91 h4.94 M797.44 219.34 h3.80 M797.44 220.84 h3.80 M802.76 218.08 h3.97 M802.76 219.58 h3.97 M809.22 218.30 h3.43 M809.22 219.80 h3.43 M814.30 218.87 h6.77 M814.30 220.37 h6.77 M814.30 221.87 h6.77 M823.44 218.44 h3.95 M823.44 219.94 h3.95 M829.29 218.60 h3.94 M829.29 220.10 h3.94 M829.29 221.60 h3.94 M833.98 219.80 h4.52 M833.98 221.30 h4.52 " stroke="#ffffff" stroke-width="0.42" fill="none" opacity="0.8"/><rect x="884.75" y="207.41" width="44.00" height="18.42" rx="1.6" fill="#1a8d48" stroke="#0e4d27" stroke-width="0.5"/><path d="M885.70 218.98 h6.11 M885.70 220.48 h6.11 M885.70 221.98 h6.11 M893.09 218.97 h3.03 M893.09 220.47 h3.03 M893.09 221.97 h3.03 M896.62 218.05 h6.54 M896.62 219.55 h6.54 M896.62 221.05 h6.54 M904.47 219.81 h6.81 M904.47 221.31 h6.81 M911.82 219.05 h6.42 M911.82 220.55 h6.42 M911.82 222.05 h6.42 M920.02 219.54 h3.90 M920.02 221.04 h3.90 M925.86 219.38 h2.14 M925.86 220.88 h2.14 " stroke="#ffffff" stroke-width="0.42" fill="none" opacity="0.8"/><rect x="198.05" y="226.53" width="45.30" height="18.42" rx="1.6" fill="#8d3a24" stroke="#4d1f13" stroke-width="0.5"/><path d="M199.00 238.04 h4.5 M199.00 239.34 h4.5 M204.00 239.44 h8.33 M216.63 238.74 h9.15 M229.81 238.74 h12.20 M230.81 239.84 h9.98 M199.00 239.54 h1.77 M199.00 239.54 L200.77 238.47 M201.00 237.99 L203.12 239.11 M203.99 237.80 L205.61 238.77 M206.09 239.48 h2.27 M206.09 239.48 L208.37 241.40 M209.07 239.38 L211.84 236.72 M211.94 236.68 h1.75 M214.45 237.61 h3.64 M214.45 237.61 L218.09 238.84 M218.17 239.39 h3.40 M218.17 239.39 L221.58 240.08 M223.87 239.40 h1.74 M223.87 239.40 L225.61 237.66 M226.37 236.57 h1.95 M226.37 236.57 L228.32 238.21 M228.62 239.63 h3.99 M228.62 239.63 L232.62 237.56 M233.17 239.19 h1.72 M233.17 239.19 L234.89 238.43 M238.53 238.57 L240.15 236.74 M241.27 237.46 L242.60 236.13 " stroke="#ffffff" stroke-width="0.72" fill="none" opacity="0.78"/><rect x="243.85" y="226.53" width="44.40" height="18.42" rx="1.6" fill="#8d3a24" stroke="#4d1f13" stroke-width="0.5"/><path d="M244.80 238.04 h4.5 M244.80 239.34 h4.5 M249.80 239.44 h12.97 M251.53 240.54 h8.36 M265.48 239.44 h11.36 M267.05 238.34 h6.98 M277.68 237.94 h6.56 M278.06 239.04 h3.04 M244.80 238.28 h2.47 M244.80 238.28 L247.27 240.57 M247.70 239.92 h3.21 M247.70 239.92 L250.92 242.29 M250.94 240.76 h1.22 M250.94 240.76 L252.16 239.54 M252.48 238.22 h1.30 M252.48 238.22 L253.78 239.10 M254.15 237.81 L255.45 239.86 M255.91 240.32 L259.75 238.68 M260.07 237.49 L261.60 239.54 M261.92 240.11 h3.09 M266.20 239.02 h1.90 M266.20 239.02 L268.10 240.94 M268.33 241.43 L269.54 239.72 M270.05 239.71 L271.18 240.79 M272.25 239.98 L274.01 242.19 M274.95 240.30 L278.43 239.12 M279.63 238.38 L281.68 239.60 M282.39 240.23 h0.86 M282.39 240.23 L283.25 242.20 M284.04 242.04 h2.58 " stroke="#ffffff" stroke-width="0.72" fill="none" opacity="0.78"/><rect x="288.75" y="226.53" width="44.00" height="18.42" rx="1.6" fill="#8d3a24" stroke="#4d1f13" stroke-width="0.5"/><path d="M289.70 238.04 h4.5 M289.70 239.34 h4.5 M294.70 238.74 h8.51 M295.37 239.84 h6.42 M307.95 237.94 h8.29 M308.42 239.04 h4.37 M317.38 239.44 h11.70 M318.58 240.54 h10.22 M289.70 237.40 L293.71 238.57 M294.02 238.81 h2.57 M297.73 239.94 h3.05 M301.54 239.44 L304.98 238.58 M305.46 239.50 L307.29 241.73 M307.58 239.21 h3.99 M314.61 239.08 h3.84 M318.98 240.38 h2.53 M318.98 240.38 L321.51 242.55 M322.01 240.63 h3.76 M322.01 240.63 L325.77 240.57 M326.36 239.32 h1.44 M326.36 239.32 L327.80 239.57 M328.53 239.39 h3.41 M328.53 239.39 L331.93 240.90 " stroke="#ffffff" stroke-width="0.72" fill="none" opacity="0.78"/><rect x="333.25" y="226.53" width="44.00" height="18.42" rx="1.6" fill="#8d3a24" stroke="#4d1f13" stroke-width="0.5"/><path d="M334.20 238.04 h4.5 M334.20 239.34 h4.5 M339.20 237.94 h13.06 M353.02 239.44 h10.25 M353.53 240.54 h6.60 M365.97 239.94 h8.74 M334.20 237.26 h3.31 M334.20 237.26 L337.51 238.44 M338.61 237.47 L340.67 238.16 M341.42 237.45 h3.85 M346.21 238.61 L349.90 235.91 M351.00 236.37 h2.33 M351.00 236.37 L353.33 237.87 M354.09 238.08 h2.75 M354.09 238.08 L356.84 240.25 M357.45 240.30 L359.24 238.19 M359.89 237.14 h1.41 M362.99 236.39 h0.81 M362.99 236.39 L363.81 233.86 M364.68 234.69 L366.94 236.81 M367.09 238.64 h3.46 M367.09 238.64 L370.55 238.28 M371.21 237.83 h3.00 " stroke="#ffffff" stroke-width="0.72" fill="none" opacity="0.78"/><rect x="383.25" y="226.53" width="43.90" height="18.42" rx="1.6" fill="#8d3a24" stroke="#4d1f13" stroke-width="0.5"/><path d="M387.87 236.78 h1.19 M396.21 238.69 h0.82 M396.51 239.79 h0.65 M402.33 237.02 h0.98 M412.71 238.57 h0.60 M413.01 239.67 h0.48 M413.78 240.13 h0.46 M415.23 240.96 h0.89 M415.53 242.06 h0.71 M418.37 239.86 h1.09 M420.59 238.81 h0.97 M421.58 238.30 h0.82 M421.88 239.40 h0.66 M423.11 237.39 h1.04 M424.84 238.66 h0.74 " stroke="#ffffff" stroke-width="0.5" fill="none" opacity="0.78"/><rect x="427.65" y="226.53" width="44.60" height="18.42" rx="1.6" fill="#8d3a24" stroke="#4d1f13" stroke-width="0.5"/><path d="M428.60 238.04 h4.5 M428.60 239.34 h4.5 M433.60 237.94 h12.53 M435.37 239.04 h10.73 M451.00 238.74 h9.07 M451.06 239.84 h7.74 M463.47 239.94 h5.04 M465.27 241.04 h3.69 M428.60 239.66 h1.54 M428.60 239.66 L430.14 242.42 M432.37 240.42 L435.46 239.04 M435.74 239.63 h1.94 M435.74 239.63 L437.67 240.35 M445.01 237.70 h3.85 M450.04 236.84 h2.76 M450.04 236.84 L452.80 235.53 M453.92 235.76 h2.18 M453.92 235.76 L456.11 237.91 M456.18 237.60 L459.08 235.16 M459.12 235.67 L460.67 236.97 M461.07 238.64 L465.16 240.50 " stroke="#ffffff" stroke-width="0.72" fill="none" opacity="0.78"/><rect x="483.85" y="226.53" width="88.70" height="18.42" rx="1.6" fill="#8d3a24" stroke="#4d1f13" stroke-width="0.5"/><path d="M484.80 238.04 h4.5 M484.80 239.34 h4.5 M489.80 239.44 h14.48 M508.10 238.74 h8.48 M520.28 239.44 h8.35 M520.31 240.54 h6.58 M531.74 239.44 h8.24 M544.12 237.94 h14.40 M544.29 236.84 h10.78 M560.28 237.94 h6.17 M560.60 236.84 h5.32 M567.33 239.44 h4.47 M484.80 237.49 h3.04 M484.80 237.49 L487.84 237.55 M488.70 236.47 L489.76 238.96 M490.80 240.37 L493.97 242.55 M499.53 241.70 h1.07 M499.53 241.70 L500.60 242.55 M503.17 242.19 L504.74 242.55 M505.17 242.20 h3.19 M509.42 242.09 L511.94 241.96 M512.09 242.27 h1.86 M514.09 239.65 L516.49 241.80 M516.56 241.96 h1.91 M516.56 241.96 L518.47 239.87 M522.47 239.77 h2.98 M526.33 240.17 h2.68 M526.33 240.17 L529.01 240.47 M529.61 240.93 L532.67 238.47 M532.73 239.56 h1.03 M532.73 239.56 L533.76 241.77 M534.59 239.53 L537.04 238.96 M537.27 237.60 L539.99 237.53 M540.25 237.14 h2.60 M546.54 236.03 L550.56 238.72 M551.31 239.56 h2.04 M551.31 239.56 L553.35 240.49 M554.31 239.39 L557.99 241.67 M565.55 238.57 h2.17 M567.80 240.04 h1.99 M570.49 240.78 h1.31 M570.49 240.78 L571.80 239.99 " stroke="#ffffff" stroke-width="0.72" fill="none" opacity="0.78"/><rect x="573.05" y="226.53" width="88.20" height="18.42" rx="1.6" fill="#8d3a24" stroke="#4d1f13" stroke-width="0.5"/><path d="M574.00 238.04 h4.5 M574.00 239.34 h4.5 M579.00 239.44 h9.54 M589.93 238.74 h14.24 M608.21 239.94 h15.50 M625.39 239.44 h5.49 M626.45 238.34 h2.80 M631.98 237.94 h6.56 M643.32 239.94 h12.43 M574.00 237.61 L576.43 238.54 M577.32 239.90 h3.59 M585.08 238.82 L587.72 239.39 M587.97 239.38 h1.84 M590.53 238.33 L592.83 238.82 M594.24 238.86 h1.40 M595.84 238.80 L599.97 239.87 M600.10 240.51 h2.88 M600.10 240.51 L602.99 241.65 M603.47 241.47 h2.56 M603.47 241.47 L606.03 238.90 M611.38 239.97 L613.43 238.26 M614.55 238.64 h2.68 M614.55 238.64 L617.23 235.92 M617.84 238.07 L620.74 235.62 M621.10 236.57 L624.09 234.46 M625.07 237.35 L625.88 238.30 M626.56 239.41 L627.79 238.49 M630.75 238.71 h3.01 M630.75 238.71 L633.76 237.69 M642.31 237.45 h2.91 M642.31 237.45 L645.22 239.91 M645.55 238.49 h3.11 M648.99 238.10 h3.58 M656.60 240.37 L658.97 241.95 " stroke="#ffffff" stroke-width="0.72" fill="none" opacity="0.78"/><rect x="839.75" y="226.53" width="89.00" height="18.42" rx="1.6" fill="#8d3a24" stroke="#4d1f13" stroke-width="0.5"/><path d="M840.70 238.04 h4.5 M840.70 239.34 h4.5 M845.70 239.44 h6.01 M856.64 239.94 h10.21 M871.29 239.44 h10.85 M872.10 240.54 h9.70 M886.67 239.44 h7.20 M887.98 238.34 h4.66 M894.81 239.94 h13.43 M895.85 241.04 h10.45 M912.08 239.44 h11.86 M913.61 240.54 h9.17 M840.70 239.21 L843.39 237.66 M843.39 237.75 h1.69 M843.39 237.75 L845.08 237.25 M845.70 238.07 h2.22 M845.70 238.07 L847.93 236.15 M849.13 237.15 h0.83 M850.92 237.40 h1.03 M850.92 237.40 L851.94 237.34 M852.06 238.03 L854.02 237.03 M854.32 238.46 h1.06 M856.38 238.71 L858.32 239.79 M859.04 238.66 h3.05 M859.04 238.66 L862.10 239.51 M866.29 239.63 L870.27 240.82 M871.24 240.96 L873.96 242.55 M874.26 240.07 h2.99 M874.26 240.07 L877.24 237.35 M877.39 238.65 L880.12 240.61 M880.91 238.85 h2.62 M880.91 238.85 L883.52 238.13 M884.19 239.73 L885.35 237.05 M886.52 236.18 L887.91 236.96 M888.22 238.13 h2.64 M891.78 239.46 L895.00 239.84 M895.46 239.25 h3.67 M899.89 237.93 h3.37 M899.89 237.93 L903.26 238.93 M904.02 240.34 h1.67 M904.02 240.34 L905.68 242.55 M910.01 239.65 L912.83 240.05 M913.70 238.09 h3.10 M913.70 238.09 L916.80 237.14 M917.55 236.77 L921.38 238.35 M922.27 239.19 h2.79 M925.26 238.24 h2.74 M925.26 238.24 L928.00 239.48 " stroke="#ffffff" stroke-width="0.72" fill="none" opacity="0.78"/><rect x="929.25" y="226.53" width="10.50" height="18.42" rx="1.6" fill="#8d3a24" stroke="#4d1f13" stroke-width="0.5"/><path d="M930.20 236.94 H938.00 M937.00 242.55 h1" stroke="#ffffff" stroke-width="0.6" fill="none"/><rect x="494.85" y="245.65" width="26.90" height="18.42" rx="1.6" fill="#4b41c2" stroke="#29236a" stroke-width="0.5"/><path d="M495.20 258.87 H521.40" stroke="#e6e0ff" stroke-width="0.45" opacity="0.9"/><path d="M497.89 258.87 Q506.11 258.47 514.33 256.67 Q518.66 257.27 521.00 258.47 L521.00 259.27 Q518.66 260.47 514.33 261.07 Q506.11 259.27 497.89 258.87z" fill="#e6e0ff" opacity="0.92"/><rect x="634.25" y="245.65" width="27.00" height="18.42" rx="1.6" fill="#4b41c2" stroke="#29236a" stroke-width="0.5"/><path d="M634.60 258.87 H660.90" stroke="#e6e0ff" stroke-width="0.45" opacity="0.9"/><path d="M637.30 258.87 Q645.55 258.47 653.80 256.67 Q658.15 257.27 660.50 258.47 L660.50 259.27 Q658.15 260.47 653.80 261.07 Q645.55 259.27 637.30 258.87z" fill="#e6e0ff" opacity="0.92"/><rect x="812.25" y="245.65" width="27.00" height="18.42" rx="1.6" fill="#4b41c2" stroke="#29236a" stroke-width="0.5"/><path d="M812.60 258.87 H838.90" stroke="#e6e0ff" stroke-width="0.45" opacity="0.9"/><path d="M815.30 258.87 Q823.55 258.47 831.80 256.67 Q836.15 257.27 838.50 258.47 L838.50 259.27 Q836.15 260.47 831.80 261.07 Q823.55 259.27 815.30 258.87z" fill="#e6e0ff" opacity="0.92"/><rect x="901.25" y="245.65" width="27.50" height="18.42" rx="1.6" fill="#4b41c2" stroke="#29236a" stroke-width="0.5"/><path d="M901.60 258.87 H928.40" stroke="#e6e0ff" stroke-width="0.45" opacity="0.9"/><path d="M904.36 258.87 Q912.76 258.47 921.16 256.67 Q925.58 257.27 928.00 258.47 L928.00 259.27 Q925.58 260.47 921.16 261.07 Q912.76 259.27 904.36 258.87z" fill="#e6e0ff" opacity="0.92"/><rect x="199.65" y="264.77" width="29.70" height="18.42" rx="1.6" fill="#5a3cc8" stroke="#31216e" stroke-width="0.5"/><path d="M200.00 277.99 H229.00" stroke="#e6e0ff" stroke-width="0.45" opacity="0.9"/><rect x="528.25" y="264.77" width="29.10" height="18.42" rx="1.6" fill="#5a3cc8" stroke="#31216e" stroke-width="0.5"/><path d="M528.60 277.99 H557.00" stroke="#e6e0ff" stroke-width="0.45" opacity="0.9"/><path d="M528.80 275.19 Q531.80 276.39 544.28 277.99 Q531.80 279.59 528.80 280.79z" fill="#e6e0ff" opacity="0.95"/><rect x="573.05" y="264.77" width="29.30" height="18.42" rx="1.6" fill="#5a3cc8" stroke="#31216e" stroke-width="0.5"/><path d="M573.40 277.99 H602.00" stroke="#e6e0ff" stroke-width="0.45" opacity="0.9"/><path d="M573.60 275.19 Q576.60 276.39 589.19 277.99 Q576.60 279.59 573.60 280.79z" fill="#e6e0ff" opacity="0.95"/><rect x="483.85" y="283.89" width="20.50" height="18.42" rx="1.6" fill="#6a36c2" stroke="#3a1d6a" stroke-width="0.5"/><path d="M484.20 297.11 H504.00" stroke="#e6e0ff" stroke-width="0.45" opacity="0.9"/><path d="M484.40 294.71 L491.10 297.11 L484.40 299.51z" fill="#e6e0ff" opacity="0.95"/><rect x="550.65" y="283.89" width="10.50" height="18.42" rx="1.6" fill="#6a36c2" stroke="#3a1d6a" stroke-width="0.5"/><path d="M551.00 297.11 H560.80" stroke="#e6e0ff" stroke-width="0.45" opacity="0.9"/><path d="M551.20 294.71 L555.90 297.11 L551.20 299.51z" fill="#e6e0ff" opacity="0.95"/><rect x="561.65" y="283.89" width="20.70" height="18.42" rx="1.6" fill="#6a36c2" stroke="#3a1d6a" stroke-width="0.5"/><path d="M562.00 297.11 H582.00" stroke="#e6e0ff" stroke-width="0.45" opacity="0.9"/><path d="M562.20 294.71 L568.90 297.11 L562.20 299.51z" fill="#e6e0ff" opacity="0.95"/><rect x="839.75" y="283.89" width="21.00" height="18.42" rx="1.6" fill="#6a36c2" stroke="#3a1d6a" stroke-width="0.5"/><path d="M840.10 297.11 H860.40" stroke="#e6e0ff" stroke-width="0.45" opacity="0.9"/><path d="M840.30 294.71 L847.00 297.11 L840.30 299.51z" fill="#e6e0ff" opacity="0.95"/><rect x="884.75" y="283.89" width="21.00" height="18.42" rx="1.6" fill="#6a36c2" stroke="#3a1d6a" stroke-width="0.5"/><path d="M885.10 297.11 H905.40" stroke="#e6e0ff" stroke-width="0.45" opacity="0.9"/><path d="M885.30 294.71 L892.00 297.11 L885.30 299.51z" fill="#e6e0ff" opacity="0.95"/><rect x="472.75" y="303.01" width="10.20" height="18.42" rx="1.6" fill="#5842c0" stroke="#302469" stroke-width="0.5"/><path d="M473.70 315.02 H482.20" stroke="#ffffff" stroke-width="0.5" fill="none" opacity="0.85"/><rect x="862.25" y="303.01" width="10.50" height="18.42" rx="1.6" fill="#5842c0" stroke="#302469" stroke-width="0.5"/><path d="M863.20 315.02 H872.00" stroke="#ffffff" stroke-width="0.5" fill="none" opacity="0.85"/><rect x="377.75" y="322.13" width="5.00" height="18.42" rx="1.6" fill="#9a20b2" stroke="#541161" stroke-width="0.5"/><path d="M378.10 335.35 H382.40" stroke="#e6e0ff" stroke-width="0.45" opacity="0.9"/><path d="M382.20 332.75 Q381.20 335.05 379.70 335.35 Q381.20 335.65 382.20 337.95z" fill="#e6e0ff" opacity="0.95"/><rect x="474.25" y="322.13" width="8.90" height="18.42" rx="1.6" fill="#9a20b2" stroke="#541161" stroke-width="0.5"/><path d="M474.60 335.35 H482.80" stroke="#e6e0ff" stroke-width="0.45" opacity="0.9"/><path d="M482.60 332.75 Q481.60 335.05 478.90 335.35 Q481.60 335.65 482.60 337.95z" fill="#e6e0ff" opacity="0.95"/><rect x="875.25" y="322.13" width="9.50" height="18.42" rx="1.6" fill="#9a20b2" stroke="#541161" stroke-width="0.5"/><path d="M875.60 335.35 H884.40" stroke="#e6e0ff" stroke-width="0.45" opacity="0.9"/><path d="M884.20 332.75 Q883.20 335.05 880.50 335.35 Q883.20 335.65 884.20 337.95z" fill="#e6e0ff" opacity="0.95"/><rect x="377.75" y="341.25" width="5.00" height="18.42" rx="1.6" fill="#1a8a84" stroke="#0e4b48" stroke-width="0.5"/><path d="M378.70 351.66 H381.00 M380.00 357.27 h1" stroke="#ffffff" stroke-width="0.6" fill="none"/><rect x="383.25" y="341.25" width="43.90" height="18.42" rx="1.6" fill="#1a8a84" stroke="#0e4b48" stroke-width="0.5"/><path d="M394.39 351.29 h0.67 M394.69 352.39 h0.53 M395.97 352.51 h0.47 M396.27 353.61 h0.38 M400.84 355.38 h1.11 M402.99 355.19 h0.71 M404.19 353.73 h0.46 M404.49 354.83 h0.37 M408.97 353.32 h0.43 M409.27 354.42 h0.34 M415.84 351.72 h0.56 " stroke="#ffffff" stroke-width="0.5" fill="none" opacity="0.78"/><rect x="427.65" y="341.25" width="44.60" height="18.42" rx="1.6" fill="#1a8a84" stroke="#0e4b48" stroke-width="0.5"/><path d="M430.78 352.02 h0.82 M432.65 351.42 h0.85 M449.95 353.34 h0.84 M450.25 354.44 h0.67 M451.93 352.12 h0.92 M453.95 352.91 h0.93 M456.12 351.68 h0.82 M456.42 352.78 h0.65 M462.70 353.83 h1.12 M464.38 354.67 h0.73 M466.68 352.17 h0.98 M466.98 353.27 h0.78 M468.68 351.65 h1.11 M470.11 351.93 h1.00 M470.41 353.03 h0.80 " stroke="#ffffff" stroke-width="0.5" fill="none" opacity="0.78"/><rect x="199.65" y="360.37" width="43.70" height="18.42" rx="1.6" fill="#6f6f6f" stroke="#3d3d3d" stroke-width="0.5"/><path d="M200.20 369.77 H242.80" stroke="#f0f0f0" stroke-width="0.9" opacity="0.9"/><path d="M200.20 370.97 H242.80" stroke="#5a5a5a" stroke-width="0.5"/><path d="M223.60 375.77 H242.60" stroke="#c8c8c8" stroke-width="0.6" stroke-dasharray="0.6 0.8" opacity="0.8"/><circle cx="202.60" cy="363.97" r="1.5" fill="#3fe6ea"/><rect x="243.85" y="360.37" width="21.90" height="18.42" rx="1.6" fill="#1fa9a3" stroke="#115c59" stroke-width="0.5"/><path d="M244.40 368.87 H265.20" stroke="#86e6e0" stroke-width="0.75" stroke-dasharray="1.6 0.3" opacity="0.85"/><path d="M244.40 375.07 H265.20" stroke="#86e6e0" stroke-width="0.75" stroke-dasharray="1.6 0.3" opacity="0.85"/><path d="M244.40 377.57 H265.20" stroke="#86e6e0" stroke-width="0.55" stroke-dasharray="0.8 0.6" opacity="0.6"/><rect x="266.25" y="360.37" width="22.00" height="18.42" rx="1.6" fill="#1fa9a3" stroke="#115c59" stroke-width="0.5"/><path d="M266.80 368.87 H287.70" stroke="#86e6e0" stroke-width="0.75" stroke-dasharray="1.6 0.3" opacity="0.85"/><path d="M266.80 375.07 H287.70" stroke="#86e6e0" stroke-width="0.75" stroke-dasharray="1.6 0.3" opacity="0.85"/><path d="M266.80 377.57 H287.70" stroke="#86e6e0" stroke-width="0.55" stroke-dasharray="0.8 0.6" opacity="0.6"/><rect x="288.75" y="360.37" width="21.60" height="18.42" rx="1.6" fill="#1fa9a3" stroke="#115c59" stroke-width="0.5"/><path d="M289.30 368.87 H309.80" stroke="#86e6e0" stroke-width="0.75" stroke-dasharray="1.6 0.3" opacity="0.85"/><path d="M289.30 375.07 H309.80" stroke="#86e6e0" stroke-width="0.75" stroke-dasharray="1.6 0.3" opacity="0.85"/><path d="M289.30 377.57 H309.80" stroke="#86e6e0" stroke-width="0.55" stroke-dasharray="0.8 0.6" opacity="0.6"/><rect x="310.85" y="360.37" width="21.90" height="18.42" rx="1.6" fill="#197d7a" stroke="#0d4443" stroke-width="0.5"/><path d="M311.40 368.87 H332.20" stroke="#4fb0ab" stroke-width="0.75" stroke-dasharray="1.6 0.3" opacity="0.85"/><path d="M311.40 375.07 H332.20" stroke="#4fb0ab" stroke-width="0.75" stroke-dasharray="1.6 0.3" opacity="0.85"/><path d="M311.40 377.57 H332.20" stroke="#4fb0ab" stroke-width="0.55" stroke-dasharray="0.8 0.6" opacity="0.6"/><path d="M312.20 376.27 H331.80" stroke="#4fb0ab" stroke-width="1.4" stroke-dasharray="0.35 1.9" opacity="0.7"/><rect x="333.25" y="360.37" width="21.70" height="18.42" rx="1.6" fill="#1fa9a3" stroke="#115c59" stroke-width="0.5"/><path d="M333.80 368.87 H354.40" stroke="#86e6e0" stroke-width="0.75" stroke-dasharray="1.6 0.3" opacity="0.85"/><path d="M333.80 375.07 H354.40" stroke="#86e6e0" stroke-width="0.75" stroke-dasharray="1.6 0.3" opacity="0.85"/><path d="M333.80 377.57 H354.40" stroke="#86e6e0" stroke-width="0.55" stroke-dasharray="0.8 0.6" opacity="0.6"/><path d="M334.60 376.27 H354.00" stroke="#86e6e0" stroke-width="1.4" stroke-dasharray="0.35 1.9" opacity="0.7"/><rect x="355.45" y="360.37" width="21.80" height="18.42" rx="1.6" fill="#1fa9a3" stroke="#115c59" stroke-width="0.5"/><path d="M356.00 368.87 H376.70" stroke="#86e6e0" stroke-width="0.75" stroke-dasharray="1.6 0.3" opacity="0.85"/><path d="M356.00 375.07 H376.70" stroke="#86e6e0" stroke-width="0.75" stroke-dasharray="1.6 0.3" opacity="0.85"/><path d="M356.00 377.57 H376.70" stroke="#86e6e0" stroke-width="0.55" stroke-dasharray="0.8 0.6" opacity="0.6"/><path d="M356.80 376.27 H376.30" stroke="#86e6e0" stroke-width="1.4" stroke-dasharray="0.35 1.9" opacity="0.7"/><rect x="377.75" y="360.37" width="5.00" height="18.42" rx="1.6" fill="#1fa9a3" stroke="#115c59" stroke-width="0.5"/><path d="M378.30 368.87 H382.20" stroke="#86e6e0" stroke-width="0.75" stroke-dasharray="1.6 0.3" opacity="0.85"/><path d="M378.30 375.07 H382.20" stroke="#86e6e0" stroke-width="0.75" stroke-dasharray="1.6 0.3" opacity="0.85"/><path d="M378.30 377.57 H382.20" stroke="#86e6e0" stroke-width="0.55" stroke-dasharray="0.8 0.6" opacity="0.6"/><path d="M379.10 376.27 H381.80" stroke="#86e6e0" stroke-width="1.4" stroke-dasharray="0.35 1.9" opacity="0.7"/><rect x="383.25" y="360.37" width="21.90" height="18.42" rx="1.6" fill="#1fa9a3" stroke="#115c59" stroke-width="0.5"/><path d="M383.80 368.87 H404.60" stroke="#86e6e0" stroke-width="0.75" stroke-dasharray="1.6 0.3" opacity="0.85"/><path d="M383.80 375.07 H404.60" stroke="#86e6e0" stroke-width="0.75" stroke-dasharray="1.6 0.3" opacity="0.85"/><path d="M383.80 377.57 H404.60" stroke="#86e6e0" stroke-width="0.55" stroke-dasharray="0.8 0.6" opacity="0.6"/><path d="M384.60 376.27 H404.20" stroke="#86e6e0" stroke-width="1.4" stroke-dasharray="0.35 1.9" opacity="0.7"/><rect x="405.65" y="360.37" width="21.50" height="18.42" rx="1.6" fill="#1fa9a3" stroke="#115c59" stroke-width="0.5"/><path d="M406.20 368.87 H426.60" stroke="#86e6e0" stroke-width="0.75" stroke-dasharray="1.6 0.3" opacity="0.85"/><path d="M406.20 375.07 H426.60" stroke="#86e6e0" stroke-width="0.75" stroke-dasharray="1.6 0.3" opacity="0.85"/><path d="M406.20 377.57 H426.60" stroke="#86e6e0" stroke-width="0.55" stroke-dasharray="0.8 0.6" opacity="0.6"/><path d="M407.00 376.27 H426.20" stroke="#86e6e0" stroke-width="1.4" stroke-dasharray="0.35 1.9" opacity="0.7"/><rect x="427.65" y="360.37" width="21.90" height="18.42" rx="1.6" fill="#1fa9a3" stroke="#115c59" stroke-width="0.5"/><path d="M428.20 368.87 H449.00" stroke="#86e6e0" stroke-width="0.75" stroke-dasharray="1.6 0.3" opacity="0.85"/><path d="M428.20 375.07 H449.00" stroke="#86e6e0" stroke-width="0.75" stroke-dasharray="1.6 0.3" opacity="0.85"/><path d="M428.20 377.57 H449.00" stroke="#86e6e0" stroke-width="0.55" stroke-dasharray="0.8 0.6" opacity="0.6"/><path d="M429.00 376.27 H448.60" stroke="#86e6e0" stroke-width="1.4" stroke-dasharray="0.35 1.9" opacity="0.7"/><rect x="450.05" y="360.37" width="22.20" height="18.42" rx="1.6" fill="#197d7a" stroke="#0d4443" stroke-width="0.5"/><path d="M450.60 368.87 H471.70" stroke="#4fb0ab" stroke-width="0.75" stroke-dasharray="1.6 0.3" opacity="0.85"/><path d="M450.60 375.07 H471.70" stroke="#4fb0ab" stroke-width="0.75" stroke-dasharray="1.6 0.3" opacity="0.85"/><path d="M450.60 377.57 H471.70" stroke="#4fb0ab" stroke-width="0.55" stroke-dasharray="0.8 0.6" opacity="0.6"/><path d="M451.40 376.27 H471.30" stroke="#4fb0ab" stroke-width="1.4" stroke-dasharray="0.35 1.9" opacity="0.7"/><rect x="527.85" y="360.37" width="22.30" height="18.42" rx="1.6" fill="#1fa9a3" stroke="#115c59" stroke-width="0.5"/><path d="M528.40 368.87 H549.60" stroke="#86e6e0" stroke-width="0.75" stroke-dasharray="1.6 0.3" opacity="0.85"/><path d="M528.40 375.07 H549.60" stroke="#86e6e0" stroke-width="0.75" stroke-dasharray="1.6 0.3" opacity="0.85"/><path d="M528.40 377.57 H549.60" stroke="#86e6e0" stroke-width="0.55" stroke-dasharray="0.8 0.6" opacity="0.6"/><path d="M529.20 376.27 H549.20" stroke="#86e6e0" stroke-width="1.4" stroke-dasharray="0.35 1.9" opacity="0.7"/><rect x="550.65" y="360.37" width="21.90" height="18.42" rx="1.6" fill="#1fa9a3" stroke="#115c59" stroke-width="0.5"/><path d="M551.20 368.87 H572.00" stroke="#86e6e0" stroke-width="0.75" stroke-dasharray="1.6 0.3" opacity="0.85"/><path d="M551.20 375.07 H572.00" stroke="#86e6e0" stroke-width="0.75" stroke-dasharray="1.6 0.3" opacity="0.85"/><path d="M551.20 377.57 H572.00" stroke="#86e6e0" stroke-width="0.55" stroke-dasharray="0.8 0.6" opacity="0.6"/><path d="M552.00 376.27 H571.60" stroke="#86e6e0" stroke-width="1.4" stroke-dasharray="0.35 1.9" opacity="0.7"/><rect x="573.05" y="360.37" width="21.70" height="18.42" rx="1.6" fill="#1fa9a3" stroke="#115c59" stroke-width="0.5"/><path d="M573.60 368.87 H594.20" stroke="#86e6e0" stroke-width="0.75" stroke-dasharray="1.6 0.3" opacity="0.85"/><path d="M573.60 375.07 H594.20" stroke="#86e6e0" stroke-width="0.75" stroke-dasharray="1.6 0.3" opacity="0.85"/><path d="M573.60 377.57 H594.20" stroke="#86e6e0" stroke-width="0.55" stroke-dasharray="0.8 0.6" opacity="0.6"/><path d="M574.40 376.27 H593.80" stroke="#86e6e0" stroke-width="1.4" stroke-dasharray="0.35 1.9" opacity="0.7"/><rect x="595.25" y="360.37" width="21.70" height="18.42" rx="1.6" fill="#1fa9a3" stroke="#115c59" stroke-width="0.5"/><path d="M595.80 368.87 H616.40" stroke="#86e6e0" stroke-width="0.75" stroke-dasharray="1.6 0.3" opacity="0.85"/><path d="M595.80 375.07 H616.40" stroke="#86e6e0" stroke-width="0.75" stroke-dasharray="1.6 0.3" opacity="0.85"/><path d="M595.80 377.57 H616.40" stroke="#86e6e0" stroke-width="0.55" stroke-dasharray="0.8 0.6" opacity="0.6"/><path d="M596.60 376.27 H616.00" stroke="#86e6e0" stroke-width="1.4" stroke-dasharray="0.35 1.9" opacity="0.7"/><rect x="617.45" y="360.37" width="21.70" height="18.42" rx="1.6" fill="#1fa9a3" stroke="#115c59" stroke-width="0.5"/><path d="M618.00 368.87 H638.60" stroke="#86e6e0" stroke-width="0.75" stroke-dasharray="1.6 0.3" opacity="0.85"/><path d="M618.00 375.07 H638.60" stroke="#86e6e0" stroke-width="0.75" stroke-dasharray="1.6 0.3" opacity="0.85"/><path d="M618.00 377.57 H638.60" stroke="#86e6e0" stroke-width="0.55" stroke-dasharray="0.8 0.6" opacity="0.6"/><path d="M618.80 376.27 H638.20" stroke="#86e6e0" stroke-width="1.4" stroke-dasharray="0.35 1.9" opacity="0.7"/><rect x="639.65" y="360.37" width="21.60" height="18.42" rx="1.6" fill="#1fa9a3" stroke="#115c59" stroke-width="0.5"/><path d="M640.20 368.87 H660.70" stroke="#86e6e0" stroke-width="0.75" stroke-dasharray="1.6 0.3" opacity="0.85"/><path d="M640.20 375.07 H660.70" stroke="#86e6e0" stroke-width="0.75" stroke-dasharray="1.6 0.3" opacity="0.85"/><path d="M640.20 377.57 H660.70" stroke="#86e6e0" stroke-width="0.55" stroke-dasharray="0.8 0.6" opacity="0.6"/><path d="M641.00 376.27 H660.30" stroke="#86e6e0" stroke-width="1.4" stroke-dasharray="0.35 1.9" opacity="0.7"/><rect x="661.75" y="360.37" width="21.80" height="18.42" rx="1.6" fill="#1fa9a3" stroke="#115c59" stroke-width="0.5"/><path d="M662.30 368.87 H683.00" stroke="#86e6e0" stroke-width="0.75" stroke-dasharray="1.6 0.3" opacity="0.85"/><path d="M662.30 375.07 H683.00" stroke="#86e6e0" stroke-width="0.75" stroke-dasharray="1.6 0.3" opacity="0.85"/><path d="M662.30 377.57 H683.00" stroke="#86e6e0" stroke-width="0.55" stroke-dasharray="0.8 0.6" opacity="0.6"/><path d="M663.10 376.27 H682.60" stroke="#86e6e0" stroke-width="1.4" stroke-dasharray="0.35 1.9" opacity="0.7"/><rect x="684.05" y="360.37" width="21.70" height="18.42" rx="1.6" fill="#1fa9a3" stroke="#115c59" stroke-width="0.5"/><path d="M684.60 368.87 H705.20" stroke="#86e6e0" stroke-width="0.75" stroke-dasharray="1.6 0.3" opacity="0.85"/><path d="M684.60 375.07 H705.20" stroke="#86e6e0" stroke-width="0.75" stroke-dasharray="1.6 0.3" opacity="0.85"/><path d="M684.60 377.57 H705.20" stroke="#86e6e0" stroke-width="0.55" stroke-dasharray="0.8 0.6" opacity="0.6"/><path d="M685.40 376.27 H704.80" stroke="#86e6e0" stroke-width="1.4" stroke-dasharray="0.35 1.9" opacity="0.7"/><rect x="706.25" y="360.37" width="21.70" height="18.42" rx="1.6" fill="#1fa9a3" stroke="#115c59" stroke-width="0.5"/><path d="M706.80 368.87 H727.40" stroke="#86e6e0" stroke-width="0.75" stroke-dasharray="1.6 0.3" opacity="0.85"/><path d="M706.80 375.07 H727.40" stroke="#86e6e0" stroke-width="0.75" stroke-dasharray="1.6 0.3" opacity="0.85"/><path d="M706.80 377.57 H727.40" stroke="#86e6e0" stroke-width="0.55" stroke-dasharray="0.8 0.6" opacity="0.6"/><path d="M707.60 376.27 H727.00" stroke="#86e6e0" stroke-width="1.4" stroke-dasharray="0.35 1.9" opacity="0.7"/><rect x="728.45" y="360.37" width="21.80" height="18.42" rx="1.6" fill="#1fa9a3" stroke="#115c59" stroke-width="0.5"/><path d="M729.00 368.87 H749.70" stroke="#86e6e0" stroke-width="0.75" stroke-dasharray="1.6 0.3" opacity="0.85"/><path d="M729.00 375.07 H749.70" stroke="#86e6e0" stroke-width="0.75" stroke-dasharray="1.6 0.3" opacity="0.85"/><path d="M729.00 377.57 H749.70" stroke="#86e6e0" stroke-width="0.55" stroke-dasharray="0.8 0.6" opacity="0.6"/><path d="M729.80 376.27 H749.30" stroke="#86e6e0" stroke-width="1.4" stroke-dasharray="0.35 1.9" opacity="0.7"/><rect x="750.75" y="360.37" width="21.80" height="18.42" rx="1.6" fill="#1fa9a3" stroke="#115c59" stroke-width="0.5"/><path d="M751.30 368.87 H772.00" stroke="#86e6e0" stroke-width="0.75" stroke-dasharray="1.6 0.3" opacity="0.85"/><path d="M751.30 375.07 H772.00" stroke="#86e6e0" stroke-width="0.75" stroke-dasharray="1.6 0.3" opacity="0.85"/><path d="M751.30 377.57 H772.00" stroke="#86e6e0" stroke-width="0.55" stroke-dasharray="0.8 0.6" opacity="0.6"/><path d="M752.10 376.27 H771.60" stroke="#86e6e0" stroke-width="1.4" stroke-dasharray="0.35 1.9" opacity="0.7"/><rect x="773.05" y="360.37" width="21.70" height="18.42" rx="1.6" fill="#1fa9a3" stroke="#115c59" stroke-width="0.5"/><path d="M773.60 368.87 H794.20" stroke="#86e6e0" stroke-width="0.75" stroke-dasharray="1.6 0.3" opacity="0.85"/><path d="M773.60 375.07 H794.20" stroke="#86e6e0" stroke-width="0.75" stroke-dasharray="1.6 0.3" opacity="0.85"/><path d="M773.60 377.57 H794.20" stroke="#86e6e0" stroke-width="0.55" stroke-dasharray="0.8 0.6" opacity="0.6"/><path d="M774.40 376.27 H793.80" stroke="#86e6e0" stroke-width="1.4" stroke-dasharray="0.35 1.9" opacity="0.7"/><rect x="795.25" y="360.37" width="21.70" height="18.42" rx="1.6" fill="#1fa9a3" stroke="#115c59" stroke-width="0.5"/><path d="M795.80 368.87 H816.40" stroke="#86e6e0" stroke-width="0.75" stroke-dasharray="1.6 0.3" opacity="0.85"/><path d="M795.80 375.07 H816.40" stroke="#86e6e0" stroke-width="0.75" stroke-dasharray="1.6 0.3" opacity="0.85"/><path d="M795.80 377.57 H816.40" stroke="#86e6e0" stroke-width="0.55" stroke-dasharray="0.8 0.6" opacity="0.6"/><path d="M796.60 376.27 H816.00" stroke="#86e6e0" stroke-width="1.4" stroke-dasharray="0.35 1.9" opacity="0.7"/><rect x="817.45" y="360.37" width="21.80" height="18.42" rx="1.6" fill="#1fa9a3" stroke="#115c59" stroke-width="0.5"/><path d="M818.00 368.87 H838.70" stroke="#86e6e0" stroke-width="0.75" stroke-dasharray="1.6 0.3" opacity="0.85"/><path d="M818.00 375.07 H838.70" stroke="#86e6e0" stroke-width="0.75" stroke-dasharray="1.6 0.3" opacity="0.85"/><path d="M818.00 377.57 H838.70" stroke="#86e6e0" stroke-width="0.55" stroke-dasharray="0.8 0.6" opacity="0.6"/><path d="M818.80 376.27 H838.30" stroke="#86e6e0" stroke-width="1.4" stroke-dasharray="0.35 1.9" opacity="0.7"/></svg>
<div class="t" style="left:485.40px;transform-origin:0 50%;top:57px;font-size:4.83px;line-height:5px;color:#ffffff;font-weight:normal;transform:scaleX(0.9);width:96.67px;clip-path:inset(-3px 0 -3px 0)">Inst 1</div>
<div class="t" style="left:574.60px;transform-origin:0 50%;top:57px;font-size:4.83px;line-height:5px;color:#ffffff;font-weight:normal;transform:scaleX(0.9);width:96.11px;clip-path:inset(-3px 0 -3px 0)">electric</div>
<div class="t" style="left:663.30px;transform-origin:0 50%;top:57px;font-size:4.83px;line-height:5px;color:#ffffff;font-weight:normal;transform:scaleX(0.9);width:96.44px;clip-path:inset(-3px 0 -3px 0)">Inst 1</div>
<div class="t" style="left:752.30px;transform-origin:0 50%;top:57px;font-size:4.83px;line-height:5px;color:#ffffff;font-weight:normal;transform:scaleX(0.9);width:96.44px;clip-path:inset(-3px 0 -3px 0)">Inst 1</div>
<div class="t" style="left:841.30px;transform-origin:0 50%;top:57px;font-size:4.83px;line-height:5px;color:#ffffff;font-weight:normal;transform:scaleX(0.9);width:97.00px;clip-path:inset(-3px 0 -3px 0)">electric</div>
<div class="t" style="left:245.80px;transform-origin:0 50%;top:76px;font-size:4.83px;line-height:5px;color:#ffffff;font-weight:normal;transform:scaleX(0.9);width:47.00px;clip-path:inset(-3px 0 -3px 0)">Inst 2</div>
<div class="t" style="left:290.30px;transform-origin:0 50%;top:76px;font-size:4.83px;line-height:5px;color:#ffffff;font-weight:normal;transform:scaleX(0.9);width:46.78px;clip-path:inset(-3px 0 -3px 0)">Inst 2</div>
<div class="t" style="left:485.40px;transform-origin:0 50%;top:76px;font-size:4.83px;line-height:5px;color:#ffffff;font-weight:normal;transform:scaleX(0.9);width:96.67px;clip-path:inset(-3px 0 -3px 0)">Inst 2</div>
<div class="t" style="left:886.30px;transform-origin:0 50%;top:76px;font-size:4.83px;line-height:5px;color:#ffffff;font-weight:normal;transform:scaleX(0.9);width:47.00px;clip-path:inset(-3px 0 -3px 0)">Untitled</div>
<div class="t" style="left:663.30px;transform-origin:0 50%;top:96px;font-size:4.83px;line-height:5px;color:#ffffff;font-weight:normal;transform:scaleX(0.9);width:96.44px;clip-path:inset(-3px 0 -3px 0)">Inst 3</div>
<div class="t" style="left:752.30px;transform-origin:0 50%;top:96px;font-size:4.83px;line-height:5px;color:#ffffff;font-weight:normal;transform:scaleX(0.9);width:96.44px;clip-path:inset(-3px 0 -3px 0)">Inst 3</div>
<div class="t" style="left:931.20px;transform-origin:0 50%;top:96px;font-size:4.83px;line-height:5px;color:#ffffff;font-weight:normal;transform:scaleX(0.9);width:9.33px;clip-path:inset(-3px 0 -3px 0)">kick</div>
<div class="t" style="left:245.80px;transform-origin:0 50%;top:191px;font-size:4.83px;line-height:5px;color:#ffffff;font-weight:normal;transform:scaleX(0.9);width:47.00px;clip-path:inset(-3px 0 -3px 0)">electric</div>
<div class="t" style="left:290.30px;transform-origin:0 50%;top:191px;font-size:4.83px;line-height:5px;color:#ffffff;font-weight:normal;transform:scaleX(0.9);width:47.00px;clip-path:inset(-3px 0 -3px 0)">electric</div>
<div class="t" style="left:334.80px;transform-origin:0 50%;top:191px;font-size:4.83px;line-height:5px;color:#ffffff;font-weight:normal;transform:scaleX(0.9);width:47.00px;clip-path:inset(-3px 0 -3px 0)">electric</div>
<div class="t" style="left:379.30px;transform-origin:0 50%;top:191px;font-size:4.83px;line-height:5px;color:#ffffff;font-weight:normal;transform:scaleX(0.9);width:46.56px;clip-path:inset(-3px 0 -3px 0)">electric</div>
<div class="t" style="left:429.20px;transform-origin:0 50%;top:191px;font-size:4.83px;line-height:5px;color:#ffffff;font-weight:normal;transform:scaleX(0.9);width:47.67px;clip-path:inset(-3px 0 -3px 0)">electric</div>
<div class="t" style="left:485.40px;transform-origin:0 50%;top:191px;font-size:4.83px;line-height:5px;color:#ffffff;font-weight:normal;transform:scaleX(0.9);width:96.67px;clip-path:inset(-3px 0 -3px 0)">electric</div>
<div class="t" style="left:574.60px;transform-origin:0 50%;top:191px;font-size:4.83px;line-height:5px;color:#ffffff;font-weight:normal;transform:scaleX(0.9);width:96.11px;clip-path:inset(-3px 0 -3px 0)">Inst 1</div>
<div class="t" style="left:756.90px;transform-origin:0 50%;top:191px;font-size:4.83px;line-height:5px;color:#c8c8c8;font-weight:normal;transform:scaleX(0.9);width:91.33px;clip-path:inset(-3px 0 -3px 0)">electric</div>
<div class="t" style="left:841.30px;transform-origin:0 50%;top:191px;font-size:4.83px;line-height:5px;color:#ffffff;font-weight:normal;transform:scaleX(0.9);width:97.00px;clip-path:inset(-3px 0 -3px 0)">electric</div>
<div class="t" style="left:930.80px;transform-origin:0 50%;top:191px;font-size:4.83px;line-height:5px;color:#ffffff;font-weight:normal;transform:scaleX(0.9);width:15.78px;clip-path:inset(-3px 0 -3px 0)">Inst 1</div>
<div class="t" style="left:217.60px;transform-origin:0 50%;top:210px;font-size:4.83px;line-height:5px;color:#ffffff;font-weight:normal;transform:scaleX(0.9);width:28.44px;clip-path:inset(-3px 0 -3px 0)">bg_pad</div>
<div class="t" style="left:663.30px;transform-origin:0 50%;top:210px;font-size:4.83px;line-height:5px;color:#ffffff;font-weight:normal;transform:scaleX(0.9);width:96.44px;clip-path:inset(-3px 0 -3px 0)">bg_pad</div>
<div class="t" style="left:752.30px;transform-origin:0 50%;top:210px;font-size:4.83px;line-height:5px;color:#ffffff;font-weight:normal;transform:scaleX(0.9);width:96.44px;clip-path:inset(-3px 0 -3px 0)">bg_pad</div>
<div class="t" style="left:886.30px;transform-origin:0 50%;top:210px;font-size:4.83px;line-height:5px;color:#ffffff;font-weight:normal;transform:scaleX(0.9);width:47.00px;clip-path:inset(-3px 0 -3px 0)">bg_pad</div>
<div class="t" style="left:199.60px;transform-origin:0 50%;top:229px;font-size:4.83px;line-height:5px;color:#ffffff;font-weight:normal;transform:scaleX(0.9);width:48.44px;clip-path:inset(-3px 0 -3px 0)">Steinway Grand Piano</div>
<div class="t" style="left:245.40px;transform-origin:0 50%;top:229px;font-size:4.83px;line-height:5px;color:#ffffff;font-weight:normal;transform:scaleX(0.9);width:47.44px;clip-path:inset(-3px 0 -3px 0)">Steinway Grand Pian</div>
<div class="t" style="left:290.30px;transform-origin:0 50%;top:229px;font-size:4.83px;line-height:5px;color:#ffffff;font-weight:normal;transform:scaleX(0.9);width:47.00px;clip-path:inset(-3px 0 -3px 0)">Steinway Grand Pian</div>
<div class="t" style="left:334.80px;transform-origin:0 50%;top:229px;font-size:4.83px;line-height:5px;color:#ffffff;font-weight:normal;transform:scaleX(0.9);width:47.00px;clip-path:inset(-3px 0 -3px 0)">Steinway Grand Pian</div>
<div class="t" style="left:384.80px;transform-origin:0 50%;top:229px;font-size:4.83px;line-height:5px;color:#ffffff;font-weight:normal;transform:scaleX(0.9);width:46.89px;clip-path:inset(-3px 0 -3px 0)">Steinway Grand Pian</div>
<div class="t" style="left:429.20px;transform-origin:0 50%;top:229px;font-size:4.83px;line-height:5px;color:#ffffff;font-weight:normal;transform:scaleX(0.9);width:47.67px;clip-path:inset(-3px 0 -3px 0)">Steinway Grand Pian</div>
<div class="t" style="left:485.40px;transform-origin:0 50%;top:229px;font-size:4.83px;line-height:5px;color:#ffffff;font-weight:normal;transform:scaleX(0.9);width:96.67px;clip-path:inset(-3px 0 -3px 0)">Inst 3</div>
<div class="t" style="left:574.60px;transform-origin:0 50%;top:229px;font-size:4.83px;line-height:5px;color:#ffffff;font-weight:normal;transform:scaleX(0.9);width:96.11px;clip-path:inset(-3px 0 -3px 0)">electric</div>
<div class="t" style="left:841.30px;transform-origin:0 50%;top:229px;font-size:4.83px;line-height:5px;color:#ffffff;font-weight:normal;transform:scaleX(0.9);width:97.00px;clip-path:inset(-3px 0 -3px 0)">electric</div>
<div class="t" style="left:930.80px;transform-origin:0 50%;top:229px;font-size:4.83px;line-height:5px;color:#ffffff;font-weight:normal;transform:scaleX(0.9);width:9.78px;clip-path:inset(-3px 0 -3px 0)">Stei</div>
<div class="t" style="left:496.40px;transform-origin:0 50%;top:249px;font-size:4.83px;line-height:5px;color:#ffffff;font-weight:normal;transform:scaleX(0.9);width:28.00px;clip-path:inset(-3px 0 -3px 0)">Cymatics -</div>
<div class="t" style="left:635.80px;transform-origin:0 50%;top:249px;font-size:4.83px;line-height:5px;color:#ffffff;font-weight:normal;transform:scaleX(0.9);width:28.11px;clip-path:inset(-3px 0 -3px 0)">Cymatics - D</div>
<div class="t" style="left:813.80px;transform-origin:0 50%;top:249px;font-size:4.83px;line-height:5px;color:#ffffff;font-weight:normal;transform:scaleX(0.9);width:28.11px;clip-path:inset(-3px 0 -3px 0)">Cymatics -</div>
<div class="t" style="left:902.80px;transform-origin:0 50%;top:249px;font-size:4.83px;line-height:5px;color:#ffffff;font-weight:normal;transform:scaleX(0.9);width:28.67px;clip-path:inset(-3px 0 -3px 0)">Cymatics - D</div>
<div class="t" style="left:201.20px;transform-origin:0 50%;top:268px;font-size:4.83px;line-height:5px;color:#ffffff;font-weight:normal;transform:scaleX(0.9);width:31.11px;clip-path:inset(-3px 0 -3px 0)">Cymatics - D</div>
<div class="t" style="left:529.80px;transform-origin:0 50%;top:268px;font-size:4.83px;line-height:5px;color:#ffffff;font-weight:normal;transform:scaleX(0.9);width:30.44px;clip-path:inset(-3px 0 -3px 0)">Cymatics - D</div>
<div class="t" style="left:574.60px;transform-origin:0 50%;top:268px;font-size:4.83px;line-height:5px;color:#ffffff;font-weight:normal;transform:scaleX(0.9);width:30.67px;clip-path:inset(-3px 0 -3px 0)">Cymatics - D</div>
<div class="t" style="left:485.40px;transform-origin:0 50%;top:287px;font-size:4.83px;line-height:5px;color:#ffffff;font-weight:normal;transform:scaleX(0.9);width:20.89px;clip-path:inset(-3px 0 -3px 0)">Cymatics</div>
<div class="t" style="left:552.20px;transform-origin:0 50%;top:287px;font-size:4.83px;line-height:5px;color:#ffffff;font-weight:normal;transform:scaleX(0.9);width:9.78px;clip-path:inset(-3px 0 -3px 0)">Cy</div>
<div class="t" style="left:563.20px;transform-origin:0 50%;top:287px;font-size:4.83px;line-height:5px;color:#ffffff;font-weight:normal;transform:scaleX(0.9);width:21.11px;clip-path:inset(-3px 0 -3px 0)">Cymatics</div>
<div class="t" style="left:841.30px;transform-origin:0 50%;top:287px;font-size:4.83px;line-height:5px;color:#ffffff;font-weight:normal;transform:scaleX(0.9);width:21.44px;clip-path:inset(-3px 0 -3px 0)">Cymatics</div>
<div class="t" style="left:886.30px;transform-origin:0 50%;top:287px;font-size:4.83px;line-height:5px;color:#ffffff;font-weight:normal;transform:scaleX(0.9);width:21.44px;clip-path:inset(-3px 0 -3px 0)">Cymatics</div>
<div class="t" style="left:474.30px;transform-origin:0 50%;top:306px;font-size:4.83px;line-height:5px;color:#ffffff;font-weight:normal;transform:scaleX(0.9);width:9.44px;clip-path:inset(-3px 0 -3px 0)">hea</div>
<div class="t" style="left:863.80px;transform-origin:0 50%;top:306px;font-size:4.83px;line-height:5px;color:#ffffff;font-weight:normal;transform:scaleX(0.9);width:9.78px;clip-path:inset(-3px 0 -3px 0)">hea</div>
<div class="t" style="left:475.80px;transform-origin:0 50%;top:325px;font-size:4.83px;line-height:5px;color:#ffffff;font-weight:normal;transform:scaleX(0.9);width:8.00px;clip-path:inset(-3px 0 -3px 0)">Cy</div>
<div class="t" style="left:876.80px;transform-origin:0 50%;top:325px;font-size:4.83px;line-height:5px;color:#ffffff;font-weight:normal;transform:scaleX(0.9);width:8.67px;clip-path:inset(-3px 0 -3px 0)">Cy</div>
<div class="t" style="left:384.80px;transform-origin:0 50%;top:344px;font-size:4.83px;line-height:5px;color:#ffffff;font-weight:normal;transform:scaleX(0.9);width:46.89px;clip-path:inset(-3px 0 -3px 0)">Inst 19</div>
<div class="t" style="left:429.20px;transform-origin:0 50%;top:344px;font-size:4.83px;line-height:5px;color:#ffffff;font-weight:normal;transform:scaleX(0.9);width:47.67px;clip-path:inset(-3px 0 -3px 0)">Inst 19</div>
<div class="t" style="left:205.80px;transform-origin:0 50%;top:363px;font-size:4.83px;line-height:5px;color:#a8a8a8;font-weight:normal;transform:scaleX(0.9);width:41.56px;clip-path:inset(-3px 0 -3px 0)">common</div>
<div class="t" style="left:245.40px;transform-origin:0 50%;top:363px;font-size:4.83px;line-height:5px;color:#a8f0ea;font-weight:normal;transform:scaleX(0.9);width:22.44px;clip-path:inset(-3px 0 -3px 0)">common</div>
<div class="t" style="left:267.80px;transform-origin:0 50%;top:363px;font-size:4.83px;line-height:5px;color:#a8f0ea;font-weight:normal;transform:scaleX(0.9);width:22.56px;clip-path:inset(-3px 0 -3px 0)">common</div>
<div class="t" style="left:290.30px;transform-origin:0 50%;top:363px;font-size:4.83px;line-height:5px;color:#a8f0ea;font-weight:normal;transform:scaleX(0.9);width:22.11px;clip-path:inset(-3px 0 -3px 0)">common</div>
<div class="t" style="left:334.80px;transform-origin:0 50%;top:363px;font-size:4.83px;line-height:5px;color:#a8f0ea;font-weight:normal;transform:scaleX(0.9);width:22.22px;clip-path:inset(-3px 0 -3px 0)">common</div>
<div class="t" style="left:357.00px;transform-origin:0 50%;top:363px;font-size:4.83px;line-height:5px;color:#a8f0ea;font-weight:normal;transform:scaleX(0.9);width:22.33px;clip-path:inset(-3px 0 -3px 0)">common</div>
<div class="t" style="left:384.80px;transform-origin:0 50%;top:363px;font-size:4.83px;line-height:5px;color:#a8f0ea;font-weight:normal;transform:scaleX(0.9);width:22.44px;clip-path:inset(-3px 0 -3px 0)">common</div>
<div class="t" style="left:407.20px;transform-origin:0 50%;top:363px;font-size:4.83px;line-height:5px;color:#a8f0ea;font-weight:normal;transform:scaleX(0.9);width:22.00px;clip-path:inset(-3px 0 -3px 0)">common</div>
<div class="t" style="left:429.20px;transform-origin:0 50%;top:363px;font-size:4.83px;line-height:5px;color:#a8f0ea;font-weight:normal;transform:scaleX(0.9);width:22.44px;clip-path:inset(-3px 0 -3px 0)">common</div>
<div class="t" style="left:529.40px;transform-origin:0 50%;top:363px;font-size:4.83px;line-height:5px;color:#a8f0ea;font-weight:normal;transform:scaleX(0.9);width:22.89px;clip-path:inset(-3px 0 -3px 0)">common</div>
<div class="t" style="left:552.20px;transform-origin:0 50%;top:363px;font-size:4.83px;line-height:5px;color:#a8f0ea;font-weight:normal;transform:scaleX(0.9);width:22.44px;clip-path:inset(-3px 0 -3px 0)">common</div>
<div class="t" style="left:574.60px;transform-origin:0 50%;top:363px;font-size:4.83px;line-height:5px;color:#a8f0ea;font-weight:normal;transform:scaleX(0.9);width:22.22px;clip-path:inset(-3px 0 -3px 0)">common</div>
<div class="t" style="left:596.80px;transform-origin:0 50%;top:363px;font-size:4.83px;line-height:5px;color:#a8f0ea;font-weight:normal;transform:scaleX(0.9);width:22.22px;clip-path:inset(-3px 0 -3px 0)">common</div>
<div class="t" style="left:619.00px;transform-origin:0 50%;top:363px;font-size:4.83px;line-height:5px;color:#a8f0ea;font-weight:normal;transform:scaleX(0.9);width:22.22px;clip-path:inset(-3px 0 -3px 0)">common</div>
<div class="t" style="left:641.20px;transform-origin:0 50%;top:363px;font-size:4.83px;line-height:5px;color:#a8f0ea;font-weight:normal;transform:scaleX(0.9);width:22.11px;clip-path:inset(-3px 0 -3px 0)">common</div>
<div class="t" style="left:663.30px;transform-origin:0 50%;top:363px;font-size:4.83px;line-height:5px;color:#a8f0ea;font-weight:normal;transform:scaleX(0.9);width:22.33px;clip-path:inset(-3px 0 -3px 0)">common</div>
<div class="t" style="left:685.60px;transform-origin:0 50%;top:363px;font-size:4.83px;line-height:5px;color:#a8f0ea;font-weight:normal;transform:scaleX(0.9);width:22.22px;clip-path:inset(-3px 0 -3px 0)">common</div>
<div class="t" style="left:707.80px;transform-origin:0 50%;top:363px;font-size:4.83px;line-height:5px;color:#a8f0ea;font-weight:normal;transform:scaleX(0.9);width:22.22px;clip-path:inset(-3px 0 -3px 0)">common</div>
<div class="t" style="left:730.00px;transform-origin:0 50%;top:363px;font-size:4.83px;line-height:5px;color:#a8f0ea;font-weight:normal;transform:scaleX(0.9);width:22.33px;clip-path:inset(-3px 0 -3px 0)">common</div>
<div class="t" style="left:752.30px;transform-origin:0 50%;top:363px;font-size:4.83px;line-height:5px;color:#a8f0ea;font-weight:normal;transform:scaleX(0.9);width:22.33px;clip-path:inset(-3px 0 -3px 0)">common</div>
<div class="t" style="left:774.60px;transform-origin:0 50%;top:363px;font-size:4.83px;line-height:5px;color:#a8f0ea;font-weight:normal;transform:scaleX(0.9);width:22.22px;clip-path:inset(-3px 0 -3px 0)">common</div>
<div class="t" style="left:796.80px;transform-origin:0 50%;top:363px;font-size:4.83px;line-height:5px;color:#a8f0ea;font-weight:normal;transform:scaleX(0.9);width:22.22px;clip-path:inset(-3px 0 -3px 0)">common</div>
<div class="t" style="left:819.00px;transform-origin:0 50%;top:363px;font-size:4.83px;line-height:5px;color:#a8f0ea;font-weight:normal;transform:scaleX(0.9);width:22.33px;clip-path:inset(-3px 0 -3px 0)">common</div>
<div class="t" style="left:192.80px;transform-origin:0 50%;top:100px;font-size:4.89px;line-height:5px;color:#b4f2b8;font-weight:bold;transform:scaleX(0.9);-webkit-text-stroke:0.10px #b4f2b8;">kick</div>
<div class="t" style="left:577.20px;transform-origin:0 50%;top:100px;font-size:4.89px;line-height:5px;color:#b4f2b8;font-weight:bold;transform:scaleX(0.9);-webkit-text-stroke:0.10px #b4f2b8;">kick</div>
<svg width="960" height="540"><path d="M708.2 50 V540" stroke="#7c7c7c" stroke-width="0.7"/><path d="M705.4 47.4 h5.6 v3.2 l-2.8 2.8 l-2.8 -2.8z" fill="#c9c9c9" stroke="#8a8a8a" stroke-width="0.4"/></svg>
<div style="left:573.80px;top:361.80px;width:385.80px;height:181.00px;background:#000;border-radius:4px 4px 0 0;opacity:0.35"></div>
<div style="left:574.80px;top:362.40px;width:383.80px;height:177.80px;background:#161a1e;border-radius:3.5px 3.5px 3px 3px;overflow:hidden"><div style="left:0;top:0;width:384px;height:11.4px;background:#1d1d1e"></div><div style="left:0;top:11.4px;width:384px;height:152.4px;background:radial-gradient(ellipse 62% 62% at 52% 28%, #2c363b 0%, #222a2f 42%, #171c20 80%, #111417 100%)"></div><div style="left:0;top:163.8px;width:384px;height:14px;background:#1d1f22"></div></div>
<div class="t" style="left:706.60px;width:120px;text-align:center;transform-origin:50% 50%;top:366px;font-size:5.78px;line-height:6px;color:#e6e6e6;font-weight:bold;transform:scaleX(0.9);">Stereo Out: User Default</div>
<svg width="960" height="540"><circle cx="579.8" cy="367.6" r="2.3" fill="#ececec"/><rect x="951.2" y="365.8" width="5" height="4" rx="0.6" fill="none" stroke="#d8d8d8" stroke-width="0.6"/><path d="M953 367.8 h1.6" stroke="#d8d8d8" stroke-width="0.5"/><path d="M591.00 386 V484" stroke="#4a565c" stroke-width="0.35" opacity="0.2"/><path d="M610.57 386 V484" stroke="#4a565c" stroke-width="0.35" opacity="0.2"/><path d="M624.45 386 V484" stroke="#4a565c" stroke-width="0.35" opacity="0.2"/><path d="M635.22 386 V484" stroke="#4a565c" stroke-width="0.35" opacity="0.2"/><path d="M644.02 386 V484" stroke="#4a565c" stroke-width="0.35" opacity="0.2"/><path d="M651.46 386 V484" stroke="#4a565c" stroke-width="0.35" opacity="0.2"/><path d="M657.91 386 V484" stroke="#4a565c" stroke-width="0.35" opacity="0.2"/><path d="M663.59 386 V484" stroke="#4a565c" stroke-width="0.35" opacity="0.2"/><path d="M668.68 386 V484" stroke="#4a565c" stroke-width="0.35" opacity="0.4"/><path d="M702.13 386 V484" stroke="#4a565c" stroke-width="0.35" opacity="0.2"/><path d="M721.70 386 V484" stroke="#4a565c" stroke-width="0.35" opacity="0.2"/><path d="M735.59 386 V484" stroke="#4a565c" stroke-width="0.35" opacity="0.2"/><path d="M746.36 386 V484" stroke="#4a565c" stroke-width="0.35" opacity="0.2"/><path d="M755.16 386 V484" stroke="#4a565c" stroke-width="0.35" opacity="0.2"/><path d="M762.60 386 V484" stroke="#4a565c" stroke-width="0.35" opacity="0.2"/><path d="M769.04 386 V484" stroke="#4a565c" stroke-width="0.35" opacity="0.2"/><path d="M774.73 386 V484" stroke="#4a565c" stroke-width="0.35" opacity="0.2"/><path d="M779.81 386 V484" stroke="#4a565c" stroke-width="0.35" opacity="0.4"/><path d="M813.27 386 V484" stroke="#4a565c" stroke-width="0.35" opacity="0.2"/><path d="M832.84 386 V484" stroke="#4a565c" stroke-width="0.35" opacity="0.2"/><path d="M846.72 386 V484" stroke="#4a565c" stroke-width="0.35" opacity="0.2"/><path d="M857.49 386 V484" stroke="#4a565c" stroke-width="0.35" opacity="0.2"/><path d="M866.29 386 V484" stroke="#4a565c" stroke-width="0.35" opacity="0.2"/><path d="M873.73 386 V484" stroke="#4a565c" stroke-width="0.35" opacity="0.2"/><path d="M880.18 386 V484" stroke="#4a565c" stroke-width="0.35" opacity="0.2"/><path d="M885.86 386 V484" stroke="#4a565c" stroke-width="0.35" opacity="0.2"/><path d="M890.95 386 V484" stroke="#4a565c" stroke-width="0.35" opacity="0.4"/><path d="M924.40 386 V484" stroke="#4a565c" stroke-width="0.35" opacity="0.2"/><path d="M589 390.60 H928" stroke="#4a565c" stroke-width="0.35" opacity="0.2"/><path d="M589 398.25 H928" stroke="#4a565c" stroke-width="0.35" opacity="0.2"/><path d="M589 405.90 H928" stroke="#4a565c" stroke-width="0.35" opacity="0.2"/><path d="M589 413.55 H928" stroke="#4a565c" stroke-width="0.35" opacity="0.2"/><path d="M589 421.20 H928" stroke="#4a565c" stroke-width="0.35" opacity="0.2"/><path d="M589 428.85 H928" stroke="#4a565c" stroke-width="0.35" opacity="0.2"/><path d="M589 436.50 H928" stroke="#4a565c" stroke-width="0.35" opacity="0.2"/><path d="M589 444.15 H928" stroke="#4a565c" stroke-width="0.35" opacity="0.2"/><path d="M589 451.80 H928" stroke="#4a565c" stroke-width="0.35" opacity="0.2"/><path d="M589 459.45 H928" stroke="#4a565c" stroke-width="0.35" opacity="0.2"/><path d="M589 467.10 H928" stroke="#4a565c" stroke-width="0.35" opacity="0.2"/><path d="M589 474.75 H928" stroke="#4a565c" stroke-width="0.35" opacity="0.2"/><path d="M589 482.40 H928" stroke="#4a565c" stroke-width="0.35" opacity="0.2"/><path d="M589 490.05 H928" stroke="#4a565c" stroke-width="0.35" opacity="0.2"/><path d="M589 405.6 H928" stroke="#3d6a86" stroke-width="0.4" opacity="0.35"/><path d="M589 436.0 H928" stroke="#70777c" stroke-width="0.5"/><path d="M599.6 382.6 q2.2 -4.2 5.4 -4.4" fill="none" stroke="#6f7d86" stroke-width="0.6"/><path d="M643.4 377.8 h2.6 q1.8 0 2.4 2.7 q-0.6 2.7 -2.4 2.7 h-2.6 M648.4 380.5 h3.2" fill="none" stroke="#bcd0dc" stroke-width="0.65"/><path d="M685.9 380.5 h2.6 M694.0999999999999 380.5 h2.6 M688.5 380.5 l2.8 -2.7 l2.8 2.7 l-2.8 2.7z" fill="none" stroke="#bcd0dc" stroke-width="0.6"/><path d="M730.0 380.5 h2.6 M738.1999999999999 380.5 h2.6 M732.6 380.5 l2.8 -2.7 l2.8 2.7 l-2.8 2.7z" fill="none" stroke="#bcd0dc" stroke-width="0.6"/><path d="M774.4 380.5 h2.6 M782.5999999999999 380.5 h2.6 M777.0 380.5 l2.8 -2.7 l2.8 2.7 l-2.8 2.7z" fill="none" stroke="#bcd0dc" stroke-width="0.6"/><path d="M818.5 380.5 h2.6 M826.6999999999999 380.5 h2.6 M821.1 380.5 l2.8 -2.7 l2.8 2.7 l-2.8 2.7z" fill="none" stroke="#bcd0dc" stroke-width="0.6"/><path d="M864.4 380.5 h3.2 q0.6 -2.7 2.4 -2.7 h2.6 M867.6 380.5 q0.6 2.7 2.4 2.7 h2.6" fill="none" stroke="#bcd0dc" stroke-width="0.65"/><path d="M909.0 377.4 q3.4 0.4 5.4 5" fill="none" stroke="#6f7d86" stroke-width="0.6"/><circle cx="947.4" cy="436" r="2.9" fill="none" stroke="#c8d0d6" stroke-width="0.6"/><path d="M947.4 434.2 v3.6" stroke="#c8d0d6" stroke-width="0.6"/><clipPath id="eqc"><rect x="589" y="386.4" width="340" height="98"/></clipPath><g clip-path="url(#eqc)"><path d="M589.87 425.98 L601.38 419.71 L611.84 413.43 L622.30 405.06 L627.53 399.83 L631.72 393.56 L634.85 387.28 L637.36 381.00 M644.97 381.00 L647.77 387.28 L653.36 402.97 L661.70 417.62 L671.87 436.44 L675.97 437.91 L680.00 430.63 L684.43 442.40 L687.90 449.20 L692.27 437.04 L694.82 424.25 L697.89 439.73 L701.54 447.73 L703.92 443.27 L707.13 434.80 L709.42 437.61 L711.83 432.32 L714.41 426.65 L716.02 420.78 L718.53 419.62 L720.13 428.70 L723.71 433.41 L726.00 424.87 L728.65 417.10 L731.13 429.45 L733.66 431.76 L735.06 428.69 L735.96 421.75 L736.88 432.23 L740.22 421.00 L742.74 411.76 L745.32 422.94 L747.22 439.04 L749.07 419.58 L751.79 424.23 L754.34 427.85 L756.49 438.53 L757.24 433.86 L759.73 431.99 L761.34 435.70 L763.88 427.07 L765.73 438.48 L767.78 428.33 L759.58 436.88 L762.54 435.12 L764.41 425.96 L766.00 434.01 L767.26 441.21 L769.00 435.64 L771.04 428.28 L774.07 422.47 L776.93 422.43 L778.82 433.95 L779.63 433.11 L781.52 432.27 L782.72 422.56 L784.84 430.06 L786.09 438.39 L788.42 438.81 L791.08 442.95 L793.47 441.23 L794.90 434.30 L796.45 425.03 L797.29 418.24 L799.93 429.20 L801.01 435.61 L802.66 422.55 L804.53 428.19 L806.79 436.57 L809.62 429.08 L811.07 423.43 L813.90 427.99 L814.39 433.23 L816.20 432.29 L817.74 433.33 L819.66 429.46 L821.23 422.35 L822.91 427.23 L825.18 435.51 L827.48 430.28 L830.21 426.31 L831.48 425.92 L833.53 428.33 L834.66 427.07 L836.33 434.12 L838.20 429.75 L840.76 424.70 L842.46 423.90 L844.93 423.61 L846.69 431.28 L848.81 435.70 L851.12 429.49 L853.53 430.06 L855.03 427.57 L858.45 430.14 L860.07 431.26 L862.89 437.82 L865.42 434.55 L866.85 429.04 L868.85 436.51 L871.02 436.30 L872.45 435.89 L875.54 435.77 L877.19 443.02 L879.35 440.70 L881.69 433.04 L882.69 436.80 L885.57 437.65 L887.60 430.08 L889.79 431.84 L892.10 436.17 L893.94 437.54 L895.62 432.89 L897.93 438.12 L900.51 443.46 L902.38 441.07 L904.80 436.70 L906.16 445.62 L907.60 446.23 L909.72 443.50 L911.39 445.09 L912.53 445.79 L915.00 448.31 L915.57 447.56 L918.42 451.88 L919.49 458.31 L919.64 462.52 L920.91 469.37 L922.47 475.40 L923.30 473.31 L924.66 478.45 L925.79 467.50 L926.74 468.48" fill="none" stroke="#705458" stroke-width="0.45" opacity="0.8"/><path d="M589.87 425.08 L601.38 418.81 L611.84 412.53 L622.30 404.16 L627.53 398.93 L631.72 392.66 L634.85 386.38 L637.36 380.10 M644.90 380.10 L647.41 386.38 L653.68 402.07 L662.05 416.72 L671.46 435.54 L675.65 437.01 L680.25 431.99 L684.19 439.26 L688.20 446.00 L691.89 435.92 L694.90 426.13 L698.35 436.45 L701.80 446.00 L704.16 440.83 L707.03 435.54 L709.75 435.79 L712.26 433.45 L714.35 424.04 L715.91 421.60 L718.12 420.90 L720.61 429.58 L723.77 435.54 L726.33 425.16 L728.58 418.81 L731.26 426.61 L733.18 430.31 L734.87 427.68 L736.32 424.04 L737.36 429.27 L740.02 417.72 L743.22 410.44 L745.34 421.05 L747.41 435.54 L749.50 418.81 L751.55 421.33 L754.10 426.13 L756.19 435.54 L757.39 432.25 L759.33 429.27 L761.42 433.45 L763.51 426.13 L765.61 438.68 L767.70 427.18 L760.00 435.54 L762.04 432.34 L764.18 426.13 L765.77 433.02 L767.32 438.68 L769.41 433.64 L771.51 427.18 L774.09 423.58 L776.74 421.95 L778.70 430.93 L779.87 435.54 L781.72 430.71 L783.01 424.04 L784.43 428.60 L786.15 435.54 L788.60 437.31 L791.38 442.87 L793.16 438.24 L794.52 434.50 L796.37 425.63 L797.66 417.76 L799.59 426.61 L800.79 432.41 L802.89 424.04 L804.58 429.04 L807.07 436.59 L809.49 428.61 L811.26 420.90 L813.42 427.77 L814.81 435.54 L815.83 434.54 L817.53 432.41 L819.85 427.21 L821.72 424.04 L822.95 429.58 L824.85 436.59 L827.84 432.50 L830.08 426.13 L831.35 424.49 L833.22 425.08 L834.47 428.38 L836.36 435.54 L838.69 429.42 L840.54 426.13 L842.68 424.33 L844.73 422.99 L846.57 429.24 L848.91 433.45 L850.71 431.47 L853.10 428.22 L855.40 427.35 L858.33 427.18 L860.19 430.35 L862.51 435.54 L864.98 434.26 L866.69 430.31 L868.63 434.10 L870.88 434.50 L872.74 432.99 L875.06 432.41 L877.15 440.77 L879.53 437.74 L881.34 433.45 L883.11 436.65 L885.52 435.54 L887.62 432.41 L889.48 433.96 L891.80 437.64 L894.11 435.31 L895.98 434.50 L897.91 436.28 L900.17 441.82 L901.93 440.62 L904.35 438.68 L906.44 444.96 L907.81 444.36 L909.58 442.87 L911.05 444.23 L912.72 446.00 L914.66 445.41 L915.86 444.96 L917.95 451.23 L919.41 459.60 L919.60 462.00 L920.80 471.70 L922.00 474.80 L923.40 471.00 L924.60 478.00 L925.60 469.60 L926.70 468.50" fill="none" stroke="#9c7c80" stroke-width="0.5"/></g><path d="M581.4 486.4 h1.4" stroke="#9aa4aa" stroke-width="0.5"/><path d="M581.2 384.4 h2 M582.2 383.4 v2" stroke="#9aa4aa" stroke-width="0.45"/><path d="M935.4 384.2 h2 M936.4 383.2 v2" stroke="#55606a" stroke-width="0.45"/><path d="M935.6 486.4 h1.4" stroke="#55606a" stroke-width="0.5"/><rect x="588.4" y="513.2" width="37.6" height="9.4" rx="0.8" fill="#2c3945"/><rect x="628.4" y="513.2" width="29" height="9.4" rx="0.8" fill="#2c3945"/><rect x="692.2" y="513.2" width="40" height="9.4" rx="0.8" fill="#2c3945"/><path d="M727.2 517.2 l1 -1.1 l1 1.1 M727.2 518.6 l1 1.1 l1 -1.1" fill="none" stroke="#7e8a96" stroke-width="0.5"/><path d="M581.2 532.2 l1.6 1.7 l-1.6 1.7" fill="none" stroke="#b8b8b8" stroke-width="0.6"/></svg>
<div class="t" style="left:576.20px;width:12px;text-align:center;transform-origin:50% 50%;top:388px;font-size:5.11px;line-height:6px;color:#b4bcc2;font-weight:normal;transform:scaleX(0.9);">15</div>
<div class="t" style="left:576.20px;width:12px;text-align:center;transform-origin:50% 50%;top:396px;font-size:5.11px;line-height:6px;color:#b4bcc2;font-weight:normal;transform:scaleX(0.9);">20</div>
<div class="t" style="left:576.20px;width:12px;text-align:center;transform-origin:50% 50%;top:404px;font-size:5.11px;line-height:6px;color:#b4bcc2;font-weight:normal;transform:scaleX(0.9);">25</div>
<div class="t" style="left:576.20px;width:12px;text-align:center;transform-origin:50% 50%;top:411px;font-size:5.11px;line-height:6px;color:#b4bcc2;font-weight:normal;transform:scaleX(0.9);">30</div>
<div class="t" style="left:576.20px;width:12px;text-align:center;transform-origin:50% 50%;top:419px;font-size:5.11px;line-height:6px;color:#b4bcc2;font-weight:normal;transform:scaleX(0.9);">35</div>
<div class="t" style="left:576.20px;width:12px;text-align:center;transform-origin:50% 50%;top:427px;font-size:5.11px;line-height:6px;color:#b4bcc2;font-weight:normal;transform:scaleX(0.9);">40</div>
<div class="t" style="left:576.20px;width:12px;text-align:center;transform-origin:50% 50%;top:434px;font-size:5.11px;line-height:6px;color:#b4bcc2;font-weight:normal;transform:scaleX(0.9);">45</div>
<div class="t" style="left:576.20px;width:12px;text-align:center;transform-origin:50% 50%;top:442px;font-size:5.11px;line-height:6px;color:#b4bcc2;font-weight:normal;transform:scaleX(0.9);">50</div>
<div class="t" style="left:576.20px;width:12px;text-align:center;transform-origin:50% 50%;top:450px;font-size:5.11px;line-height:6px;color:#b4bcc2;font-weight:normal;transform:scaleX(0.9);">55</div>
<div class="t" style="left:576.20px;width:12px;text-align:center;transform-origin:50% 50%;top:457px;font-size:5.11px;line-height:6px;color:#b4bcc2;font-weight:normal;transform:scaleX(0.9);">60</div>
<div class="t" style="left:576.20px;width:12px;text-align:center;transform-origin:50% 50%;top:465px;font-size:5.11px;line-height:6px;color:#b4bcc2;font-weight:normal;transform:scaleX(0.9);">65</div>
<div class="t" style="left:576.20px;width:12px;text-align:center;transform-origin:50% 50%;top:473px;font-size:5.11px;line-height:6px;color:#b4bcc2;font-weight:normal;transform:scaleX(0.9);">70</div>
<div class="t" style="left:576.20px;width:12px;text-align:center;transform-origin:50% 50%;top:480px;font-size:5.11px;line-height:6px;color:#b4bcc2;font-weight:normal;transform:scaleX(0.9);">75</div>
<div class="t" style="left:930.40px;width:12px;text-align:center;transform-origin:50% 50%;top:388px;font-size:5.11px;line-height:6px;color:#56616a;font-weight:normal;transform:scaleX(0.9);">15</div>
<div class="t" style="left:930.40px;width:12px;text-align:center;transform-origin:50% 50%;top:403px;font-size:5.11px;line-height:6px;color:#56616a;font-weight:normal;transform:scaleX(0.9);">10</div>
<div class="t" style="left:930.40px;width:12px;text-align:center;transform-origin:50% 50%;top:419px;font-size:5.11px;line-height:6px;color:#56616a;font-weight:normal;transform:scaleX(0.9);">5</div>
<div class="t" style="left:930.40px;width:12px;text-align:center;transform-origin:50% 50%;top:434px;font-size:5.11px;line-height:6px;color:#56616a;font-weight:normal;transform:scaleX(0.9);">0</div>
<div class="t" style="left:930.40px;width:12px;text-align:center;transform-origin:50% 50%;top:449px;font-size:5.11px;line-height:6px;color:#56616a;font-weight:normal;transform:scaleX(0.9);">5</div>
<div class="t" style="left:930.40px;width:12px;text-align:center;transform-origin:50% 50%;top:464px;font-size:5.11px;line-height:6px;color:#56616a;font-weight:normal;transform:scaleX(0.9);">10</div>
<div class="t" style="left:930.40px;width:12px;text-align:center;transform-origin:50% 50%;top:479px;font-size:5.11px;line-height:6px;color:#56616a;font-weight:normal;transform:scaleX(0.9);">15</div>
<div class="t" style="left:583.40px;width:16px;text-align:center;transform-origin:50% 50%;top:438px;font-size:5.22px;line-height:6px;color:#dde2e6;font-weight:normal;transform:scaleX(0.9);">20</div>
<div class="t" style="left:602.97px;width:16px;text-align:center;transform-origin:50% 50%;top:438px;font-size:5.22px;line-height:6px;color:#dde2e6;font-weight:normal;transform:scaleX(0.9);">30</div>
<div class="t" style="left:616.85px;width:16px;text-align:center;transform-origin:50% 50%;top:438px;font-size:5.22px;line-height:6px;color:#dde2e6;font-weight:normal;transform:scaleX(0.9);">40</div>
<div class="t" style="left:627.62px;width:16px;text-align:center;transform-origin:50% 50%;top:438px;font-size:5.22px;line-height:6px;color:#dde2e6;font-weight:normal;transform:scaleX(0.9);">50</div>
<div class="t" style="left:636.42px;width:16px;text-align:center;transform-origin:50% 50%;top:438px;font-size:5.22px;line-height:6px;color:#dde2e6;font-weight:normal;transform:scaleX(0.9);">60</div>
<div class="t" style="left:650.31px;width:16px;text-align:center;transform-origin:50% 50%;top:438px;font-size:5.22px;line-height:6px;color:#dde2e6;font-weight:normal;transform:scaleX(0.9);">80</div>
<div class="t" style="left:661.08px;width:16px;text-align:center;transform-origin:50% 50%;top:438px;font-size:5.22px;line-height:6px;color:#dde2e6;font-weight:normal;transform:scaleX(0.9);">100</div>
<div class="t" style="left:694.53px;width:16px;text-align:center;transform-origin:50% 50%;top:438px;font-size:5.22px;line-height:6px;color:#dde2e6;font-weight:normal;transform:scaleX(0.9);">200</div>
<div class="t" style="left:714.10px;width:16px;text-align:center;transform-origin:50% 50%;top:438px;font-size:5.22px;line-height:6px;color:#dde2e6;font-weight:normal;transform:scaleX(0.9);">300</div>
<div class="t" style="left:727.99px;width:16px;text-align:center;transform-origin:50% 50%;top:438px;font-size:5.22px;line-height:6px;color:#dde2e6;font-weight:normal;transform:scaleX(0.9);">400</div>
<div class="t" style="left:738.76px;width:16px;text-align:center;transform-origin:50% 50%;top:438px;font-size:5.22px;line-height:6px;color:#dde2e6;font-weight:normal;transform:scaleX(0.9);">500</div>
<div class="t" style="left:761.44px;width:16px;text-align:center;transform-origin:50% 50%;top:438px;font-size:5.22px;line-height:6px;color:#dde2e6;font-weight:normal;transform:scaleX(0.9);">800</div>
<div class="t" style="left:772.21px;width:16px;text-align:center;transform-origin:50% 50%;top:438px;font-size:5.22px;line-height:6px;color:#dde2e6;font-weight:normal;transform:scaleX(0.9);">1k</div>
<div class="t" style="left:805.67px;width:16px;text-align:center;transform-origin:50% 50%;top:438px;font-size:5.22px;line-height:6px;color:#dde2e6;font-weight:normal;transform:scaleX(0.9);">2k</div>
<div class="t" style="left:825.24px;width:16px;text-align:center;transform-origin:50% 50%;top:438px;font-size:5.22px;line-height:6px;color:#dde2e6;font-weight:normal;transform:scaleX(0.9);">3k</div>
<div class="t" style="left:839.12px;width:16px;text-align:center;transform-origin:50% 50%;top:438px;font-size:5.22px;line-height:6px;color:#dde2e6;font-weight:normal;transform:scaleX(0.9);">4k</div>
<div class="t" style="left:858.69px;width:16px;text-align:center;transform-origin:50% 50%;top:438px;font-size:5.22px;line-height:6px;color:#dde2e6;font-weight:normal;transform:scaleX(0.9);">6k</div>
<div class="t" style="left:872.58px;width:16px;text-align:center;transform-origin:50% 50%;top:438px;font-size:5.22px;line-height:6px;color:#dde2e6;font-weight:normal;transform:scaleX(0.9);">8k</div>
<div class="t" style="left:883.35px;width:16px;text-align:center;transform-origin:50% 50%;top:438px;font-size:5.22px;line-height:6px;color:#dde2e6;font-weight:normal;transform:scaleX(0.9);">10k</div>
<div class="t" style="left:916.80px;width:16px;text-align:center;transform-origin:50% 50%;top:438px;font-size:5.22px;line-height:6px;color:#dde2e6;font-weight:normal;transform:scaleX(0.9);">20k</div>
<div class="t" style="left:582.40px;width:40px;text-align:center;transform-origin:50% 50%;top:489px;font-size:5.67px;line-height:6px;color:#4f5a64;font-weight:normal;transform:scaleX(0.9);">20.0 <span style="font-size:3px">Hz</span></div>
<div class="t" style="left:582.40px;width:40px;text-align:center;transform-origin:50% 50%;top:497px;font-size:5.67px;line-height:6px;color:#4f5a64;font-weight:normal;transform:scaleX(0.9);">12 <span style="font-size:3px">dB/Oct</span></div>
<div class="t" style="left:581.80px;width:40px;text-align:center;transform-origin:50% 50%;top:505px;font-size:5.67px;line-height:6px;color:#4f5a64;font-weight:normal;transform:scaleX(0.9);">0.71</div>
<div class="t" style="left:627.00px;width:40px;text-align:center;transform-origin:50% 50%;top:489px;font-size:5.67px;line-height:6px;color:#d6dce0;font-weight:normal;transform:scaleX(0.9);">75.0 <span style="font-size:3px">Hz</span></div>
<div class="t" style="left:627.00px;width:40px;text-align:center;transform-origin:50% 50%;top:497px;font-size:5.67px;line-height:6px;color:#d6dce0;font-weight:normal;transform:scaleX(0.9);">0.0 <span style="font-size:3px">dB</span></div>
<div class="t" style="left:626.40px;width:40px;text-align:center;transform-origin:50% 50%;top:505px;font-size:5.67px;line-height:6px;color:#d6dce0;font-weight:normal;transform:scaleX(0.9);">1.00</div>
<div class="t" style="left:671.30px;width:40px;text-align:center;transform-origin:50% 50%;top:489px;font-size:5.67px;line-height:6px;color:#d6dce0;font-weight:normal;transform:scaleX(0.9);">100 <span style="font-size:3px">Hz</span></div>
<div class="t" style="left:671.30px;width:40px;text-align:center;transform-origin:50% 50%;top:497px;font-size:5.67px;line-height:6px;color:#d6dce0;font-weight:normal;transform:scaleX(0.9);">0.0 <span style="font-size:3px">dB</span></div>
<div class="t" style="left:670.70px;width:40px;text-align:center;transform-origin:50% 50%;top:505px;font-size:5.67px;line-height:6px;color:#d6dce0;font-weight:normal;transform:scaleX(0.9);">0.60</div>
<div class="t" style="left:715.40px;width:40px;text-align:center;transform-origin:50% 50%;top:489px;font-size:5.67px;line-height:6px;color:#d6dce0;font-weight:normal;transform:scaleX(0.9);">250 <span style="font-size:3px">Hz</span></div>
<div class="t" style="left:715.40px;width:40px;text-align:center;transform-origin:50% 50%;top:497px;font-size:5.67px;line-height:6px;color:#d6dce0;font-weight:normal;transform:scaleX(0.9);">0.0 <span style="font-size:3px">dB</span></div>
<div class="t" style="left:714.80px;width:40px;text-align:center;transform-origin:50% 50%;top:505px;font-size:5.67px;line-height:6px;color:#d6dce0;font-weight:normal;transform:scaleX(0.9);">0.60</div>
<div class="t" style="left:759.80px;width:40px;text-align:center;transform-origin:50% 50%;top:489px;font-size:5.67px;line-height:6px;color:#d6dce0;font-weight:normal;transform:scaleX(0.9);">750 <span style="font-size:3px">Hz</span></div>
<div class="t" style="left:759.80px;width:40px;text-align:center;transform-origin:50% 50%;top:497px;font-size:5.67px;line-height:6px;color:#d6dce0;font-weight:normal;transform:scaleX(0.9);">0.0 <span style="font-size:3px">dB</span></div>
<div class="t" style="left:759.20px;width:40px;text-align:center;transform-origin:50% 50%;top:505px;font-size:5.67px;line-height:6px;color:#d6dce0;font-weight:normal;transform:scaleX(0.9);">0.60</div>
<div class="t" style="left:803.90px;width:40px;text-align:center;transform-origin:50% 50%;top:489px;font-size:5.67px;line-height:6px;color:#d6dce0;font-weight:normal;transform:scaleX(0.9);">2500 <span style="font-size:3px">Hz</span></div>
<div class="t" style="left:803.90px;width:40px;text-align:center;transform-origin:50% 50%;top:497px;font-size:5.67px;line-height:6px;color:#d6dce0;font-weight:normal;transform:scaleX(0.9);">0.0 <span style="font-size:3px">dB</span></div>
<div class="t" style="left:803.30px;width:40px;text-align:center;transform-origin:50% 50%;top:505px;font-size:5.67px;line-height:6px;color:#d6dce0;font-weight:normal;transform:scaleX(0.9);">0.60</div>
<div class="t" style="left:848.60px;width:40px;text-align:center;transform-origin:50% 50%;top:489px;font-size:5.67px;line-height:6px;color:#d6dce0;font-weight:normal;transform:scaleX(0.9);">7500 <span style="font-size:3px">Hz</span></div>
<div class="t" style="left:848.60px;width:40px;text-align:center;transform-origin:50% 50%;top:497px;font-size:5.67px;line-height:6px;color:#d6dce0;font-weight:normal;transform:scaleX(0.9);">0.0 <span style="font-size:3px">dB</span></div>
<div class="t" style="left:848.00px;width:40px;text-align:center;transform-origin:50% 50%;top:505px;font-size:5.67px;line-height:6px;color:#d6dce0;font-weight:normal;transform:scaleX(0.9);">0.71</div>
<div class="t" style="left:892.60px;width:40px;text-align:center;transform-origin:50% 50%;top:489px;font-size:5.67px;line-height:6px;color:#4f5a64;font-weight:normal;transform:scaleX(0.9);">20000 <span style="font-size:3px">Hz</span></div>
<div class="t" style="left:892.60px;width:40px;text-align:center;transform-origin:50% 50%;top:497px;font-size:5.67px;line-height:6px;color:#4f5a64;font-weight:normal;transform:scaleX(0.9);">24 <span style="font-size:3px">dB/Oct</span></div>
<div class="t" style="left:892.00px;width:40px;text-align:center;transform-origin:50% 50%;top:505px;font-size:5.67px;line-height:6px;color:#4f5a64;font-weight:normal;transform:scaleX(0.9);">0.71</div>
<div class="t" style="left:937.40px;width:20px;text-align:center;transform-origin:50% 50%;top:488px;font-size:5.44px;line-height:6px;color:#b4bcc4;font-weight:normal;transform:scaleX(0.9);">Gain</div>
<div class="t" style="left:937.40px;width:20px;text-align:center;transform-origin:50% 50%;top:497px;font-size:5.67px;line-height:6px;color:#d6dce0;font-weight:normal;transform:scaleX(0.9);">0.0 <span style="font-size:3px">dB</span></div>
<div class="t" style="left:587.20px;width:40px;text-align:center;transform-origin:50% 50%;top:516px;font-size:5.78px;line-height:6px;color:#dfe6ec;font-weight:normal;transform:scaleX(0.9);">Analyzer <span style="font-size:2.6px;vertical-align:1.4px">POST</span></div>
<div class="t" style="left:622.80px;width:40px;text-align:center;transform-origin:50% 50%;top:516px;font-size:5.78px;line-height:6px;color:#dfe6ec;font-weight:normal;transform:scaleX(0.9);">Q-Couple</div>
<div class="t" style="left:661.60px;transform-origin:0 50%;top:516px;font-size:5.78px;line-height:6px;color:#5f6b76;font-weight:normal;transform:scaleX(0.9);">Processing:</div>
<div class="t" style="left:695.00px;transform-origin:0 50%;top:516px;font-size:5.78px;line-height:6px;color:#6f7b86;font-weight:normal;transform:scaleX(0.9);">Stereo</div>
<div class="t" style="left:706.80px;width:120px;text-align:center;transform-origin:50% 50%;top:527px;font-size:8.44px;line-height:10px;color:#cfcfcf;font-weight:normal;transform:scaleX(0.9);letter-spacing:-0.1px">Linear Phase EQ</div>
</div>
</body></html>
